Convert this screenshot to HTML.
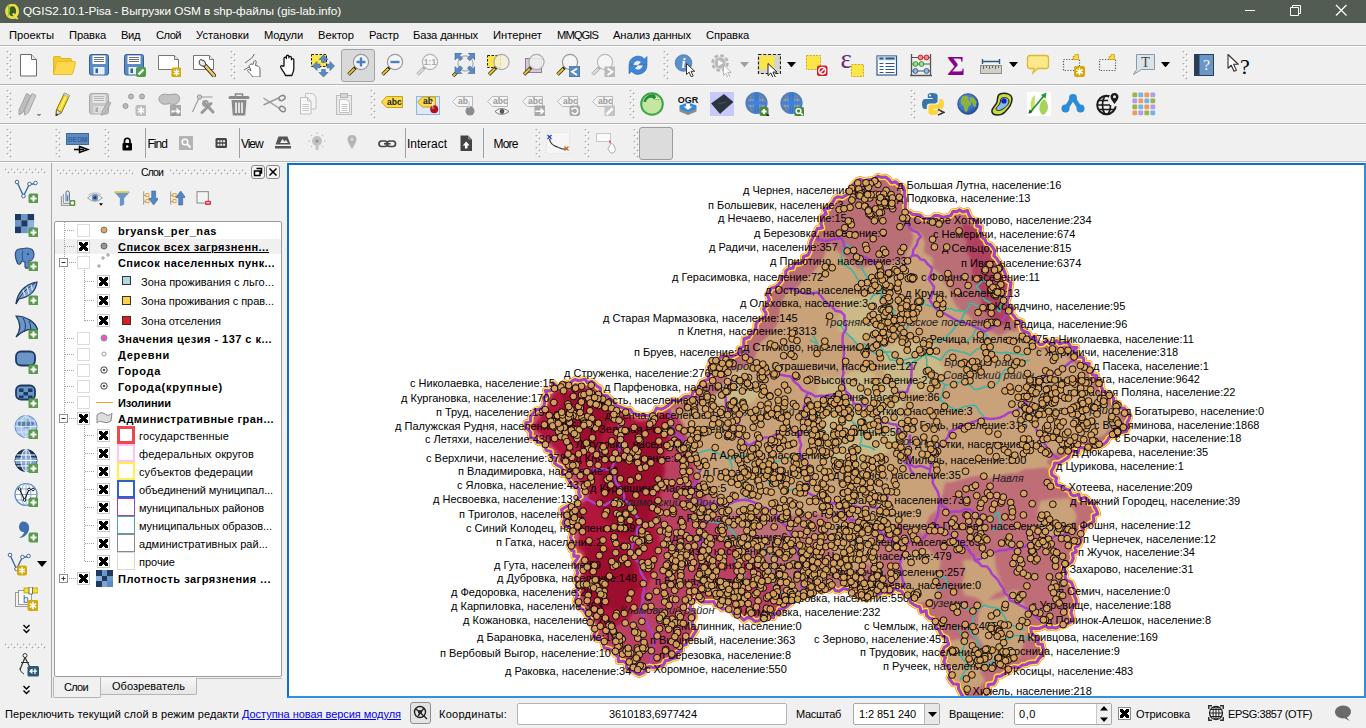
<!DOCTYPE html><html lang="ru"><head><meta charset="utf-8"><title>QGIS</title><style>
*{box-sizing:border-box;margin:0;padding:0}
html,body{width:1366px;height:728px;overflow:hidden;background:#f0f0f0;font-family:"Liberation Sans",sans-serif;font-size:12px;color:#000}
.abs{position:absolute;white-space:nowrap}
#title{position:absolute;left:0;top:0;width:1366px;height:23px;background:#525c52}
#title .t{position:absolute;left:23px;top:4px;color:#fff;font-size:12.4px;letter-spacing:0px;white-space:nowrap}
#menu{position:absolute;left:0;top:23px;width:1366px;height:23px;background:#f0f0f0}
#menu span{position:absolute;top:5px;font-size:12px;white-space:nowrap}
.hl{position:absolute;left:0;width:1366px;height:2px;background:linear-gradient(#b6b6b6 50%,#fbfbfb 50%)}
.grip{position:absolute;width:6px;background-image:radial-gradient(circle at 1.500px 0.500px,#adadad 0.850px,transparent 1.100px),radial-gradient(circle at 4.500px 3.500px,#adadad 0.850px,transparent 1.100px),radial-gradient(circle at 2.500px 1.500px,#fff 0.850px,transparent 1.100px),radial-gradient(circle at 5.500px 4.500px,#fff 0.850px,transparent 1.100px);background-size:6px 6px}
.gripw{position:absolute;height:6px;background-image:radial-gradient(circle at 0.500px 1.500px,#adadad 0.850px,transparent 1.100px),radial-gradient(circle at 3.500px 4.500px,#adadad 0.850px,transparent 1.100px),radial-gradient(circle at 1.500px 2.500px,#fff 0.850px,transparent 1.100px),radial-gradient(circle at 4.500px 5.500px,#fff 0.850px,transparent 1.100px);background-size:6px 6px}
.ic{position:absolute;width:24px;height:24px;overflow:visible}
.tx{font-family:"DejaVu Sans Condensed","Liberation Sans",sans-serif}
.tree{position:absolute;left:54px;top:221px;width:228px;height:456px;background:#fff;border:1px solid #9c9c9c;border-radius:2px}
.row{position:absolute;left:0;white-space:nowrap;font-family:"DejaVu Sans Condensed","Liberation Sans",sans-serif;font-size:11px}
.cb{position:absolute;width:13px;height:13px;border:1px solid #dcdcdc;background:#fff}
.cb.on{border-color:#c8c8c8}
.cb.on:before{content:"";position:absolute;left:1px;top:1px;width:9px;height:9px;background:
 linear-gradient(45deg,transparent 38%,#000 38%,#000 62%,transparent 62%),
 linear-gradient(-45deg,transparent 38%,#000 38%,#000 62%,transparent 62%)}
.sb{position:absolute;top:699px;font-family:"DejaVu Sans Condensed","Liberation Sans",sans-serif;font-size:11px;white-space:nowrap}
</style></head><body><div id="title"><svg class="abs" style="left:4px;top:3px" width="17" height="17" viewBox="0 0 17 17"><path d="M8.5 0.8C4 0.8 1.2 4 1.2 8.3c0 4.4 3 7.6 7 7.6 1 0 1.8-.1 2.600-.5l2.500 1.200 1.200-1.600-1.800-1.100c1.500-1.400 2.300-3.300 2.300-5.600 0-4.300-2.700-7.500-6.500-7.500z" fill="#e9e14a"/><path d="M8.600 3.300c-2.300 0-3.800 2-3.800 5s1.500 5 3.800 5c.4 0 .8-.1 1.100-.2L8 11.600l1.300-1.800 2 1.400c.5-.8.800-1.800.800-2.900 0-3-1.400-5-3.500-5z" fill="#3f5a1c"/><path d="M3 2.500c1.500 2.500 1.500 8 .5 12 2.500-3 3.500-8 1.500-12.500z" fill="#8cc63f"/></svg><span class="abs" style="left:23px;top:3.5px;font:11.8px Liberation Sans,sans-serif;letter-spacing:-0.072px;line-height:14.8px;color:#fff;">QGIS2.10.1-Pisa - Выгрузки OSM в shp-файлы (gis-lab.info)</span><svg class="abs" style="left:1230px;top:0" width="136" height="23" viewBox="0 0 136 23" fill="none" stroke="#fff" stroke-width="1"><path d="M15 10.500h10"/><path d="M60.500 7.500h8v8h-8z M62.500 7.500v-2h8v8h-2"/><path d="M106 5l10.500 10.500M116.500 5L106 15.500" stroke-width="1.200"/></svg></div><div id="menu"><span class="abs" style="left:9px;top:5px;font:11.2px Liberation Sans,sans-serif;letter-spacing:0.015px;line-height:14.2px;">Проекты</span><span class="abs" style="left:69px;top:5px;font:11.2px Liberation Sans,sans-serif;letter-spacing:-0.132px;line-height:14.2px;">Правка</span><span class="abs" style="left:121px;top:5px;font:11.2px Liberation Sans,sans-serif;letter-spacing:-0.413px;line-height:14.2px;">Вид</span><span class="abs" style="left:156px;top:5px;font:11.2px Liberation Sans,sans-serif;letter-spacing:-0.551px;line-height:14.2px;">Слой</span><span class="abs" style="left:196px;top:5px;font:11.2px Liberation Sans,sans-serif;letter-spacing:0.038px;line-height:14.2px;">Установки</span><span class="abs" style="left:264px;top:5px;font:11.2px Liberation Sans,sans-serif;letter-spacing:-0.179px;line-height:14.2px;">Модули</span><span class="abs" style="left:318px;top:5px;font:11.2px Liberation Sans,sans-serif;letter-spacing:-0.024px;line-height:14.2px;">Вектор</span><span class="abs" style="left:369px;top:5px;font:11.2px Liberation Sans,sans-serif;letter-spacing:-0.050px;line-height:14.2px;">Растр</span><span class="abs" style="left:413px;top:5px;font:11.2px Liberation Sans,sans-serif;letter-spacing:-0.149px;line-height:14.2px;">База данных</span><span class="abs" style="left:493px;top:5px;font:11.2px Liberation Sans,sans-serif;letter-spacing:0.023px;line-height:14.2px;">Интернет</span><span class="abs" style="left:557px;top:5px;font:11.2px Liberation Sans,sans-serif;letter-spacing:-0.935px;line-height:14.2px;">MMQGIS</span><span class="abs" style="left:613px;top:5px;font:11.2px Liberation Sans,sans-serif;letter-spacing:-0.124px;line-height:14.2px;">Анализ данных</span><span class="abs" style="left:706px;top:5px;font:11.2px Liberation Sans,sans-serif;letter-spacing:-0.127px;line-height:14.2px;">Справка</span></div><div class="hl" style="top:45px"></div><div class="hl" style="top:84px"></div><div class="hl" style="top:123px"></div><div class="hl" style="top:161px"></div><div class="grip" style="left:6px;top:51px;height:29px"></div><div class="grip" style="left:230px;top:51px;height:29px"></div><div class="grip" style="left:663px;top:51px;height:29px"></div><div class="grip" style="left:1182px;top:51px;height:29px"></div><div class="abs" style="left:341px;top:49px;width:34px;height:33px;background:#d9d9d9;border:1px solid #a3a3a3;border-radius:3px"></div><svg class="abs" style="left:346px;top:53px" width="24" height="24" viewBox="0 0 24 24"><path d="M9.528 14.472l-7 7" stroke="#222" stroke-width="3.400" stroke-linecap="butt"/><path d="M9.028 14.972l-6.300 6.300" stroke="#f3c319" stroke-width="2" /><circle cx="9.376" cy="14.624" r="1.600" fill="#222"/><circle cx="15" cy="9" r="7.6" fill="#f4f4f4" stroke="#9a9a9a" stroke-width="1.200"/><path d="M10.500 9h9M15 4.500v9" stroke="#4a7fc0" stroke-width="2.400"/></svg><svg class="abs" style="left:17px;top:53px" width="24" height="24" viewBox="0 0 24 24"><path d="M3.500 1.500h11l5 5v16.500h-16z" fill="#fff" stroke="#6a6a6a" stroke-width="1" stroke-linejoin="round"/><path d="M14.500 1.500v5h5" fill="#e8e8e8" stroke="#6a6a6a" stroke-width="1" stroke-linejoin="round"/></svg><svg class="abs" style="left:52px;top:53px" width="24" height="24" viewBox="0 0 24 24"><path d="M1.500 21V4.500q0-1 1-1h5.500l1.500 2h9q1 0 1 1V9" fill="#f5c92e" stroke="#e0b41c" stroke-width="1"/><path d="M1.500 21.500l3-12q.2-1 1.200-1h17q1 0 .8 1l-2.700 11q-.2 1-1.200 1z" fill="#fdd84e" stroke="#e6bc2a" stroke-width="1"/></svg><svg class="abs" style="left:87px;top:53px" width="24" height="24" viewBox="0 0 24 24"><rect x="2.500" y="1.500" width="19" height="20.500" rx="2" fill="#5b8bc5" stroke="#2f5f96" stroke-width="1"/><rect x="5.500" y="2.500" width="13" height="8.500" fill="#fff"/><path d="M7 4.500h10M7 6.500h10M7 8.500h10" stroke="#6f6f6f" stroke-width="1"/><rect x="6.500" y="14" width="11" height="7.500" fill="#e8eef6"/><rect x="8.500" y="15.500" width="2.500" height="4.500" fill="#2f5f96"/></svg><svg class="abs" style="left:122px;top:53px" width="24" height="24" viewBox="0 0 24 24"><rect x="2.500" y="1.500" width="19" height="20.500" rx="2" fill="#5b8bc5" stroke="#2f5f96" stroke-width="1"/><rect x="5.500" y="2.500" width="13" height="8.500" fill="#fff"/><path d="M7 4.500h10M7 6.500h10M7 8.500h10" stroke="#6f6f6f" stroke-width="1"/><rect x="6.500" y="14" width="11" height="7.500" fill="#e8eef6"/><rect x="8.500" y="15.500" width="2.500" height="4.500" fill="#2f5f96"/><rect x="14" y="14" width="10" height="10" rx="2" fill="#4d9a4a"/><path d="M16.500 21.500l5-5" stroke="#fff" stroke-width="2.400"/></svg><svg class="abs" style="left:157px;top:53px" width="24" height="24" viewBox="0 0 24 24"><path d="M1.500 2.500h16l4 4v10h-20z" fill="#fff" stroke="#777" stroke-width="1"/><path d="M17.500 2.500v4h4" fill="#eee" stroke="#777" stroke-width="1"/><rect x="14.5" y="14.5" width="10" height="10" rx="2" fill="#d4a90d"/><path d="M19.5 16.3v6.4 M16.716 17.9l5.568 3.2 M16.716 21.1l5.568 -3.2" stroke="#fff" stroke-width="1.500" fill="none"/></svg><svg class="abs" style="left:191.5px;top:53px" width="24" height="24" viewBox="0 0 24 24"><path d="M1.500 2.500h16l4 4v10h-20z" fill="#fff" stroke="#777" stroke-width="1"/><path d="M17.500 2.500v4h4" fill="#eee" stroke="#777" stroke-width="1"/><path d="M13.500 13l8.500 9.500" stroke="#333" stroke-width="4.200" stroke-linecap="round"/><path d="M14 13.500l8 9" stroke="#f1c96a" stroke-width="2.600" stroke-linecap="round"/><path d="M8.500 6.500a3.800 3.800 0 1 0 5.500 5.200l-1.500-3.700z" fill="#e8e8e8" stroke="#333" stroke-width="1"/></svg><svg class="abs" style="left:241px;top:53px" width="24" height="24" viewBox="0 0 24 24"><path d="M4 10l6-4.500M3 17l5-3M10.500 5.500l3-4.500" stroke="#666" stroke-width="1" fill="none"/><path d="M8 12.500c1-1.500 3-2 4-1l1-3c.5-1.500 2.500-1 2.200.5l-.7 3.500c2 .3 4.500 1 4.500 3.500v8h-7.500c-.5-2-2.500-3.500-4.500-5.500-1-1 0-2.500 1.300-1.800l1.700 1z" fill="#fff" stroke="#666" stroke-width="1" stroke-linejoin="round"/></svg><svg class="abs" style="left:276px;top:53px" width="24" height="24" viewBox="0 0 24 24"><path d="M8 13V5.500c0-1.800 2.400-1.800 2.400 0V3.600c0-1.800 2.500-1.800 2.500 0v1.200c0-1.800 2.500-1.800 2.500 0v2c0-1.700 2.400-1.700 2.400 0V15c0 4.500-1.500 5.500-2 7.500H9.500c-.5-2-2.500-4-4.500-7.500-1.200-2 .8-3.300 2-1.500z" fill="#fff" stroke="#111" stroke-width="1.300" stroke-linejoin="round"/></svg><svg class="abs" style="left:310.5px;top:53px" width="24" height="24" viewBox="0 0 24 24"><rect x="0.500" y="1.500" width="15" height="12" fill="#fbe64a" stroke="#222" stroke-width="1" stroke-dasharray="2.500 1.500"/><path transform="rotate(0 12.5 13)" d="M12.5 2l4.500 4.500h-2.700v3h-3.600v-3h-2.700z" fill="#5b8bc5" stroke="#2f5f96" stroke-width=".6"/><path transform="rotate(90 12.5 13)" d="M12.5 2l4.500 4.500h-2.700v3h-3.600v-3h-2.700z" fill="#5b8bc5" stroke="#2f5f96" stroke-width=".6"/><path transform="rotate(180 12.5 13)" d="M12.5 2l4.500 4.500h-2.700v3h-3.600v-3h-2.700z" fill="#5b8bc5" stroke="#2f5f96" stroke-width=".6"/><path transform="rotate(270 12.5 13)" d="M12.5 2l4.500 4.500h-2.700v3h-3.600v-3h-2.700z" fill="#5b8bc5" stroke="#2f5f96" stroke-width=".6"/></svg><svg class="abs" style="left:380px;top:53px" width="24" height="24" viewBox="0 0 24 24"><path d="M9.528 14.472l-7 7" stroke="#222" stroke-width="3.400" stroke-linecap="butt"/><path d="M9.028 14.972l-6.300 6.300" stroke="#f3c319" stroke-width="2" /><circle cx="9.376" cy="14.624" r="1.600" fill="#222"/><circle cx="15" cy="9" r="7.6" fill="#f4f4f4" stroke="#9a9a9a" stroke-width="1.200"/><path d="M10.500 9h9" stroke="#4a7fc0" stroke-width="2.400"/></svg><svg class="abs" style="left:415px;top:53px" width="24" height="24" viewBox="0 0 24 24"><path d="M9.528 14.472l-7 7" stroke="#aaa" stroke-width="3.400" stroke-linecap="butt"/><path d="M9.028 14.972l-6.300 6.300" stroke="#dcdcdc" stroke-width="2" /><circle cx="9.376" cy="14.624" r="1.600" fill="#aaa"/><circle cx="15" cy="9" r="7.6" fill="#f6f6f6" stroke="#b5b5b5" stroke-width="1.200"/><text x="15" y="12.200" text-anchor="middle" font-family="Liberation Sans,sans-serif" font-weight="bold" font-size="8.500" fill="#a8a8a8">1:1</text></svg><svg class="abs" style="left:451px;top:53px" width="24" height="24" viewBox="0 0 24 24"><path d="M9.028 15.972l-7 7" stroke="#222" stroke-width="3.400" stroke-linecap="butt"/><path d="M8.528 16.472l-6.300 6.300" stroke="#f3c319" stroke-width="2" /><circle cx="8.876" cy="16.124" r="1.600" fill="#222"/><circle cx="14.5" cy="10.5" r="7.6" fill="#eee" stroke="#aaa" stroke-width="1.200"/><path transform="translate(4 0) scale(1 1)" d="M0 0h7l-2.300 2.300 3 3-2.400 2.400-3-3-2.300 2.300z" fill="#5b8bc5" stroke="#2f5f96" stroke-width=".5"/><path transform="translate(24 0) scale(-1 1)" d="M0 0h7l-2.300 2.300 3 3-2.400 2.400-3-3-2.300 2.300z" fill="#5b8bc5" stroke="#2f5f96" stroke-width=".5"/><path transform="translate(4 20.5) scale(1 -1)" d="M0 0h7l-2.300 2.300 3 3-2.400 2.400-3-3-2.300 2.300z" fill="#5b8bc5" stroke="#2f5f96" stroke-width=".5"/><path transform="translate(24 20.5) scale(-1 -1)" d="M0 0h7l-2.300 2.300 3 3-2.400 2.400-3-3-2.300 2.300z" fill="#5b8bc5" stroke="#2f5f96" stroke-width=".5"/></svg><svg class="abs" style="left:486px;top:53px" width="24" height="24" viewBox="0 0 24 24"><rect x="1.500" y="2.500" width="13" height="12" fill="#fbe64a" stroke="#222" stroke-width="1" stroke-dasharray="2.500 1.500"/><path d="M10.028 14.472l-7 7" stroke="#222" stroke-width="3.400" stroke-linecap="butt"/><path d="M9.528 14.972l-6.300 6.300" stroke="#f3c319" stroke-width="2" /><circle cx="9.876" cy="14.624" r="1.600" fill="#222"/><circle cx="15.5" cy="9" r="7.6" fill="rgba(244,240,214,.85)" stroke="#aaa" stroke-width="1.200"/></svg><svg class="abs" style="left:521px;top:53px" width="24" height="24" viewBox="0 0 24 24"><rect x="4.500" y="5.500" width="16" height="14" fill="#d9c7dc" stroke="#8e7a92" stroke-width="1"/><path d="M10.028 14.472l-7 7" stroke="#222" stroke-width="3.400" stroke-linecap="butt"/><path d="M9.528 14.972l-6.300 6.300" stroke="#f3c319" stroke-width="2" /><circle cx="9.876" cy="14.624" r="1.600" fill="#222"/><circle cx="15.5" cy="9" r="7.6" fill="rgba(240,240,240,.85)" stroke="#aaa" stroke-width="1.200"/></svg><svg class="abs" style="left:556px;top:53px" width="24" height="24" viewBox="0 0 24 24"><path d="M8.528 14.472l-7 7" stroke="#222" stroke-width="3.400" stroke-linecap="butt"/><path d="M8.028 14.972l-6.300 6.300" stroke="#f3c319" stroke-width="2" /><circle cx="8.376" cy="14.624" r="1.600" fill="#222"/><circle cx="14" cy="9" r="7.6" fill="#f4f4f4" stroke="#9a9a9a" stroke-width="1.200"/><rect x="13.500" y="13.500" width="10.500" height="10.500" fill="#5b8bc5" stroke="#2f5f96" stroke-width=".6"/><path d="M21 15.500l-5 3.200 5 3.200" stroke="#fff" stroke-width="1.800" fill="none"/></svg><svg class="abs" style="left:591px;top:53px" width="24" height="24" viewBox="0 0 24 24"><path d="M8.528 14.472l-7 7" stroke="#aaa" stroke-width="3.400" stroke-linecap="butt"/><path d="M8.028 14.972l-6.300 6.300" stroke="#dedede" stroke-width="2" /><circle cx="8.376" cy="14.624" r="1.600" fill="#aaa"/><circle cx="14" cy="9" r="7.6" fill="#f6f6f6" stroke="#bbb" stroke-width="1.200"/><rect x="13.500" y="13.500" width="10.500" height="10.500" fill="#b9b9b9"/><path d="M16.500 15.500l5 3.200-5 3.200" stroke="#fff" stroke-width="1.800" fill="none"/></svg><svg class="abs" style="left:626px;top:53px" width="24" height="24" viewBox="0 0 24 24"><path d="M3 12a9 9 0 0 1 15.500-6l2.500-2.500v8.500h-8.500l3-3a5 5 0 0 0-8.500 3z" fill="#3f86d6" stroke="#2a66ad" stroke-width=".6"/><path d="M21 12.500a9 9 0 0 1-15.500 6l-2.500 2.500v-8.500h8.500l-3 3a5 5 0 0 0 8.500-3z" fill="#3f86d6" stroke="#2a66ad" stroke-width=".6"/></svg><svg class="abs" style="left:674px;top:53px" width="24" height="24" viewBox="0 0 24 24"><circle cx="9.500" cy="10" r="8.300" fill="#5d8fcb" stroke="#4475b0" stroke-width=".8"/><text x="9.500" y="15" text-anchor="middle" font-family="Liberation Serif,serif" font-style="italic" font-weight="bold" font-size="14" fill="#fff">i</text><path transform="translate(12.5 10.5) scale(1)" d="M0 0v11l2.600-2.400 2.200 4.800 1.900-.9-2.200-4.700h3.700z" fill="#fff" stroke="#222" stroke-width="0.900" stroke-linejoin="round"/></svg><svg class="abs" style="left:709.5px;top:53px" width="24" height="24" viewBox="0 0 24 24"><circle cx="10" cy="10" r="7.500" fill="#e4e4e4" stroke="#b4b4b4" stroke-width="2.500" stroke-dasharray="3.500 2.400"/><circle cx="10" cy="10" r="5.500" fill="#b9b9b9"/><path d="M8.200 7v6l5-3z" fill="#fff"/><path transform="translate(13.5 12) scale(0.95)" d="M0 0v11l2.600-2.400 2.200 4.800 1.900-.9-2.200-4.700h3.700z" fill="#fff" stroke="#aaa" stroke-width="0.900" stroke-linejoin="round"/></svg><svg class="abs" style="left:757px;top:53px" width="24" height="24" viewBox="0 0 24 24"><rect x="1.500" y="1.500" width="22" height="19" fill="#d4d4d4" stroke="#222" stroke-width="1.200" stroke-dasharray="3 1.800"/><rect x="2.500" y="2.500" width="15" height="14" fill="#fbe64a"/><path transform="translate(11 10.5) scale(1.1)" d="M0 0v11l2.600-2.400 2.200 4.800 1.900-.9-2.200-4.700h3.700z" fill="#fff" stroke="#222" stroke-width="0.900" stroke-linejoin="round"/></svg><svg class="abs" style="left:805px;top:53px" width="24" height="24" viewBox="0 0 24 24"><rect x="1.500" y="2.500" width="14" height="14" fill="#fbe64a" stroke="#cfa90f" stroke-width="1" stroke-dasharray="2 1.200"/><rect x="12" y="12.500" width="10.500" height="10.500" rx="2" fill="#d4202c"/><circle cx="17.200" cy="17.700" r="3.300" fill="none" stroke="#fff" stroke-width="1.400"/><path d="M15 20l4.500-4.500" stroke="#fff" stroke-width="1.400"/></svg><svg class="abs" style="left:840.5px;top:53px" width="24" height="24" viewBox="0 0 24 24"><text x="-0.500" y="15" font-family="Liberation Serif,serif" font-size="27" fill="#6a2a7a">ε</text><rect x="10.500" y="11.500" width="12" height="12" fill="#fbe64a" stroke="#cfa90f" stroke-width="1" stroke-dasharray="2 1.200"/></svg><svg class="abs" style="left:874.5px;top:53px" width="24" height="24" viewBox="0 0 24 24"><rect x="2" y="3" width="19.500" height="19" fill="#fff" stroke="#2d5a82" stroke-width="1.200"/><rect x="2.500" y="3.500" width="18.500" height="4" fill="#c7d9ec"/><path d="M4.500 5.500h4M10.500 5.500h9" stroke="#2d5a82" stroke-width="1.800"/><path d="M4.500 10.500h4M10.500 10.500h9M4.500 13.500h4M10.500 13.500h9M4.500 16.500h4M10.500 16.500h9M4.500 19.500h4M10.500 19.500h9" stroke="#2d5a82" stroke-width="1"/></svg><svg class="abs" style="left:909px;top:53px" width="24" height="24" viewBox="0 0 24 24"><path d="M2.500 1v21M21.500 1v21M1 22.500h22" stroke="#555" stroke-width="1.300" fill="none"/><path d="M2.500 4.500h19M2.500 11h19M2.500 18h19" stroke="#555" stroke-width="1"/><circle cx="11.500" cy="4.500" r="2.400" fill="#e88" stroke="#c22" /><circle cx="17.500" cy="4.500" r="2.400" fill="#e88" stroke="#c22"/><circle cx="6.500" cy="11" r="2.400" fill="#9d9" stroke="#393"/><circle cx="12.500" cy="11" r="2.400" fill="#9d9" stroke="#393"/><circle cx="6.500" cy="18" r="2.400" fill="#9bd" stroke="#369"/><circle cx="17.500" cy="18" r="2.400" fill="#9bd" stroke="#369"/></svg><svg class="abs" style="left:943.5px;top:53px" width="24" height="24" viewBox="0 0 24 24"><text x="12" y="21.500" text-anchor="middle" font-family="Liberation Serif,serif" font-weight="bold" font-size="27" fill="#8b008b">Σ</text></svg><svg class="abs" style="left:979px;top:53px" width="24" height="24" viewBox="0 0 24 24"><rect x="1.500" y="12.500" width="21" height="8" fill="#cdd1c8" stroke="#8c9088" stroke-width="1"/><path d="M4.500 13v3M7.500 13v2M10.500 13v3M13.500 13v2M16.500 13v3M19.500 13v2" stroke="#666" stroke-width="1"/><path d="M3.500 8.500h17M3.500 6v5M20.500 6v5" stroke="#2d5a82" stroke-width="1.400"/></svg><svg class="abs" style="left:1025.5px;top:53px" width="24" height="24" viewBox="0 0 24 24"><path d="M4 2.500h16q2.500 0 2.500 2.500v8q0 2.500-2.500 2.500h-8.500l-4.500 4.500 1-4.500h-4q-2.500 0-2.500-2.500v-8q0-2.500 2.500-2.500z" fill="#fbe88a" stroke="#d9b92f" stroke-width="1.300"/></svg><svg class="abs" style="left:1062px;top:53px" width="24" height="24" viewBox="0 0 24 24"><rect x="1.500" y="6.500" width="16" height="11" fill="none" stroke="#555" stroke-width="1.200" stroke-dasharray="1.200 1.500"/><path d="M11 3.500h2v-2h3.500v5h-5.500z" fill="#fcd94e" stroke="#c9a20d" stroke-width=".8"/><rect x="12" y="13" width="11" height="11" rx="2" fill="#d4a90d"/><path d="M17.5 14.8v7.4 M14.281 16.65l6.438 3.7 M14.281 20.35l6.438 -3.7" stroke="#fff" stroke-width="1.500" fill="none"/></svg><svg class="abs" style="left:1098px;top:53px" width="24" height="24" viewBox="0 0 24 24"><rect x="1.500" y="6.500" width="16" height="11" fill="none" stroke="#555" stroke-width="1.200" stroke-dasharray="1.200 1.500"/><path d="M11 3.500h2v-2h3.500v5h-5.500z" fill="#fcd94e" stroke="#c9a20d" stroke-width=".8"/></svg><svg class="abs" style="left:1131.5px;top:53px" width="24" height="24" viewBox="0 0 24 24"><path d="M4.500 1.500h18v15h-13l-8 5 3-5z" fill="#dbe4ea" stroke="#8a9aa4" stroke-width="1"/><text x="13.500" y="13.500" text-anchor="middle" font-family="Liberation Serif,serif" font-size="14" fill="#444">T</text></svg><svg class="abs" style="left:1192px;top:53px" width="24" height="24" viewBox="0 0 24 24"><rect x="2.500" y="1.500" width="19" height="21" fill="#6b96c8" stroke="#2b3e55" stroke-width="1"/><rect x="2.500" y="1.500" width="5" height="21" fill="#2b3e55"/><text x="14.500" y="17" text-anchor="middle" font-family="Liberation Serif,serif" font-size="15" fill="#fff">?</text></svg><svg class="abs" style="left:1227px;top:53px" width="24" height="24" viewBox="0 0 24 24"><path transform="translate(1 1.5) scale(1.25)" d="M0 0v11l2.600-2.400 2.200 4.800 1.900-.9-2.200-4.700h3.700z" fill="#fff" stroke="#333" stroke-width="0.900" stroke-linejoin="round"/><text x="18" y="21" text-anchor="middle" font-family="Liberation Serif,serif" font-size="22" fill="#000">?</text></svg><svg class="abs" style="left:739.5px;top:62px" width="9" height="5.4" viewBox="0 0 10 6"><path d="M0 0h10l-5 6z" fill="#a0a0a0"/></svg><svg class="abs" style="left:786.5px;top:62px" width="9" height="5.4" viewBox="0 0 10 6"><path d="M0 0h10l-5 6z" fill="#000"/></svg><svg class="abs" style="left:1008.5px;top:62px" width="9" height="5.4" viewBox="0 0 10 6"><path d="M0 0h10l-5 6z" fill="#000"/></svg><svg class="abs" style="left:1160.5px;top:62px" width="9" height="5.4" viewBox="0 0 10 6"><path d="M0 0h10l-5 6z" fill="#000"/></svg><div class="grip" style="left:6px;top:90px;height:29px"></div><div class="grip" style="left:370px;top:90px;height:29px"></div><div class="grip" style="left:629px;top:90px;height:29px"></div><div class="grip" style="left:910px;top:90px;height:29px"></div><svg class="abs" style="left:17px;top:92px" width="24" height="24" viewBox="0 0 24 24"><path d="M9.500 1.500l4 2-7.500 17-4 2.500v-5z" fill="#bdbdbd" stroke="#9a9a9a" stroke-width=".8"/><path d="M15 1.500l4 2-7.500 17-4 2.500v-5z" fill="#c9c9c9" stroke="#9a9a9a" stroke-width=".8"/><path d="M19.500 22h5l-2.500 2.500z" fill="#888"/></svg><svg class="abs" style="left:51.5px;top:92px" width="24" height="24" viewBox="0 0 24 24"><path d="M12.500 1l5 2.500-8 17-5.500 3.500.5-6.500z" fill="#f3d51d" stroke="#8a7a10" stroke-width="1" stroke-linejoin="round"/><path d="M15 2.200l-8 17" stroke="#fff6a0" stroke-width="1.300"/><path d="M4.500 17.500l5 3-5.500 3.500z" fill="#e9d9b9" stroke="#555" stroke-width=".8"/><path d="M4.200 21.500l1.800 1.100-2 1.400z" fill="#222"/><path d="M12.500 1l5 2.500-.8 1.800-5-2.500z" fill="#ddd" stroke="#999" stroke-width=".6"/></svg><svg class="abs" style="left:87px;top:92px" width="24" height="24" viewBox="0 0 24 24"><rect x="2.500" y="1.500" width="19" height="20.500" rx="2" fill="#c6c6c6" stroke="#a8a8a8" stroke-width="1"/><rect x="5.500" y="2.500" width="13" height="8.500" fill="#e6e6e6"/><path d="M7 4.500h10M7 6.500h10M7 8.500h10" stroke="#b5b5b5" stroke-width="1"/><rect x="6.500" y="14" width="11" height="7.500" fill="#dedede"/><rect x="8.500" y="15.500" width="2.500" height="4.500" fill="#a8a8a8"/><path d="M21 9.500l3 1.500-6 10.500-3.500 2 .5-4z" fill="#bdbdbd" stroke="#9a9a9a" stroke-width=".8"/></svg><svg class="abs" style="left:122px;top:92px" width="24" height="24" viewBox="0 0 24 24"><circle cx="9" cy="4.500" r="2.500" fill="#bbb" stroke="#9a9a9a"/><circle cx="20" cy="4.500" r="2.500" fill="#bbb" stroke="#9a9a9a"/><circle cx="3.500" cy="14" r="2.500" fill="#bbb" stroke="#9a9a9a"/><rect x="13.5" y="13" width="11" height="11" rx="2" fill="#bdbdbd"/><path d="M19 14.8v7.4 M15.781 16.65l6.438 3.7 M15.781 20.35l6.438 -3.7" stroke="#fff" stroke-width="1.500" fill="none"/></svg><svg class="abs" style="left:157px;top:92px" width="24" height="24" viewBox="0 0 24 24"><path d="M2 7c0-4 4-5.500 8-4.500s6-1.500 10 0 3 8-1 9.500-5-1-9 0-8-1-8-5z" fill="#c2c2c2" stroke="#a0a0a0" stroke-width="1"/><rect x="13" y="13" width="11" height="11" fill="#a9a9a9"/><path d="M14.500 18.500h5v-3l4 4-4 4v-3h-5z" fill="#fff"/><path d="M13 24l5-5 6 5z" fill="#8d8d8d" opacity=".6"/></svg><svg class="abs" style="left:192px;top:92px" width="24" height="24" viewBox="0 0 24 24"><circle cx="7.500" cy="5" r="2.200" fill="#ccc" stroke="#999"/><path d="M9.500 5h11M6.500 7l-6 13" stroke="#999" stroke-width="1.100" fill="none"/><path d="M10 20.500l9-9M12.500 11l8.500 9" stroke="#9a9a9a" stroke-width="3" stroke-linecap="round"/><circle cx="13.500" cy="11.500" r="2.600" fill="none" stroke="#9a9a9a" stroke-width="1.600"/></svg><svg class="abs" style="left:227px;top:92px" width="24" height="24" viewBox="0 0 24 24"><path d="M3 5.500h18" stroke="#8a8a8a" stroke-width="3" stroke-linecap="round"/><path d="M8.500 4v-2h7v2" stroke="#8a8a8a" stroke-width="1.600" fill="none"/><path d="M4.500 8h15l-1.300 15.500h-12.400z" fill="#8a8a8a"/><path d="M9 10.500v10.500M12 10.500v10.500M15 10.500v10.500" stroke="#f0f0f0" stroke-width="1.700"/></svg><svg class="abs" style="left:262px;top:92px" width="24" height="24" viewBox="0 0 24 24"><path d="M1.500 6l16 10.500M1.500 13l16-7.500" stroke="#9a9a9a" stroke-width="1.400" fill="none"/><ellipse cx="20" cy="6" rx="3.200" ry="2.300" transform="rotate(-25 20 6)" fill="none" stroke="#888" stroke-width="1.500"/><ellipse cx="20.500" cy="17" rx="3.200" ry="2.300" transform="rotate(35 20.500 17)" fill="none" stroke="#888" stroke-width="1.500"/></svg><svg class="abs" style="left:296.5px;top:92px" width="24" height="24" viewBox="0 0 24 24"><path d="M8.500 1.500h7l3.500 3.500v12h-10.500z" fill="#f4f4f4" stroke="#c2c2c2"/><path d="M3.500 5.500h7l3.500 3.500v13h-10.500z" fill="#f8f8f8" stroke="#bcbcbc"/><path d="M10.500 5.500v3.500h3.500" fill="none" stroke="#bcbcbc"/><path d="M5.500 12.500h6.500M5.500 14.500h6.500M5.500 16.500h6.500M5.500 18.500h6.500" stroke="#c8c8c8"/></svg><svg class="abs" style="left:332px;top:92px" width="24" height="24" viewBox="0 0 24 24"><rect x="4.500" y="3.500" width="15" height="19" fill="#eaeaea" stroke="#bdbdbd"/><rect x="8.500" y="1.500" width="7" height="4" fill="#d6d6d6" stroke="#b5b5b5"/><path d="M7.500 7.500h7l3 3v10h-10z" fill="#fafafa" stroke="#c2c2c2"/><path d="M9.500 12.500h6M9.500 14.500h6M9.500 16.500h6M9.500 18.500h6" stroke="#c8c8c8"/></svg><svg class="abs" style="left:379.5px;top:92px" width="24" height="24" viewBox="0 0 24 24"><path d="M1.5 10l5-5.5h16v11h-16z" fill="#fcd94e" stroke="#c9a20d" stroke-width="1"/><text x="7" y="12.9" font-family="Liberation Sans,sans-serif" font-weight="bold" font-size="8.500" fill="#222">abc</text></svg><svg class="abs" style="left:415.5px;top:92px" width="24" height="24" viewBox="0 0 24 24"><rect x="0.500" y="4.500" width="23" height="18" fill="#dfe9f5" stroke="#8fb4e6" stroke-width="1"/><path d="M1.5 10l5-5h13v10h-13z" fill="#fcd94e" stroke="#c9a20d" stroke-width="1"/><text x="7" y="12.4" font-family="Liberation Sans,sans-serif" font-weight="bold" font-size="8.500" fill="#222">ab</text><circle cx="18.200" cy="17.200" r="4" fill="#b01020"/><circle cx="17" cy="16" r="1.300" fill="#e06070"/><path d="M16.500 9.500v5" stroke="#eee" stroke-width="1.600"/></svg><svg class="abs" style="left:451px;top:92px" width="24" height="24" viewBox="0 0 24 24"><path d="M1.5 9.5l5-5h15v10h-15z" fill="#f4f4f4" stroke="#b9b9b9" stroke-width="1"/><text x="7" y="11.9" font-family="Liberation Sans,sans-serif" font-weight="bold" font-size="8.500" fill="#9a9a9a">ab</text><circle cx="19" cy="19" r="4.500" fill="#8c8c8c"/><path d="M18 9.500v6" stroke="#ddd" stroke-width="1.800"/></svg><svg class="abs" style="left:486px;top:92px" width="24" height="24" viewBox="0 0 24 24"><path d="M1.5 9.5l5-5h15v10h-15z" fill="#f4f4f4" stroke="#b9b9b9" stroke-width="1"/><text x="7" y="11.9" font-family="Liberation Sans,sans-serif" font-weight="bold" font-size="8.500" fill="#9a9a9a">abc</text><path d="M9 19.500q6-6 14 0-8 6-14 0z" fill="#fff" stroke="#777" stroke-width="1"/><circle cx="16" cy="19.500" r="2.400" fill="#555"/></svg><svg class="abs" style="left:521px;top:92px" width="24" height="24" viewBox="0 0 24 24"><path d="M1.5 9.5l5-5h15v10h-15z" fill="#f4f4f4" stroke="#b9b9b9" stroke-width="1"/><text x="7" y="11.9" font-family="Liberation Sans,sans-serif" font-weight="bold" font-size="8.500" fill="#9a9a9a">abc</text><rect x="13.500" y="13.500" width="10.500" height="10.500" fill="#a9a9a9"/><path d="M14.500 18.500h5v-3l4 3.800-4 3.800v-3h-5z" fill="#fff"/></svg><svg class="abs" style="left:556px;top:92px" width="24" height="24" viewBox="0 0 24 24"><path d="M1.5 9.5l5-5h15v10h-15z" fill="#f4f4f4" stroke="#b9b9b9" stroke-width="1"/><text x="7" y="11.9" font-family="Liberation Sans,sans-serif" font-weight="bold" font-size="8.500" fill="#9a9a9a">abc</text><rect x="13.500" y="13.500" width="10.500" height="10.500" rx="2" fill="#a9a9a9"/><path d="M16 20a3 3 0 1 0 1-3.500" fill="none" stroke="#fff" stroke-width="1.500"/><path d="M15 15.500l2.500 1.300-1.700 2z" fill="#fff"/></svg><svg class="abs" style="left:591px;top:92px" width="24" height="24" viewBox="0 0 24 24"><path d="M1.5 9.5l5-5h15v10h-15z" fill="#f4f4f4" stroke="#b9b9b9" stroke-width="1"/><text x="7" y="11.9" font-family="Liberation Sans,sans-serif" font-weight="bold" font-size="8.500" fill="#9a9a9a">abc</text><rect x="13.500" y="13.500" width="10.500" height="10.500" fill="#c4c4c4"/><path d="M15.500 22.500l6-6" stroke="#fff" stroke-width="2.500"/></svg><svg class="abs" style="left:639.7px;top:92px" width="24" height="24" viewBox="0 0 24 24"><circle cx="12" cy="12" r="10.800" fill="#c4e6a0" stroke="#3fa34a" stroke-width="2"/><path d="M3.500 10c1-5 6-8.500 11-7.500 1.500 2.500 5 3.500 4 5.500-3-1-4.500 0-6-2-3-1-6 1-6.500 4z" fill="#1f8f3a"/><path d="M16 4.500l1.500 3M15 6.500h4" stroke="#eaffd0" stroke-width="1"/></svg><svg class="abs" style="left:675.5px;top:92px" width="24" height="24" viewBox="0 0 24 24"><text x="12" y="10.500" text-anchor="middle" font-family="Liberation Sans,sans-serif" font-weight="bold" font-size="9" fill="#111">OGR</text><path d="M3.500 16.500l8.500-3 8.500 3v3l-8.500 3.500-8.500-3.500z" fill="#8a8a8a"/><path d="M3.500 13.500l8.500-3 8.500 3v3l-8.500 3.500-8.500-3.500z" fill="#2f8ad8"/><path d="M10 11.500h4v3h2.500l-4.500 3.500-4.500-3.500h2.500z" fill="#fff"/></svg><svg class="abs" style="left:710px;top:92px" width="24" height="24" viewBox="0 0 24 24"><rect x="0" y="0" width="24" height="24" fill="#c8c8fb"/><path d="M1.500 11.500l12.500-9 9 7.500-13 11.500z" fill="#2a3540" stroke="#1a222b" stroke-width=".6"/><path d="M8 12l8-2" stroke="#55606c" stroke-width=".7"/></svg><svg class="abs" style="left:745px;top:92px" width="24" height="24" viewBox="0 0 24 24"><defs><radialGradient id="gga1" cx=".5" cy=".5" r=".6"><stop offset="0" stop-color="#eee"/><stop offset=".55" stop-color="#9a9a9a"/><stop offset="1" stop-color="#555"/></radialGradient></defs><circle cx="11.500" cy="11" r="10.500" fill="url(#gga1)"/><ellipse cx="11.500" cy="11" rx="3.200" ry="10.500" fill="#2a6fd0" opacity=".85"/><rect x="1" y="9" width="21" height="4" fill="#3f86e0" opacity=".85"/><ellipse cx="11.5" cy="11" rx="4.725" ry="10.5" fill="none" stroke="#3f7fd6" stroke-width="1.1"/><path d="M1 11h21 M2.575 5.75h17.85 M2.575 16.25h17.85 M11.5 0.5v21" fill="none" stroke="#3f7fd6" stroke-width="1.1"/><circle cx="11.500" cy="11" r="10.500" fill="none" stroke="#3f7fd6" stroke-width="1.200"/><rect x="14.5" y="15" width="9" height="9" rx="2" fill="#4d8a3f"/><path d="M16.5 19.5h5 M19 17v5" stroke="#fff" stroke-width="2" fill="none"/><path d="M21 22.500h4l-2 2z" fill="#000"/></svg><svg class="abs" style="left:780px;top:92px" width="24" height="24" viewBox="0 0 24 24"><defs><radialGradient id="ggb2" cx=".5" cy=".5" r=".6"><stop offset="0" stop-color="#eee"/><stop offset=".55" stop-color="#9a9a9a"/><stop offset="1" stop-color="#555"/></radialGradient></defs><circle cx="11.500" cy="11" r="10.500" fill="url(#ggb2)"/><ellipse cx="11.500" cy="11" rx="3.200" ry="10.500" fill="#2a6fd0" opacity=".85"/><rect x="1" y="9" width="21" height="4" fill="#3f86e0" opacity=".85"/><ellipse cx="11.5" cy="11" rx="4.725" ry="10.5" fill="none" stroke="#3f7fd6" stroke-width="1.1"/><path d="M1 11h21 M2.575 5.75h17.85 M2.575 16.25h17.85 M11.5 0.5v21" fill="none" stroke="#3f7fd6" stroke-width="1.1"/><circle cx="11.500" cy="11" r="10.500" fill="none" stroke="#3f7fd6" stroke-width="1.200"/><rect x="14.500" y="15" width="9.500" height="9.500" rx="1.500" fill="#4d8a3f"/><circle cx="18.500" cy="19" r="2.400" fill="none" stroke="#fff" stroke-width="1.400"/><path d="M20.300 20.800l2.500 2.500" stroke="#fff" stroke-width="1.600"/></svg><svg class="abs" style="left:921px;top:92px" width="24" height="24" viewBox="0 0 24 24"><path d="M11.500 1c-5 0-4.700 2.200-4.700 2.200v2.800h5v1h-7.300s-3.500-.4-3.500 5 3 5 3 5h1.800v-2.500s-.1-3 3-3h5s2.800 0 2.800-2.700v-4.800s.5-3-5.100-3z" fill="#3776ab"/><circle cx="9" cy="3.500" r="1" fill="#fff"/><path d="M12.500 23c5 0 4.700-2.200 4.700-2.200v-2.800h-5v-1h7.300s3.500.4 3.500-5-3-5-3-5h-1.800v2.500s.1 3-3 3h-5s-2.800 0-2.800 2.700v4.800s-.5 3 5.100 3z" fill="#ffd43b"/><path d="M17 17.500l6 2.800-6 2.800" fill="none" stroke="#333" stroke-width="1.600"/></svg><svg class="abs" style="left:956px;top:92px" width="24" height="24" viewBox="0 0 24 24"><defs><radialGradient id="ge" cx=".4" cy=".35" r=".7"><stop offset="0" stop-color="#6aa6ee"/><stop offset="1" stop-color="#1d4fa0"/></radialGradient></defs><circle cx="12" cy="12" r="10.300" fill="url(#ge)" stroke="#1b3f80" stroke-width=".8"/><path d="M6 5c3-2 5-1 6 0s-1 3 1 4 3 1 2 3-3 2-3 4-1 4-2 4-2-3-2-5-3-2-3-4 0-4 1-6z" fill="#8db33a"/><path d="M15 5c2 0 4 2 5 4s0 5-1 6-2-1-2-3-3-2-3-4 0-3 1-3z" fill="#8db33a"/></svg><svg class="abs" style="left:989.5px;top:92px" width="24" height="24" viewBox="0 0 24 24"><path d="M10 2c5-2 12 0 12 5s-3 9-7 13-12 4-13 0 4-6 5-10 0-7 3-8z" fill="#c8dc3c" stroke="#222" stroke-width="1.500"/><path d="M12 6c3-1 7 0 7 3s-3 6-6 8-7 2-7 0 3-3 4-6 0-4 2-5z" fill="#86b8e8" stroke="#222" stroke-width="1"/><circle cx="14" cy="9" r="2.600" fill="#1020c0"/></svg><svg class="abs" style="left:1026.5px;top:92px" width="24" height="24" viewBox="0 0 24 24"><rect x="0" y="0" width="24" height="24" fill="#fff"/><path d="M8 3c-5 3-6 12-2 17 2-6 2-12 2-17z" fill="#c6e070"/><path d="M17 7c6 5 5 13-1 16-5-3-5-11 1-16z" fill="#a6d45a"/><path d="M3 20.500l15-18" stroke="#1e9a2e" stroke-width="1.800"/><path d="M19.500 0.500l-1 6-4.500-3.500z" fill="#1e9a2e"/><path d="M1.500 22l1-4.500 3 2.500z" fill="#135f1c"/></svg><svg class="abs" style="left:1061px;top:92px" width="24" height="24" viewBox="0 0 24 24"><path d="M5 16.500l7-11 7 11" stroke="#2e8bd8" stroke-width="4.500" fill="none" stroke-linejoin="round"/><circle cx="12" cy="6" r="4" fill="#2e8bd8"/><circle cx="4.500" cy="16.500" r="4" fill="#2e8bd8"/><circle cx="19.500" cy="16.500" r="4" fill="#2e8bd8"/></svg><svg class="abs" style="left:1096px;top:92px" width="24" height="24" viewBox="0 0 24 24"><circle cx="10.500" cy="13" r="9.300" fill="none" stroke="#1a1a1a" stroke-width="2"/><ellipse cx="10.500" cy="13" rx="4" ry="9.300" fill="none" stroke="#1a1a1a" stroke-width="1.700"/><path d="M1.500 13h18M3 8.500h15M3 17.500h15" stroke="#1a1a1a" stroke-width="1.700"/><circle cx="18.500" cy="8" r="6.500" fill="#f0f0f0"/><path d="M18.500 1c-2.500 0-4 1.800-4 3.800 0 2.500 4 7.200 4 7.200s4-4.700 4-7.200c0-2-1.500-3.800-4-3.800z" fill="#1a1a1a"/><circle cx="18.500" cy="4.800" r="1.500" fill="#f0f0f0"/></svg><svg class="abs" style="left:1131.5px;top:92px" width="24" height="24" viewBox="0 0 24 24"><rect x="0.4" y="0.4" width="4.800" height="4.800" rx="1" fill="#9ab648"/><rect x="6.4" y="0.4" width="4.800" height="4.800" rx="1" fill="#74b5e8"/><rect x="12.4" y="0.4" width="4.800" height="4.800" rx="1" fill="#f09a5c"/><rect x="18.4" y="0.4" width="4.800" height="4.800" rx="1" fill="#b59af0"/><rect x="0.4" y="6.4" width="4.800" height="4.800" rx="1" fill="#b59af0"/><rect x="6.4" y="6.4" width="4.800" height="4.800" rx="1" fill="#f09a5c"/><rect x="12.4" y="6.4" width="4.800" height="4.800" rx="1" fill="#74b5e8"/><rect x="18.4" y="6.4" width="4.800" height="4.800" rx="1" fill="#9ab648"/><rect x="0.4" y="12.4" width="4.800" height="4.800" rx="1" fill="#9ab648"/><rect x="6.4" y="12.4" width="4.800" height="4.800" rx="1" fill="#74b5e8"/><rect x="12.4" y="12.4" width="4.800" height="4.800" rx="1" fill="#f09a5c"/><rect x="18.4" y="12.4" width="4.800" height="4.800" rx="1" fill="#b59af0"/><rect x="0.4" y="18.4" width="4.800" height="4.800" rx="1" fill="#f09a5c"/><rect x="6.4" y="18.4" width="4.800" height="4.800" rx="1" fill="#b59af0"/><rect x="12.4" y="18.4" width="4.800" height="4.800" rx="1" fill="#9ab648"/><rect x="18.4" y="18.4" width="4.800" height="4.800" rx="1" fill="#74b5e8"/></svg><div class="grip" style="left:6px;top:129px;height:29px"></div><div class="grip" style="left:55px;top:129px;height:29px"></div><div class="grip" style="left:104px;top:129px;height:29px"></div><div class="grip" style="left:535px;top:129px;height:29px"></div><div class="grip" style="left:584px;top:129px;height:29px"></div><div class="grip" style="left:633px;top:129px;height:29px"></div><svg class="abs" style="left:66px;top:131.5px" width="24" height="24" viewBox="0 0 24 24"><rect x="0.500" y="1.500" width="22" height="11" fill="#5b8bc5" stroke="#3d6aa0"/><text x="11.500" y="10" text-anchor="middle" font-family="Liberation Sans,sans-serif" font-weight="bold" font-size="6.500" fill="#3a5f90">GEOM</text><path d="M8 17.500h10" stroke="#000" stroke-width="1.600"/><path d="M13.500 14.500l8.500 3-8.500 3z" fill="none" stroke="#000" stroke-width="1.500"/></svg><svg class="abs" style="left:115px;top:131px" width="24" height="24" viewBox="0 0 24 24"><rect x="7.500" y="12" width="9.500" height="7.500" rx="1" fill="#000"/><path d="M9.500 12v-2a2.750 2.750 0 0 1 5.500 0v2" fill="none" stroke="#000" stroke-width="1.700"/><circle cx="12.250" cy="15.500" r="1.200" fill="#fff"/></svg><div class="abs" style="left:145px;top:128px;width:1px;height:30px;background:#a0a0a0"></div><div class="abs" style="left:239px;top:128px;width:1px;height:30px;background:#a0a0a0"></div><div class="abs" style="left:405px;top:128px;width:1px;height:30px;background:#a0a0a0"></div><div class="abs" style="left:483px;top:128px;width:1px;height:30px;background:#a0a0a0"></div><svg class="abs" style="left:173.5px;top:131px" width="24" height="24" viewBox="0 0 24 24"><rect x="5" y="5" width="14" height="14" fill="#b4b4b4"/><circle cx="11" cy="11" r="2.800" fill="none" stroke="#fff" stroke-width="1.500"/><path d="M13 13l3.500 3.500" stroke="#fff" stroke-width="1.800"/></svg><svg class="abs" style="left:208.5px;top:131px" width="24" height="24" viewBox="0 0 24 24"><rect x="6.500" y="7" width="11.500" height="10" rx="1.500" fill="#444"/><path d="M8.500 9.300h2v2h-2zM11.300 9.300h2v2h-2zM14.100 9.300h2v2h-2zM8.500 12.700h2v2h-2zM11.300 12.700h2v2h-2zM14.100 12.700h2v2h-2z" fill="#f0f0f0"/></svg><svg class="abs" style="left:270.5px;top:131px" width="24" height="24" viewBox="0 0 24 24"><path d="M7.500 5.500h9l3 8h-15z" fill="#555"/><path d="M9 12l2.500-4 2 2.500 1.500-1.500 2 3z" fill="#f0f0f0"/><rect x="4" y="15" width="16" height="2.500" fill="#555"/></svg><svg class="abs" style="left:304.5px;top:131px" width="24" height="24" viewBox="0 0 24 24"><circle cx="12" cy="10" r="5" fill="#c2c2c2"/><path d="M12 3v-1.500M5 10h-1.500M20.500 10h-1.500M7 5l-1-1M17 5l1-1M7 15l-1 1M17 15l1 1" stroke="#c8c8c8" stroke-width="1.500"/><rect x="10.500" y="14" width="3" height="5" fill="#c2c2c2"/><circle cx="12" cy="10" r="1.700" fill="#999"/></svg><svg class="abs" style="left:339.5px;top:131px" width="24" height="24" viewBox="0 0 24 24"><path d="M12 4c-2.800 0-4.500 2-4.500 4.300 0 3 4.500 9.700 4.500 9.700s4.500-6.700 4.500-9.700c0-2.300-1.700-4.300-4.500-4.300z" fill="#b5b5b5"/><circle cx="12" cy="8.300" r="1.600" fill="#d8d8d8"/></svg><svg class="abs" style="left:374.5px;top:131px" width="24" height="24" viewBox="0 0 24 24"><rect x="4" y="10" width="8.500" height="5.500" rx="2.750" fill="none" stroke="#444" stroke-width="1.700"/><rect x="12" y="10" width="8.500" height="5.500" rx="2.750" fill="none" stroke="#444" stroke-width="1.700"/><path d="M9 12.750h6.500" stroke="#444" stroke-width="1.700"/></svg><svg class="abs" style="left:453.5px;top:131px" width="24" height="24" viewBox="0 0 24 24"><path d="M6.500 4.500h7.500l4 4v11.500h-11.500z" fill="#444"/><path d="M14 4.500v4h4" fill="#888"/><path d="M12.200 10.500l3.500 4h-2.200v3h-2.600v-3h-2.200z" fill="#fff"/></svg><span class="abs" style="left:147.5px;top:137px;font:12px Liberation Sans,sans-serif;letter-spacing:-0.961px;line-height:15px;">Find</span><span class="abs" style="left:241px;top:137px;font:12px Liberation Sans,sans-serif;letter-spacing:-1.073px;line-height:15px;">View</span><span class="abs" style="left:407px;top:137px;font:12px Liberation Sans,sans-serif;letter-spacing:-0.002px;line-height:15px;">Interact</span><span class="abs" style="left:493.5px;top:136.5px;font:12px Liberation Sans,sans-serif;letter-spacing:-0.835px;line-height:15px;">More</span><svg class="abs" style="left:546px;top:131px" width="24" height="24" viewBox="0 0 24 24"><rect x="0.500" y="1.500" width="23" height="21" fill="#f6f6f6" stroke="#ddd" stroke-dasharray="1 1.500"/><path d="M3.500 8c1 6 5 7 8 8s5 3 9 2" fill="none" stroke="#333" stroke-width="1.200"/><path d="M1.500 4l4 4M5.500 4l-4 4" stroke="#2040c0" stroke-width="1.200"/><path d="M18.500 15.500l4 4M22.500 15.500l-4 4" stroke="#e06010" stroke-width="1.200"/></svg><svg class="abs" style="left:595px;top:131px" width="24" height="24" viewBox="0 0 24 24"><rect x="1.500" y="2.500" width="14" height="8" fill="#fafafa" stroke="#c8c8c8"/><path d="M14.500 9.500l1 3" stroke="#c04040" stroke-width="1.200"/><path d="M15 14c1-2 3-1.500 3.500 0l1.500 3c.8 2 0 4-2 5h-2c-1-1-2.500-2.500-3-4.500z" fill="#fff" stroke="#aaa" stroke-width="1"/></svg><div class="abs" style="left:639px;top:127px;width:34px;height:33px;background:#dcdcdc;border:1px solid #9c9c9c;border-radius:3px"></div><div class="gripw" style="left:5px;top:168px;width:42px"></div><svg class="abs" style="left:14px;top:179px" width="24" height="24" viewBox="0 0 24 24"><path d="M3 3l6.500 14 6-12 5.500 0" fill="none" stroke="#3f6a9a" stroke-width="1.400"/><circle cx="3" cy="3" r="1.800" fill="#fff" stroke="#3f6a9a"/><circle cx="9.500" cy="17" r="1.800" fill="#fff" stroke="#3f6a9a"/><circle cx="15.500" cy="5" r="1.800" fill="#fff" stroke="#3f6a9a"/><circle cx="21.500" cy="4" r="1.800" fill="#fff" stroke="#3f6a9a"/><rect x="14.5" y="14.5" width="10" height="10" rx="2" fill="#5a9a4a"/><path d="M16.5 19.5h6 M19.5 16.5v6" stroke="#fff" stroke-width="2" fill="none"/></svg><svg class="abs" style="left:14px;top:213px" width="24" height="24" viewBox="0 0 24 24"><rect x="1" y="1" width="6.5" height="6.5" fill="#1f3a5f"/><rect x="7.3" y="1" width="6.5" height="6.5" fill="#6b96c8"/><rect x="13.6" y="1" width="6.5" height="6.5" fill="#1f3a5f"/><rect x="1" y="7.3" width="6.5" height="6.5" fill="#6b96c8"/><rect x="7.3" y="7.3" width="6.5" height="6.5" fill="#1f3a5f"/><rect x="13.6" y="7.3" width="6.5" height="6.5" fill="#8fb0dc"/><rect x="1" y="13.6" width="6.5" height="6.5" fill="#1f3a5f"/><rect x="7.3" y="13.6" width="6.5" height="6.5" fill="#6b96c8"/><rect x="13.6" y="13.6" width="6.5" height="6.5" fill="#7fa4d4"/><rect x="14.5" y="14.5" width="10" height="10" rx="2" fill="#5a9a4a"/><path d="M16.5 19.5h6 M19.5 16.5v6" stroke="#fff" stroke-width="2" fill="none"/></svg><svg class="abs" style="left:14px;top:247px" width="24" height="24" viewBox="0 0 24 24"><path d="M5 2c-4 1-4 6-3 10s2 6 4 5 1-3 2-3 2 1 3 1v4c0 3 4 3 4 0v-5c3 0 5-3 5-7s-3-6-7-6-4 1-8 1z" fill="#5b8bc5" stroke="#2f4f7a" stroke-width="1.200"/><path d="M9 4c-1 3-1 6 0 9" fill="none" stroke="#2f4f7a" stroke-width="1"/><circle cx="14" cy="7" r="1" fill="#1f3a5f"/><rect x="14.5" y="14.5" width="10" height="10" rx="2" fill="#5a9a4a"/><path d="M16.5 19.5h6 M19.5 16.5v6" stroke="#fff" stroke-width="2" fill="none"/></svg><svg class="abs" style="left:14px;top:281px" width="24" height="24" viewBox="0 0 24 24"><path d="M2 23c1-10 8-20 21-22-1 9-8 15-18 17z" fill="#7fa4d4" stroke="#1f3a5f" stroke-width="1.200"/><path d="M2 23c4-9 10-15 19-21" fill="none" stroke="#1f3a5f" stroke-width="1"/><path d="M9 9l2 6M13 6l2 7M17 4l1.500 5" stroke="#dfe9f5" stroke-width="1.200"/><rect x="14.5" y="14.5" width="10" height="10" rx="2" fill="#5a9a4a"/><path d="M16.5 19.5h6 M19.5 16.5v6" stroke="#fff" stroke-width="2" fill="none"/></svg><svg class="abs" style="left:14px;top:315px" width="24" height="24" viewBox="0 0 24 24"><path d="M2 1c10 0 20 6 22 15-6-3-14-2-22 6 5-7 5-14 0-21z" fill="#6b96c8" stroke="#1f3a5f" stroke-width="1.200"/><path d="M9 3c3 5 3 10 1 14M15 6c2 4 2 7 1 10" fill="none" stroke="#1f3a5f" stroke-width="1"/><rect x="14.5" y="14.5" width="10" height="10" rx="2" fill="#5a9a4a"/><path d="M16.5 19.5h6 M19.5 16.5v6" stroke="#fff" stroke-width="2" fill="none"/></svg><svg class="abs" style="left:14px;top:350px" width="24" height="24" viewBox="0 0 24 24"><rect x="2" y="1.500" width="19" height="14" rx="5" fill="#6b96c8" stroke="#1f3a5f" stroke-width="1.800"/><rect x="14.5" y="14.5" width="10" height="10" rx="2" fill="#5a9a4a"/><path d="M16.5 19.5h6 M19.5 16.5v6" stroke="#fff" stroke-width="2" fill="none"/></svg><svg class="abs" style="left:14px;top:384px" width="24" height="24" viewBox="0 0 24 24"><rect x="2" y="1.500" width="19" height="14" rx="5" fill="#6b96c8" stroke="#1f3a5f" stroke-width="1.800"/><path d="M5 4.500h4.500v3.500h-4.500zM14 4.500h4.500v3.500h-4.500zM9.500 8h4.500v3.500h-4.500zM5 11.500h4.500v2.500h-4.500zM14 11.500h4.500v2.500h-4.500z" fill="#1f3a5f"/><rect x="14.5" y="14.5" width="10" height="10" rx="2" fill="#5a9a4a"/><path d="M16.5 19.5h6 M19.5 16.5v6" stroke="#fff" stroke-width="2" fill="none"/></svg><svg class="abs" style="left:14px;top:415px" width="24" height="24" viewBox="0 0 24 24"><circle cx="12" cy="11.500" r="11" fill="#a9c6ea" stroke="#5b8bc5" stroke-width="1"/><path d="M4 7c3-2 5 0 6-1s3-2 5-1 4 1 5 3-2 3-4 3-2 3-4 3-1-3-3-3-3 1-5-1z" fill="#3f6a9a" opacity=".75"/><ellipse cx="12" cy="11.5" rx="4.95" ry="11" fill="none" stroke="#e8f0fa" stroke-width="0.8"/><path d="M1 11.5h22 M2.65 6h18.7 M2.65 17h18.7 M12 0.5v22" fill="none" stroke="#e8f0fa" stroke-width="0.8"/><rect x="14.5" y="14.5" width="10" height="10" rx="2" fill="#5a9a4a"/><path d="M16.5 19.5h6 M19.5 16.5v6" stroke="#fff" stroke-width="2" fill="none"/></svg><svg class="abs" style="left:14px;top:449px" width="24" height="24" viewBox="0 0 24 24"><circle cx="12" cy="11.500" r="11" fill="#1f3a5f" stroke="#14263f" stroke-width="1"/><rect x="1.500" y="8.500" width="21" height="6.500" fill="#7fa4d4"/><ellipse cx="12" cy="11.500" rx="4.500" ry="11" fill="#8fb0dc" opacity=".8"/><ellipse cx="12" cy="11.5" rx="4.95" ry="11" fill="none" stroke="#fff" stroke-width="1"/><path d="M1 11.5h22 M2.65 6h18.7 M2.65 17h18.7 M12 0.5v22" fill="none" stroke="#fff" stroke-width="1"/><rect x="14.5" y="14.5" width="10" height="10" rx="2" fill="#5a9a4a"/><path d="M16.5 19.5h6 M19.5 16.5v6" stroke="#fff" stroke-width="2" fill="none"/></svg><svg class="abs" style="left:14px;top:483px" width="24" height="24" viewBox="0 0 24 24"><circle cx="12" cy="11.500" r="11" fill="#fff" stroke="#5b8bc5" stroke-width="1.200"/><ellipse cx="12" cy="11.5" rx="4.95" ry="11" fill="none" stroke="#7fa4d4" stroke-width="0.9"/><path d="M1 11.5h22 M2.65 6h18.7 M2.65 17h18.7 M12 0.5v22" fill="none" stroke="#7fa4d4" stroke-width="0.9"/><path d="M5.500 6l5 11 4.500-10.500 4 0" fill="none" stroke="#222" stroke-width="1.200"/><circle cx="5.500" cy="6" r="1.300" fill="#fff" stroke="#222"/><circle cx="10.500" cy="17" r="1.300" fill="#fff" stroke="#222"/><circle cx="15" cy="6.500" r="1.300" fill="#fff" stroke="#222"/><circle cx="19" cy="6.500" r="1.300" fill="#fff" stroke="#222"/><rect x="14.5" y="14.5" width="10" height="10" rx="2" fill="#5a9a4a"/><path d="M16.5 19.5h6 M19.5 16.5v6" stroke="#fff" stroke-width="2" fill="none"/></svg><svg class="abs" style="left:14px;top:519.5px" width="24" height="24" viewBox="0 0 24 24"><path d="M9 1.500c4 0 7 3 6 8s-5 8-10 8.500c3-2 5-4 5-6-3 0-5-2-5-5s2-5.500 4-5.500z" fill="#3f6fae"/><rect x="14.5" y="12.5" width="10" height="10" rx="2" fill="#5a9a4a"/><path d="M16.5 17.5h6 M19.5 14.5v6" stroke="#fff" stroke-width="2" fill="none"/></svg><svg class="abs" style="left:7px;top:552px" width="24" height="24" viewBox="0 0 24 24"><path d="M3 3l6.500 14 6-12 5.500 0" fill="none" stroke="#3f6a9a" stroke-width="1.400"/><circle cx="3" cy="3" r="1.800" fill="#fff" stroke="#3f6a9a"/><circle cx="9.500" cy="17" r="1.800" fill="#fff" stroke="#3f6a9a"/><circle cx="15.500" cy="5" r="1.800" fill="#fff" stroke="#3f6a9a"/><circle cx="21.500" cy="4" r="1.800" fill="#fff" stroke="#3f6a9a"/><rect x="10" y="13.5" width="10" height="10" rx="2" fill="#d4a90d"/><path d="M15 15.3v6.4 M12.216 16.9l5.568 3.2 M12.216 20.1l5.568 -3.2" stroke="#fff" stroke-width="1.500" fill="none"/></svg><svg class="abs" style="left:37px;top:561px" width="10" height="6" viewBox="0 0 10 6"><path d="M0 0h10l-5 6z" fill="#000"/></svg><svg class="abs" style="left:14px;top:587px" width="24" height="24" viewBox="0 0 24 24"><rect x="1.500" y="5.500" width="13" height="14" fill="#f4f4f4" stroke="#999"/><rect x="4.500" y="3.500" width="13" height="14" fill="#fafafa" stroke="#999"/><text x="9" y="15.500" font-family="Liberation Sans,sans-serif" font-size="10" fill="#3f6a9a">b</text><rect x="10" y="1" width="14" height="5" fill="#f0e030" stroke="#b0a000" stroke-width=".8"/><rect x="15" y="0" width="3.500" height="7" fill="#fff" stroke="#555" stroke-width=".8"/><rect x="13.5" y="13" width="11" height="11" rx="2" fill="#d4a90d"/><path d="M19 14.8v7.4 M15.781 16.65l6.438 3.7 M15.781 20.35l6.438 -3.7" stroke="#fff" stroke-width="1.500" fill="none"/></svg><svg class="abs" style="left:21.500px;top:624px" width="9" height="10" viewBox="0 0 9 10"><path d="M1.500 1l3 3 3-3M1.500 5.500l3 3 3-3" fill="none" stroke="#000" stroke-width="1.400"/></svg><div class="gripw" style="left:5px;top:643px;width:42px"></div><svg class="abs" style="left:16px;top:653px" width="24" height="24" viewBox="0 0 24 24"><circle cx="9" cy="2.500" r="2" fill="#fff" stroke="#333"/><path d="M9 4.500l-5 12M9 4.500l5 10M5 9.500h8" stroke="#333" stroke-width="1.200" fill="none"/><path d="M4 15c0 3 2 5 4 6" stroke="#333" fill="none"/><rect x="11.500" y="13" width="11.500" height="10.500" rx="1.500" fill="#2d5a72"/><path d="M14 18.200h7M16.500 16l-2.500 2.200 2.500 2.200M19 15.500v5.500" stroke="#fff" stroke-width="1.200" fill="none"/></svg><svg class="abs" style="left:21.500px;top:684.5px" width="9" height="10" viewBox="0 0 9 10"><path d="M1.500 1l3 3 3-3M1.500 5.500l3 3 3-3" fill="none" stroke="#000" stroke-width="1.400"/></svg><div class="gripw" style="left:57px;top:169px;width:76px"></div><div class="gripw" style="left:170px;top:169px;width:78px"></div><span class="abs" style="left:141px;top:166px;font:10.5px Liberation Sans,sans-serif;letter-spacing:-0.883px;line-height:13.5px;">Слои</span><svg class="abs" style="left:251px;top:165px" width="14" height="14" viewBox="0 0 14 14"><rect x=".5" y=".5" width="13" height="13" rx="2.500" fill="#f4f4f4" stroke="#8a8a8a"/><path d="M5.500 3.500h5v4.500h-1.500M3.500 6h5.500v4.500h-5.500z" fill="none" stroke="#000" stroke-width="1.500"/></svg><svg class="abs" style="left:266px;top:165px" width="14" height="14" viewBox="0 0 14 14"><rect x=".5" y=".5" width="13" height="13" rx="2.500" fill="#f4f4f4" stroke="#8a8a8a"/><path d="M3.500 3.500l7 7M10.500 3.500l-7 7" stroke="#000" stroke-width="1.500"/></svg><svg class="abs" style="left:60px;top:190px" width="16" height="16" viewBox="0 0 24 24"><path d="M2 9v14h13M5 6v14h13" fill="none" stroke="#888" stroke-width="1.400"/><path d="M9 17V4a2.500 2.500 0 0 1 5 0v12M11.500 8v9" fill="none" stroke="#3f6a9a" stroke-width="1.500"/><rect x="14" y="15" width="9" height="9" rx="1.500" fill="#5a9a4a"/><circle cx="18.500" cy="19.500" r="2.500" fill="#fff"/></svg><svg class="abs" style="left:87px;top:190px" width="16" height="16" viewBox="0 0 24 24"><path d="M1 12q11-11 22 0-11 10-22 0z" fill="#f4f4f4" stroke="#888" stroke-width="1.200"/><circle cx="12" cy="11.500" r="4.800" fill="#5b8bc5"/><circle cx="12" cy="11.500" r="2" fill="#1f3a5f"/><path d="M2 8q9-7 19-1" fill="none" stroke="#aaa" stroke-width="1.200"/><path d="M18 20h6l-3 3.500z" fill="#000"/></svg><svg class="abs" style="left:114px;top:190px" width="16" height="16" viewBox="0 0 24 24"><path d="M1 3h22l-8.500 9.500v9l-5 2v-11z" fill="#6b96c8" stroke="#4f7fb8" stroke-width="1"/><path d="M1 3h22" stroke="#f0d43a" stroke-width="2.500"/></svg><svg class="abs" style="left:141.5px;top:190px" width="16" height="16" viewBox="0 0 24 24"><path d="M2.500 2v20M2.500 8h5M2.500 17h5" stroke="#888" stroke-width="1.200" fill="none"/><rect x="6" y="5.500" width="4.500" height="4.500" fill="#fff" stroke="#f09000" stroke-width="1.300"/><rect x="6" y="14.500" width="4.500" height="4.500" fill="#fff" stroke="#f09000" stroke-width="1.300"/><path d="M13 1.500h6v11h4.500l-7.500 10-7.500-10h4.500z" fill="#4f86c6" stroke="#2f5f96" stroke-width=".8" transform="translate(1.500 0)"/></svg><svg class="abs" style="left:168.5px;top:190px" width="16" height="16" viewBox="0 0 24 24"><path d="M2.500 2v20M2.500 8h5M2.500 17h5" stroke="#888" stroke-width="1.200" fill="none"/><rect x="6" y="5.500" width="4.500" height="4.500" fill="#fff" stroke="#f09000" stroke-width="1.300"/><rect x="6" y="14.500" width="4.500" height="4.500" fill="#fff" stroke="#f09000" stroke-width="1.300"/><path d="M13 22.500h6v-11h4.500l-7.500-10-7.500 10h4.500z" fill="#4f86c6" stroke="#2f5f96" stroke-width=".8" transform="translate(1.500 0)"/></svg><svg class="abs" style="left:195.5px;top:190px" width="16" height="16" viewBox="0 0 24 24"><rect x="1.500" y="2.500" width="17" height="17" fill="#f4f4f4" stroke="#888" stroke-width="1.500"/><rect x="13.500" y="16" width="9" height="6.500" rx="1.500" fill="#e8304a"/><path d="M15.500 19.200h5" stroke="#fff" stroke-width="1.600"/></svg><div class="tree"></div><div class="abs" style="left:55px;top:239px;width:226px;height:15px;background:#f0f0f0"></div><div class="abs" style="left:64px;top:222px;width:1px;height:356px;background-image:linear-gradient(180deg,#a0a0a0 50%,transparent 50%);background-size:1px 2px"></div><div class="abs" style="left:65px;top:230px;width:10px;height:1px;background-image:linear-gradient(90deg,#a0a0a0 50%,transparent 50%);background-size:2px 1px"></div><div class="abs" style="left:65px;top:246px;width:10px;height:1px;background-image:linear-gradient(90deg,#a0a0a0 50%,transparent 50%);background-size:2px 1px"></div><div class="abs" style="left:65px;top:338px;width:10px;height:1px;background-image:linear-gradient(90deg,#a0a0a0 50%,transparent 50%);background-size:2px 1px"></div><div class="abs" style="left:65px;top:354px;width:10px;height:1px;background-image:linear-gradient(90deg,#a0a0a0 50%,transparent 50%);background-size:2px 1px"></div><div class="abs" style="left:65px;top:370px;width:10px;height:1px;background-image:linear-gradient(90deg,#a0a0a0 50%,transparent 50%);background-size:2px 1px"></div><div class="abs" style="left:65px;top:386px;width:10px;height:1px;background-image:linear-gradient(90deg,#a0a0a0 50%,transparent 50%);background-size:2px 1px"></div><div class="abs" style="left:65px;top:402px;width:10px;height:1px;background-image:linear-gradient(90deg,#a0a0a0 50%,transparent 50%);background-size:2px 1px"></div><div class="abs" style="left:69px;top:262px;width:7px;height:1px;background-image:linear-gradient(90deg,#a0a0a0 50%,transparent 50%);background-size:2px 1px"></div><div class="abs" style="left:69px;top:418px;width:7px;height:1px;background-image:linear-gradient(90deg,#a0a0a0 50%,transparent 50%);background-size:2px 1px"></div><div class="abs" style="left:69px;top:578px;width:7px;height:1px;background-image:linear-gradient(90deg,#a0a0a0 50%,transparent 50%);background-size:2px 1px"></div><div class="abs" style="left:84px;top:270px;width:1px;height:51px;background-image:linear-gradient(180deg,#a0a0a0 50%,transparent 50%);background-size:1px 2px"></div><div class="abs" style="left:84px;top:426px;width:1px;height:136px;background-image:linear-gradient(180deg,#a0a0a0 50%,transparent 50%);background-size:1px 2px"></div><div class="abs" style="left:85px;top:281px;width:9px;height:1px;background-image:linear-gradient(90deg,#a0a0a0 50%,transparent 50%);background-size:2px 1px"></div><div class="abs" style="left:85px;top:300px;width:9px;height:1px;background-image:linear-gradient(90deg,#a0a0a0 50%,transparent 50%);background-size:2px 1px"></div><div class="abs" style="left:85px;top:320px;width:9px;height:1px;background-image:linear-gradient(90deg,#a0a0a0 50%,transparent 50%);background-size:2px 1px"></div><div class="abs" style="left:85px;top:435px;width:9px;height:1px;background-image:linear-gradient(90deg,#a0a0a0 50%,transparent 50%);background-size:2px 1px"></div><div class="abs" style="left:85px;top:453px;width:9px;height:1px;background-image:linear-gradient(90deg,#a0a0a0 50%,transparent 50%);background-size:2px 1px"></div><div class="abs" style="left:85px;top:471px;width:9px;height:1px;background-image:linear-gradient(90deg,#a0a0a0 50%,transparent 50%);background-size:2px 1px"></div><div class="abs" style="left:85px;top:489px;width:9px;height:1px;background-image:linear-gradient(90deg,#a0a0a0 50%,transparent 50%);background-size:2px 1px"></div><div class="abs" style="left:85px;top:507px;width:9px;height:1px;background-image:linear-gradient(90deg,#a0a0a0 50%,transparent 50%);background-size:2px 1px"></div><div class="abs" style="left:85px;top:525px;width:9px;height:1px;background-image:linear-gradient(90deg,#a0a0a0 50%,transparent 50%);background-size:2px 1px"></div><div class="abs" style="left:85px;top:543px;width:9px;height:1px;background-image:linear-gradient(90deg,#a0a0a0 50%,transparent 50%);background-size:2px 1px"></div><div class="abs" style="left:85px;top:561px;width:9px;height:1px;background-image:linear-gradient(90deg,#a0a0a0 50%,transparent 50%);background-size:2px 1px"></div><div class="cb" style="left:77px;top:223.5px"></div><span class="abs" style="left:118px;top:223.5px;font:bold 11px Liberation Sans,sans-serif;letter-spacing:0.567px;line-height:14px;">bryansk_per_nas</span><div class="cb on" style="left:77px;top:239.5px"></div><span class="abs" style="left:118px;top:239.5px;font:bold 11px Liberation Sans,sans-serif;letter-spacing:0.432px;line-height:14px;text-decoration:underline;">Список всех загрязненн...</span><div class="cb" style="left:77px;top:255.5px"></div><span class="abs" style="left:118px;top:255.5px;font:bold 11px Liberation Sans,sans-serif;letter-spacing:0.414px;line-height:14px;">Список населенных пунк...</span><div class="cb on" style="left:97px;top:274.5px"></div><span class="abs" style="left:141px;top:274.5px;font:11px Liberation Sans,sans-serif;letter-spacing:0.023px;line-height:14px;">Зона проживания с льго...</span><div class="cb on" style="left:97px;top:293.5px"></div><span class="abs" style="left:141px;top:293.5px;font:11px Liberation Sans,sans-serif;letter-spacing:-0.056px;line-height:14px;">Зона проживания с прав...</span><div class="cb on" style="left:97px;top:313.5px"></div><span class="abs" style="left:141px;top:313.5px;font:11px Liberation Sans,sans-serif;letter-spacing:-0.055px;line-height:14px;">Зона отселения</span><div class="cb" style="left:77px;top:331.5px"></div><span class="abs" style="left:118px;top:331.5px;font:bold 11px Liberation Sans,sans-serif;letter-spacing:0.469px;line-height:14px;">Значения цезия - 137 с к...</span><div class="cb" style="left:77px;top:347.5px"></div><span class="abs" style="left:118px;top:347.5px;font:bold 11px Liberation Sans,sans-serif;letter-spacing:0.701px;line-height:14px;">Деревни</span><div class="cb" style="left:77px;top:363.5px"></div><span class="abs" style="left:118px;top:363.5px;font:bold 11px Liberation Sans,sans-serif;letter-spacing:0.700px;line-height:14px;">Города</span><div class="cb" style="left:77px;top:379.5px"></div><span class="abs" style="left:118px;top:379.5px;font:bold 11px Liberation Sans,sans-serif;letter-spacing:0.792px;line-height:14px;">Города(крупные)</span><div class="cb" style="left:77px;top:395.5px"></div><span class="abs" style="left:118px;top:395.5px;font:bold 11px Liberation Sans,sans-serif;letter-spacing:-0.058px;line-height:14px;">Изолинии</span><div class="cb on" style="left:77px;top:411.5px"></div><span class="abs" style="left:118px;top:411.5px;font:bold 11px Liberation Sans,sans-serif;letter-spacing:0.461px;line-height:14px;">Административные гран...</span><div class="cb on" style="left:97px;top:428.5px"></div><span class="abs" style="left:139px;top:428.5px;font:11px Liberation Sans,sans-serif;letter-spacing:0.152px;line-height:14px;">государственные</span><div class="cb on" style="left:97px;top:446.5px"></div><span class="abs" style="left:139px;top:446.5px;font:11px Liberation Sans,sans-serif;letter-spacing:0.129px;line-height:14px;">федеральных округов</span><div class="cb on" style="left:97px;top:464.5px"></div><span class="abs" style="left:139px;top:464.5px;font:11px Liberation Sans,sans-serif;letter-spacing:0.042px;line-height:14px;">субъектов федерации</span><div class="cb on" style="left:97px;top:482.5px"></div><span class="abs" style="left:139px;top:482.5px;font:11px Liberation Sans,sans-serif;letter-spacing:-0.104px;line-height:14px;">объединений муниципал...</span><div class="cb on" style="left:97px;top:500.5px"></div><span class="abs" style="left:139px;top:500.5px;font:11px Liberation Sans,sans-serif;letter-spacing:-0.102px;line-height:14px;">муниципальных районов</span><div class="cb on" style="left:97px;top:518.5px"></div><span class="abs" style="left:139px;top:518.5px;font:11px Liberation Sans,sans-serif;letter-spacing:-0.091px;line-height:14px;">муниципальных образов...</span><div class="cb on" style="left:97px;top:536.5px"></div><span class="abs" style="left:139px;top:536.5px;font:11px Liberation Sans,sans-serif;letter-spacing:0.035px;line-height:14px;">административных  рай...</span><div class="cb on" style="left:97px;top:554.5px"></div><span class="abs" style="left:139px;top:554.5px;font:11px Liberation Sans,sans-serif;letter-spacing:0.009px;line-height:14px;">прочие</span><div class="cb on" style="left:77px;top:571.5px"></div><span class="abs" style="left:118px;top:571.5px;font:bold 11px Liberation Sans,sans-serif;letter-spacing:0.503px;line-height:14px;">Плотность загрязнения ...</span><svg class="abs" style="left:59px;top:258px" width="9" height="9" viewBox="0 0 9 9"><rect x=".5" y=".5" width="8" height="8" fill="#fff" stroke="#919191"/><path d="M2.500 4.500h4" stroke="#333" stroke-width="1"/></svg><svg class="abs" style="left:59px;top:414px" width="9" height="9" viewBox="0 0 9 9"><rect x=".5" y=".5" width="8" height="8" fill="#fff" stroke="#919191"/><path d="M2.500 4.500h4" stroke="#333" stroke-width="1"/></svg><svg class="abs" style="left:59px;top:574px" width="9" height="9" viewBox="0 0 9 9"><rect x=".5" y=".5" width="8" height="8" fill="#fff" stroke="#919191"/><path d="M2.500 4.500h4 M4.500 2.500v4" stroke="#333" stroke-width="1"/></svg><svg class="abs" style="left:98px;top:224px" width="12" height="12" viewBox="-6 -6 12 12"><circle r="3" fill="#e3a458" stroke="#777" stroke-width="1"/></svg><svg class="abs" style="left:98px;top:240px" width="12" height="12" viewBox="-6 -6 12 12"><circle r="3" fill="#8e9a98" stroke="#666" stroke-width="1"/></svg><svg class="abs" style="left:93px;top:260px" width="12" height="12" viewBox="-6 -6 12 12"><circle r="1.2" fill="#fff" stroke="#777" stroke-width="0.8"/></svg><svg class="abs" style="left:97px;top:252px" width="12" height="12" viewBox="-6 -6 12 12"><circle r="1.2" fill="#fff" stroke="#777" stroke-width="0.8"/></svg><svg class="abs" style="left:102px;top:249px" width="12" height="12" viewBox="-6 -6 12 12"><circle r="1.2" fill="#fff" stroke="#777" stroke-width="0.8"/></svg><div class="abs" style="left:122px;top:276px;width:9px;height:9px;background:#add8e6;border:1px solid #333"></div><div class="abs" style="left:122px;top:296px;width:9px;height:9px;background:#ffd04a;border:1px solid #333"></div><div class="abs" style="left:122px;top:316px;width:9px;height:9px;background:#e31a1c;border:1px solid #333"></div><svg class="abs" style="left:98px;top:332px" width="12" height="12" viewBox="-6 -6 12 12"><circle r="3" fill="#e858c8" stroke="#888" stroke-width="1"/></svg><svg class="abs" style="left:98px;top:348px" width="12" height="12" viewBox="-6 -6 12 12"><circle r="2" fill="#fff" stroke="#999" stroke-width="1"/></svg><svg class="abs" style="left:98px;top:364px" width="12" height="12" viewBox="-6 -6 12 12"><circle r="3.2" fill="#fff" stroke="#444" stroke-width="1"/></svg><svg class="abs" style="left:98px;top:364px" width="12" height="12" viewBox="-6 -6 12 12"><circle r="0.9" fill="#333" stroke="#333" stroke-width="0.5"/></svg><svg class="abs" style="left:98px;top:380px" width="12" height="12" viewBox="-6 -6 12 12"><circle r="3.2" fill="#fff" stroke="#444" stroke-width="1"/></svg><svg class="abs" style="left:98px;top:380px" width="12" height="12" viewBox="-6 -6 12 12"><circle r="0.9" fill="#333" stroke="#333" stroke-width="0.5"/></svg><div class="abs" style="left:96px;top:402px;width:17px;height:1px;background:#f0a830"></div><svg class="abs" style="left:96px;top:411px" width="17" height="14" viewBox="0 0 17 14"><path d="M1 4q4-4 8-1t7-1l-1 8q-4 3-8 1t-6 1z" fill="#ddd" stroke="#888"/></svg><div class="abs" style="left:116.5px;top:426px;width:18px;height:18px;background:#fff;border:3px solid #f2464e"></div><div class="abs" style="left:116.5px;top:444px;width:18px;height:18px;background:#fff;border:2.5px solid #ffc4f4"></div><div class="abs" style="left:116.5px;top:462px;width:18px;height:18px;background:#fff;border:2.5px solid #fff04a"></div><div class="abs" style="left:116.5px;top:480px;width:18px;height:18px;background:#fff;border:2px solid #3060d0"></div><div class="abs" style="left:116.5px;top:498px;width:18px;height:18px;background:#fff;border:1.5px solid #a040c0"></div><div class="abs" style="left:116.5px;top:516px;width:18px;height:18px;background:#fff;border:1px solid #4fa89a"></div><div class="abs" style="left:116.5px;top:534px;width:18px;height:18px;background:#fff;border:1px solid #8a8a8a"></div><div class="abs" style="left:116.5px;top:552px;width:18px;height:18px;background:#fff;border:1px solid #d8d8d8"></div><svg class="abs" style="left:96px;top:570px" width="17" height="17" viewBox="0 0 3 3" shape-rendering="crispEdges"><rect x="0" y="0" width="1" height="1" fill="#1f3a5f"/><rect x="1" y="0" width="1" height="1" fill="#6b96c8"/><rect x="2" y="0" width="1" height="1" fill="#1f3a5f"/><rect x="0" y="1" width="1" height="1" fill="#8fb0dc"/><rect x="1" y="1" width="1" height="1" fill="#1f3a5f"/><rect x="2" y="1" width="1" height="1" fill="#6b96c8"/><rect x="0" y="2" width="1" height="1" fill="#1f3a5f"/><rect x="1" y="2" width="1" height="1" fill="#7fa4d4"/><rect x="2" y="2" width="1" height="1" fill="#5b8bc5"/></svg><div class="abs" style="left:53px;top:678px;width:229px;height:1px;background:#b8b8b8"></div><div class="abs" style="left:100px;top:678px;width:97px;height:17px;background:linear-gradient(#f6f6f6,#e6e6e6);border:1px solid #b4b4b4;border-top:none;border-radius:0 0 2px 2px"></div><div class="abs" style="left:53px;top:677px;width:48px;height:21px;background:#f0f0f0;border:1px solid #b4b4b4;border-top:none;border-radius:0 0 2px 2px"></div><span class="abs" style="left:64px;top:680px;font:11px Liberation Sans,sans-serif;letter-spacing:-0.687px;line-height:14px;">Слои</span><span class="abs" style="left:112px;top:679px;font:11px Liberation Sans,sans-serif;letter-spacing:0.038px;line-height:14px;">Обозреватель</span><div class="abs" style="left:51px;top:163px;width:1px;height:535px;background:#a8a8a8"></div><div class="abs" style="left:287px;top:163px;width:1079px;height:535px;background:#fff;border:2px solid;border-color:#0b6fcb #3091e0 #3091e0 #0b6fcb"></div><svg class="abs" style="left:289px;top:165px" width="1075" height="531" viewBox="289 165 1075 531" font-family="Liberation Sans,sans-serif"><defs><clipPath id="cl"><polygon points="869.8,179.7 873.6,179.6 877.7,176.2 881.4,177.3 885.7,177.0 888.8,179.4 891.5,182.8 895.8,181.9 898.2,184.4 903.0,186.6 904.5,190.5 904.1,194.9 905.5,199.2 905.6,203.4 905.1,206.4 905.7,211.5 910.3,212.5 912.6,214.6 916.4,214.6 920.1,215.0 923.6,218.7 927.4,218.7 931.2,218.6 934.5,215.6 938.5,215.7 942.9,217.3 946.7,216.7 950.8,215.5 952.9,211.5 957.1,211.6 959.5,209.9 962.7,212.0 967.5,210.6 968.9,214.8 970.6,217.7 973.3,219.9 977.8,220.8 976.5,225.9 980.8,227.1 979.9,231.3 981.9,234.1 982.6,237.5 985.2,239.9 986.4,243.2 990.7,244.8 992.9,247.7 994.8,250.9 993.9,255.9 996.8,258.7 998.9,262.1 1000.8,265.7 1003.0,268.2 1004.5,271.8 1005.8,275.6 1006.6,279.5 1010.9,282.7 1010.5,286.4 1009.6,290.1 1009.3,293.9 1008.5,297.2 1007.1,301.8 1007.9,305.7 1012.7,308.3 1011.4,313.3 1014.2,316.4 1016.8,319.7 1022.0,321.5 1020.7,326.3 1021.8,329.9 1025.4,331.8 1028.9,333.2 1030.0,337.9 1035.2,336.7 1036.4,341.4 1040.0,344.7 1043.3,344.0 1046.7,340.4 1050.0,344.0 1053.3,343.4 1056.7,340.6 1059.5,343.9 1064.2,342.3 1068.2,342.9 1070.9,347.2 1076.9,347.5 1072.7,351.0 1076.0,353.0 1076.6,357.5 1080.7,356.7 1083.6,358.4 1083.8,363.2 1089.2,363.5 1087.7,368.6 1092.2,370.2 1092.0,374.6 1096.8,375.6 1096.3,381.1 1101.4,382.1 1101.3,387.3 1103.3,390.9 1106.8,393.2 1110.9,395.0 1113.5,398.1 1113.8,403.2 1118.6,403.4 1118.6,408.4 1124.0,408.0 1126.8,410.8 1127.9,413.7 1129.5,416.2 1129.2,419.1 1127.0,422.2 1128.4,427.0 1126.2,431.5 1122.4,432.3 1117.7,431.5 1116.5,436.6 1111.6,435.5 1108.8,438.0 1106.7,441.5 1103.9,444.0 1100.4,445.9 1097.2,447.3 1093.5,447.0 1090.3,448.2 1087.1,449.7 1083.0,447.5 1079.1,447.7 1078.0,452.9 1073.0,450.6 1070.1,452.2 1068.7,456.9 1066.3,458.6 1062.9,460.8 1059.4,462.8 1054.5,463.1 1054.1,466.7 1051.3,471.1 1051.8,474.8 1056.5,477.9 1055.8,481.2 1056.9,485.1 1061.1,485.9 1063.2,487.7 1066.2,489.4 1069.4,490.3 1071.3,494.7 1074.3,495.9 1078.8,494.3 1080.0,499.5 1084.9,497.2 1087.6,499.2 1089.0,503.0 1093.8,503.2 1094.4,507.6 1095.7,508.6 1097.8,513.8 1093.3,515.7 1093.9,521.3 1090.3,523.5 1086.7,525.6 1081.5,527.0 1083.5,529.8 1080.4,531.6 1080.0,535.1 1081.2,539.2 1080.5,542.6 1078.7,545.5 1074.9,547.6 1076.3,551.8 1072.3,553.8 1073.3,558.1 1071.8,562.0 1068.2,564.3 1064.3,566.3 1063.5,569.4 1066.1,572.1 1065.0,577.0 1066.5,580.3 1071.1,582.0 1072.6,585.1 1073.6,588.3 1075.4,591.2 1074.1,595.0 1075.9,599.2 1076.5,603.3 1072.9,606.6 1071.7,609.8 1070.9,613.1 1072.7,617.5 1071.3,621.8 1067.4,623.5 1064.0,625.9 1060.3,625.8 1056.0,628.1 1052.3,627.4 1048.4,627.9 1045.2,625.8 1042.2,627.2 1039.2,628.4 1036.0,628.6 1030.8,627.9 1031.1,631.4 1032.4,634.6 1036.0,636.6 1038.3,639.1 1037.8,644.0 1042.4,644.4 1042.6,647.3 1044.4,651.0 1040.9,653.9 1041.6,656.0 1038.9,658.6 1036.8,662.1 1032.7,662.4 1029.6,662.8 1026.1,664.5 1022.3,665.1 1018.9,667.7 1014.6,666.7 1011.3,667.6 1009.5,671.6 1006.4,672.8 1003.5,674.4 1001.0,676.0 996.6,676.6 995.7,680.7 993.8,683.8 988.1,684.6 988.2,688.2 989.2,692.0 985.7,694.8 988.9,699.1 986.0,704.0 982.4,702.9 978.8,703.0 975.2,699.8 971.6,699.9 966.5,702.8 965.1,699.8 963.5,696.9 961.5,694.2 960.0,691.3 958.6,688.9 958.3,684.2 953.5,684.0 951.2,681.3 948.9,677.8 950.7,673.8 949.2,670.6 949.3,666.8 945.4,664.7 943.8,661.7 945.4,657.5 941.8,654.6 942.8,651.0 944.2,647.5 948.7,644.5 947.6,641.3 946.8,638.0 942.6,636.1 940.7,633.8 939.0,629.9 935.9,627.1 936.6,620.9 933.3,619.2 929.4,618.1 926.8,615.7 926.1,610.6 921.0,612.1 919.8,606.9 916.2,605.9 913.7,604.4 910.1,602.0 910.8,597.5 908.0,593.8 903.8,595.1 901.7,591.3 898.4,590.5 894.7,588.0 891.6,592.8 887.8,593.1 883.6,590.7 880.5,593.8 877.0,595.1 872.3,593.3 869.9,597.5 866.7,599.6 863.3,597.4 858.8,598.4 856.9,594.5 853.6,593.2 850.5,590.6 847.1,589.5 843.6,588.4 839.0,591.3 835.4,590.6 832.1,586.1 829.5,590.2 825.1,588.0 822.3,591.5 818.1,590.2 814.6,591.4 811.4,592.4 809.2,596.2 805.3,595.3 802.8,598.4 798.8,597.2 795.4,598.0 792.6,599.9 790.7,603.4 787.5,606.1 784.1,608.5 779.2,609.1 778.9,613.8 774.1,613.5 773.4,617.8 769.9,617.1 766.2,618.0 762.4,618.5 758.8,620.7 754.9,621.4 751.3,618.3 747.6,617.4 743.7,620.2 741.0,617.4 737.9,614.9 733.8,614.0 731.3,610.7 728.0,608.2 722.1,609.1 719.6,606.0 715.8,605.7 713.7,601.5 709.9,601.8 705.7,601.8 701.5,602.1 696.3,598.1 694.1,600.3 691.5,601.8 690.9,604.7 689.5,608.6 693.3,610.8 694.9,613.8 694.8,617.4 692.0,621.8 692.4,626.0 696.2,630.9 693.8,634.3 691.8,638.0 686.8,639.5 686.2,644.3 681.8,646.1 681.4,651.1 676.6,652.6 676.5,657.8 672.0,658.7 669.0,660.2 665.5,660.7 663.5,664.8 660.3,666.2 656.9,666.9 653.6,667.8 649.6,666.6 645.9,667.6 644.0,672.2 639.2,674.6 636.1,673.3 633.3,671.0 630.1,670.1 626.7,668.3 626.5,663.5 623.8,661.2 618.4,661.6 618.2,656.6 614.9,654.3 612.5,650.9 609.0,648.9 604.4,648.0 603.2,643.8 601.7,639.9 596.2,639.2 593.7,635.5 595.6,631.1 593.4,628.4 592.3,625.2 590.9,621.9 589.8,618.4 587.0,615.8 585.4,612.5 583.2,609.6 579.3,607.6 577.7,604.4 575.0,601.7 576.3,597.8 577.8,594.8 575.1,591.0 579.0,588.6 578.3,584.9 576.0,581.4 575.3,577.7 577.8,573.4 576.9,570.4 577.6,567.3 574.1,563.3 576.1,560.5 578.9,556.1 573.8,556.2 574.0,551.0 571.3,550.2 569.1,545.8 573.2,542.3 570.5,537.8 571.3,534.9 571.2,530.6 569.9,527.2 565.2,526.5 562.9,523.2 564.9,518.7 563.7,514.8 561.4,509.7 564.5,507.6 567.8,505.9 572.9,506.9 575.4,504.4 577.5,501.8 578.3,497.8 580.6,496.5 578.7,493.2 579.2,488.8 575.4,487.1 572.7,484.8 570.2,482.3 568.3,479.2 568.0,474.5 562.3,474.6 562.8,470.1 561.2,467.1 557.4,465.4 554.6,463.1 555.7,458.0 550.8,456.8 551.0,451.5 546.2,450.2 545.2,445.6 542.2,443.0 537.6,442.4 535.7,438.3 530.4,437.7 530.8,432.5 528.2,429.5 525.7,427.6 525.8,422.7 530.5,421.3 530.5,416.4 533.1,413.4 535.6,410.1 541.0,408.9 544.1,405.3 544.6,401.9 543.3,397.8 547.1,395.7 545.4,390.6 550.3,390.8 552.4,388.6 552.8,382.8 557.2,386.8 561.1,385.2 564.9,382.5 569.6,384.9 571.8,381.3 574.6,379.5 578.7,380.6 580.6,380.2 585.1,379.2 587.3,382.7 591.9,381.4 595.0,384.0 597.3,386.5 600.4,388.2 600.3,393.1 602.9,395.3 607.2,395.8 609.7,398.3 612.4,400.6 614.7,403.3 616.4,405.7 619.8,406.7 623.1,408.0 626.4,409.2 630.1,409.3 632.8,413.0 636.5,414.2 640.2,415.0 644.0,415.5 648.6,415.7 651.8,414.2 654.7,412.2 656.6,408.1 661.3,409.3 664.7,407.6 667.9,405.7 670.4,403.3 673.2,400.0 677.4,401.3 680.9,400.5 683.8,397.2 686.9,396.3 691.9,396.0 693.2,391.3 698.0,390.9 699.4,386.4 700.8,382.7 704.2,380.7 708.4,379.4 708.6,374.6 711.8,373.6 711.3,368.9 708.5,367.4 710.7,364.8 710.3,362.0 714.0,361.1 717.9,360.7 720.9,356.8 724.7,356.0 729.1,356.7 733.1,356.2 736.6,354.3 740.9,352.2 739.1,348.4 743.8,346.2 743.8,343.5 744.1,338.6 749.0,337.4 750.9,333.9 753.7,331.1 755.8,328.4 756.0,324.0 758.1,321.3 760.8,319.2 765.3,317.6 766.2,313.5 763.5,309.1 766.6,305.6 767.6,302.4 769.5,299.5 767.3,295.1 769.3,292.0 771.2,288.3 775.8,286.9 778.8,284.1 781.2,281.2 781.7,276.7 785.7,275.7 785.9,270.9 788.7,268.7 793.1,268.2 794.3,263.4 799.6,263.6 803.3,261.8 803.4,256.7 808.0,255.1 809.5,252.0 810.6,248.6 810.2,244.7 811.0,241.1 812.7,237.9 814.3,234.5 816.0,231.7 817.4,228.6 822.3,227.9 821.0,223.7 821.9,220.3 821.5,216.6 826.2,213.8 824.0,209.1 829.0,208.2 830.7,204.6 833.0,201.9 834.9,198.3 838.0,196.7 842.4,197.5 845.4,195.7 848.9,193.7 850.9,190.5 851.8,186.2 854.6,183.0 857.2,180.8 860.1,179.4 864.4,181.1 867.5,180.0"/></clipPath><filter id="b2" x="-20%" y="-20%" width="140%" height="140%"><feGaussianBlur stdDeviation="1.2"/></filter><filter id="b2_5" x="-20%" y="-20%" width="140%" height="140%"><feGaussianBlur stdDeviation="1.5"/></filter><filter id="b3" x="-20%" y="-20%" width="140%" height="140%"><feGaussianBlur stdDeviation="1.8"/></filter><filter id="b3_5" x="-20%" y="-20%" width="140%" height="140%"><feGaussianBlur stdDeviation="2.1"/></filter><filter id="b4" x="-20%" y="-20%" width="140%" height="140%"><feGaussianBlur stdDeviation="2.4"/></filter><circle id="c" r="3.400" fill="#dba55f" stroke="#000" stroke-width="1" opacity=".92"/></defs><g clip-path="url(#cl)"><rect x="500" y="165" width="700" height="540" fill="#c9a27a"/><polygon points="640.4,394.3 646.8,401.7 655.6,404.9 663.4,409.8 671.5,414.3 678.7,418.5 683.2,425.9 684.1,434.7 688.4,442.2 690.0,451.5 695.4,459.5 696.7,468.8 700.6,477.3 704.4,485.6 712.6,492.1 718.1,501.2 726.2,506.8 733.8,512.0 742.9,509.2 751.3,510.1 759.1,513.3 767.1,517.7 775.6,514.8 783.9,514.2 791.7,515.6 798.7,512.7 806.9,514.8 814.0,512.4 822.2,513.8 830.4,514.7 838.9,511.3 846.8,514.7 853.0,518.1 858.0,524.0 866.8,524.9 875.6,525.3 884.4,520.4 893.2,525.2 901.4,524.1 908.1,529.1 917.7,528.2 923.2,533.6 925.9,524.5 929.5,515.8 937.9,509.4 940.9,500.3 943.3,491.2 945.1,483.0 954.3,481.8 963.2,478.7 972.2,476.6 981.4,475.6 991.0,478.5 999.9,475.1 1008.4,473.5 1017.1,472.7 1025.2,468.9 1034.0,468.8 1042.6,467.6 1051.6,468.7 1060.0,465.6 1068.9,465.4 1077.6,469.7 1086.7,467.4 1095.5,469.9 1104.4,468.9 1113.5,465.9 1122.2,468.6 1131.1,469.2 1139.2,470.0 1140.9,478.9 1138.8,487.9 1139.8,496.8 1141.7,505.7 1137.8,514.6 1142.5,523.6 1138.1,532.5 1142.0,541.4 1143.0,550.4 1141.8,559.3 1138.4,568.2 1137.1,577.1 1143.0,586.1 1140.1,595.0 1140.1,603.9 1138.2,612.9 1141.9,621.8 1140.0,630.7 1140.9,639.6 1138.0,648.6 1141.4,657.5 1137.3,666.4 1141.3,675.4 1141.7,684.3 1138.8,693.2 1140.0,702.1 1142.3,711.1 1140.0,719.6 1131.0,722.5 1122.0,718.3 1113.0,718.8 1103.9,718.3 1094.9,719.2 1085.9,720.9 1076.9,720.6 1067.9,720.6 1058.9,717.7 1049.9,722.5 1040.8,717.7 1031.8,722.8 1022.8,721.8 1013.8,721.4 1004.8,717.6 995.8,720.0 986.8,720.7 977.7,717.7 968.7,721.6 959.7,720.2 950.7,719.8 941.7,718.5 932.7,718.5 923.7,719.1 914.6,720.9 905.6,721.0 896.6,722.1 887.6,717.9 878.6,719.0 869.6,718.5 860.6,722.0 851.5,720.4 842.5,718.4 833.5,719.5 824.5,722.2 815.5,720.2 806.5,717.7 797.5,721.6 788.5,721.9 779.4,721.2 770.4,718.8 761.4,717.9 752.4,722.1 743.4,722.1 734.4,721.5 725.4,721.0 716.3,719.9 707.3,722.0 698.3,721.0 689.3,721.9 680.3,717.1 671.3,718.6 662.3,722.4 653.2,717.2 644.2,722.4 635.2,720.7 626.2,717.1 617.2,718.2 608.2,718.6 599.2,720.4 590.1,721.8 581.1,719.2 572.1,722.4 563.1,721.8 554.1,720.7 545.1,722.8 536.1,720.6 527.0,718.3 518.0,718.8 509.0,720.0 500.4,720.0 499.8,711.0 497.9,701.9 500.6,692.9 499.4,683.9 501.4,674.9 502.4,665.8 499.6,656.8 500.4,647.8 501.5,638.8 499.5,629.7 498.4,620.7 501.3,611.7 502.3,602.6 501.6,593.6 501.2,584.6 502.1,575.6 501.1,566.5 500.8,557.5 499.7,548.5 498.9,539.4 500.8,530.4 497.6,521.4 499.5,512.4 501.7,503.3 501.3,494.3 500.8,485.3 498.5,476.2 499.5,467.2 499.7,458.2 500.7,449.2 499.5,440.1 501.1,431.1 502.6,422.1 498.1,413.1 500.9,404.0 500.0,395.8 508.8,394.3 517.5,394.9 526.2,397.8 535.0,392.2 543.8,395.3 552.5,393.0 561.2,396.7 570.0,397.6 578.8,395.1 587.5,392.6 596.2,395.4 605.0,395.2 613.8,396.3 622.5,395.1 631.2,395.8" fill="#bf6e78" filter="url(#b2)"/><polygon points="599.9,396.0 608.5,396.0 617.1,396.2 625.2,400.3 634.2,396.8 642.4,400.5 651.1,399.6 659.3,402.7 669.0,401.4 670.2,411.2 678.1,416.9 683.3,424.6 686.0,432.9 687.9,441.5 691.4,449.6 692.5,457.9 694.5,465.9 694.8,474.3 698.9,481.8 700.6,489.7 705.2,496.8 706.2,505.6 708.9,513.7 714.9,520.1 722.5,526.4 726.1,536.2 734.2,542.1 740.5,549.3 748.7,553.1 754.1,561.4 761.5,566.5 769.7,570.2 775.2,577.4 779.7,585.2 786.4,591.6 788.6,600.0 790.9,610.0 789.2,620.0 788.1,630.0 789.7,639.1 781.4,642.9 773.1,646.6 764.0,647.9 756.1,653.1 746.2,651.7 738.4,657.2 728.9,657.1 721.3,663.1 712.5,665.3 704.1,668.7 695.1,670.4 686.9,674.5 678.6,678.3 668.7,676.9 660.8,682.2 652.3,685.1 643.5,687.5 634.6,689.2 626.0,692.2 617.0,693.8 608.3,696.4 600.0,700.4 590.9,697.4 581.8,697.9 572.7,702.7 563.6,698.0 554.5,697.6 545.5,698.3 536.4,702.2 527.3,698.0 518.2,699.2 509.1,702.9 498.5,700.0 502.7,691.1 500.9,682.2 498.5,673.3 497.6,664.4 497.9,655.6 498.4,646.7 501.7,637.8 499.1,628.9 497.9,620.0 502.4,611.1 501.8,602.2 498.0,593.3 502.3,584.4 500.7,575.6 501.7,566.7 501.0,557.8 502.4,548.9 501.7,540.0 502.0,531.1 498.2,522.2 501.2,513.3 500.2,504.4 501.5,495.6 499.6,486.7 502.3,477.8 500.3,468.9 498.6,460.0 498.4,451.1 497.8,442.2 500.0,433.3 497.4,424.4 499.8,415.6 497.9,406.7 499.9,397.8 500.0,388.9 500.0,380.1 508.8,383.5 518.6,379.8 527.0,386.1 536.4,385.3 545.4,387.2 554.4,389.2 563.3,391.6 572.8,390.2 581.9,391.8 590.5,396.4" fill="#bb4062" filter="url(#b3)"/><polygon points="500.2,358.7 509.0,361.9 518.1,363.0 527.7,360.5 536.4,365.1 545.4,366.6 554.4,369.2 563.9,366.8 572.5,371.8 582.0,370.0 590.1,376.6 596.5,385.2 606.7,388.8 614.3,396.5 623.6,401.3 632.9,405.5 641.8,407.2 649.9,403.2 658.5,402.8 666.9,402.0 665.9,411.6 669.7,420.9 668.9,430.5 669.2,440.0 667.2,450.0 664.1,459.7 665.7,470.2 662.0,479.8 662.1,488.8 660.0,497.5 659.9,506.5 657.0,515.0 655.5,525.4 658.7,535.1 660.2,544.7 659.2,554.1 656.5,562.8 653.9,571.6 649.8,579.9 645.7,589.7 642.3,599.5 641.0,608.2 633.2,612.6 629.5,618.9 619.9,624.3 609.7,630.3 599.7,627.7 589.1,625.2 581.4,620.0 576.5,611.0 567.9,607.0 560.1,601.5 551.8,598.6 543.3,596.2 534.4,596.2 525.9,594.5 517.3,592.7 508.8,590.6 500.3,590.0 501.1,581.2 498.3,572.3 501.0,563.5 499.7,554.6 501.6,545.8 497.6,536.9 498.1,528.1 497.2,519.2 501.6,510.4 502.5,501.5 500.9,492.7 499.2,483.8 501.9,475.0 501.7,466.2 500.4,457.3 498.5,448.5 498.8,439.6 499.5,430.8 498.9,421.9 499.6,413.1 500.9,404.2 502.6,395.4 497.3,386.5 500.4,377.7 497.2,368.8" fill="#b3163c" filter="url(#b2_5)"/><polygon points="560.1,390.9 569.8,394.9 580.0,394.4 589.8,397.5 600.1,395.9 606.6,402.7 608.6,411.7 611.8,419.9 605.6,427.2 601.4,435.4 600.0,445.1 590.1,448.0 579.0,450.7 576.0,442.8 569.3,437.7 565.0,430.2 561.6,421.0 560.1,411.5 562.6,401.3" fill="#9c0f2e" filter="url(#b2)"/><polygon points="619.8,428.9 629.1,431.5 637.2,425.1 646.6,428.4 656.1,424.8 659.3,433.6 656.5,443.2 660.7,451.8 659.2,461.2 662.9,470.2 662.6,479.0 656.4,486.3 654.8,494.7 651.9,502.8 650.7,511.3 650.8,521.0 643.3,524.4 636.7,529.0 631.4,535.2 625.9,539.1 617.3,534.4 613.6,524.7 605.6,519.9 600.8,510.4 599.6,500.4 602.1,489.9 600.9,480.4 601.0,470.7 605.6,462.9 611.3,455.5 611.5,445.9 618.7,439.1" fill="#9c0f2e" filter="url(#b2_5)"/><polygon points="585.0,545.0 595.3,543.6 605.1,546.7 614.9,549.2 625.2,549.9 627.8,559.2 634.5,566.7 634.6,577.0 640.3,585.2 634.8,591.3 630.4,598.1 626.9,605.5 622.0,612.3 614.1,609.6 606.2,608.0 598.7,609.6 593.7,601.5 587.6,593.9 582.7,585.0 587.1,575.1 585.7,565.0 586.7,555.0" fill="#9c0f2e" filter="url(#b2_5)"/><polygon points="902.8,554.5 910.6,552.2 918.9,550.9 924.3,545.7 932.1,552.9 940.6,560.1 939.2,570.1 935.2,579.7 937.0,590.1 934.9,599.5 924.9,601.9 916.0,604.3 911.5,597.2 904.0,592.4 898.5,584.9 899.6,574.9 901.5,565.0" fill="#c9a27a" filter="url(#b2_5)"/><polygon points="962.1,560.3 970.7,559.8 979.0,558.3 986.1,551.3 994.0,552.2 995.2,561.9 996.8,571.5 1000.6,580.6 1003.4,590.5 995.7,593.4 989.8,598.6 985.2,604.5 976.1,597.8 964.5,595.0 961.8,586.5 963.8,577.5 964.5,568.6" fill="#c9a27a" filter="url(#b2_5)"/><polygon points="984.8,599.1 994.2,598.9 1003.2,597.5 1010.8,591.0 1019.7,590.1 1021.0,598.3 1024.2,605.9 1027.7,613.6 1029.4,621.6 1029.3,629.7 1024.7,637.3 1022.7,646.1 1021.0,655.0 1015.1,661.1 1005.1,659.7 994.9,662.3 985.2,659.9 984.8,651.7 982.2,644.3 977.6,637.5 974.9,630.0 978.0,622.7 978.2,614.4 980.7,606.9" fill="#c9a27a" filter="url(#b3)"/><polygon points="940.0,639.0 948.8,641.2 957.5,639.2 966.2,640.4 975.3,639.9 976.9,648.0 981.0,655.5 983.7,663.3 980.1,672.7 985.2,680.3 980.2,686.8 972.0,689.4 965.2,693.7 959.2,700.6 955.5,693.0 949.3,687.2 945.1,680.0 940.9,670.4 939.7,660.3 944.2,649.6" fill="#c9a27a" filter="url(#b2_5)"/><polygon points="1040.1,501.1 1050.0,499.3 1060.0,499.1 1070.7,497.8 1071.1,505.9 1075.8,512.5 1077.0,519.1 1070.8,525.6 1064.6,532.1 1060.6,538.8 1049.3,536.3 1038.6,530.0 1038.2,520.0 1038.1,510.0" fill="#c9a27a" filter="url(#b2_5)"/><polygon points="830.2,518.8 838.5,519.0 845.9,523.5 853.6,527.0 862.0,526.2 868.7,528.4 870.2,536.7 877.5,543.2 876.9,552.2 880.1,560.3 873.2,564.7 864.1,562.4 858.0,568.9 850.1,569.9 843.9,562.7 838.6,554.7 830.5,550.0 829.4,540.0 829.7,530.0" fill="#c9a27a" filter="url(#b3)"/><polygon points="835.0,174.0 844.4,177.8 853.8,178.0 863.1,173.3 872.5,172.2 881.9,173.5 891.2,174.1 900.6,177.4 908.8,175.1 909.0,184.2 914.7,192.7 911.3,202.2 912.8,211.1 914.6,219.9 910.2,227.7 913.6,237.4 911.1,245.7 905.5,253.2 904.8,260.7 895.9,262.1 887.2,265.6 877.9,265.1 868.8,265.3 859.3,268.9 852.0,262.8 844.4,257.1 837.3,250.8 829.9,243.1 821.2,236.5 814.3,224.7 816.3,215.9 822.7,208.7 822.3,198.9 829.5,192.2 830.0,182.7" fill="#ba6e76" filter="url(#b3)"/><polygon points="914.0,203.6 922.7,207.6 931.4,203.3 940.1,207.6 948.9,207.2 957.6,207.3 966.3,202.8 975.1,204.9 982.1,211.9 982.8,222.6 988.3,230.5 994.3,237.9 1000.2,245.5 1005.8,253.2 1008.3,262.9 1015.1,270.0 1014.7,278.6 1018.0,287.0 1018.0,295.6 1019.4,304.2 1015.9,312.9 1017.3,321.4 1018.3,331.0 1008.3,330.9 999.7,336.6 991.4,332.1 982.4,329.2 974.6,323.5 968.8,315.0 959.6,310.2 953.2,300.9 950.0,290.0 944.1,283.1 941.0,274.3 933.1,268.6 932.4,258.1 923.7,252.3 925.0,242.4 921.3,233.7 917.2,225.2 915.9,215.0" fill="#ba6e76" filter="url(#b2_5)"/><polygon points="962.3,221.4 970.4,225.1 978.2,229.1 985.4,234.8 987.0,244.5 991.6,252.5 996.6,260.3 1005.5,265.8 1008.6,274.9 1006.4,284.2 1012.2,292.8 1009.0,302.1 1012.4,310.9 1011.6,318.6 1004.3,325.3 995.8,324.6 990.4,317.9 985.6,311.0 981.1,303.8 981.0,294.7 977.7,286.2 973.2,278.0 972.1,268.9 971.2,259.7 966.3,250.8 966.4,240.9 961.9,231.9" fill="#b0405e" filter="url(#b3)"/><polygon points="821.9,377.0 831.8,378.4 841.4,376.9 850.6,372.6 860.1,370.7 870.7,371.0 876.6,377.1 884.0,381.2 891.7,384.7 899.0,388.9 904.7,395.0 902.8,403.9 901.1,412.8 901.5,421.9 902.8,431.2 900.9,441.0 893.0,444.6 888.4,451.6 881.1,455.8 877.8,464.4 870.1,467.1 859.9,467.5 850.3,463.0 840.3,461.3 830.0,462.0 823.7,454.7 825.1,444.2 819.1,436.9 817.7,427.5 811.3,419.8 812.2,411.2 817.9,403.7 817.2,394.6 818.0,385.9" fill="#cbb987" filter="url(#b3)"/><polygon points="690.0,374.6 698.6,375.1 707.0,371.2 715.7,373.8 724.3,373.0 732.9,373.0 741.3,370.2 749.5,372.4 753.4,380.7 758.2,388.5 765.2,395.5 756.9,397.6 750.3,403.1 741.8,404.9 734.6,411.3 726.9,405.3 718.2,402.4 708.7,402.5 700.0,400.0 696.8,391.6 693.5,383.3" fill="#cbb987" filter="url(#b3)"/><polygon points="879.9,343.6 888.6,347.0 896.5,341.7 904.8,340.6 913.1,339.3 921.5,339.3 929.1,340.4 936.3,346.2 939.7,353.9 940.2,363.0 945.6,370.6 940.8,378.3 932.1,382.1 925.9,388.4 920.0,394.9 912.9,391.3 904.2,392.3 898.2,385.4 890.6,384.8 885.4,377.7 883.8,369.5 884.0,361.0 882.0,353.0" fill="#cbb987" filter="url(#b3)"/><polygon points="839.9,299.3 849.7,296.5 859.9,296.9 869.7,294.1 879.7,295.1 880.4,304.3 887.0,311.9 887.1,321.4 889.7,329.3 883.4,335.6 874.1,335.8 866.3,338.9 859.8,345.3 852.4,340.4 846.5,333.3 838.1,330.0 838.0,320.0 842.0,310.2" fill="#cbb987" filter="url(#b3)"/><polyline points="670.2,402.7 678.5,398.7 687.1,396.5 693.2,391.4 699.9,386.9 708.0,381.6 713.1,372.5 708.5,367.4 710.2,361.8 717.9,360.7 724.6,355.9 732.5,354.6 741.1,352.3 743.3,343.2 746.5,335.5 752.4,329.9 758.7,324.2 763.7,317.5 764.7,311.3 764.0,304.6 767.2,298.6 770.0,292.5 773.1,284.8 779.4,279.4 787.9,275.4 792.9,268.0 800.1,264.2 805.3,257.6 809.4,251.9 811.9,245.4 815.8,235.5 816.8,228.2 822.8,224.1 822.6,216.8 825.3,210.3 832.2,200.5 840.1,196.9 848.3,193.2 855.1,184.3 862.0,179.6 870.0,177.6 877.5,177.9 884.6,180.1 892.4,180.5 899.4,183.8 901.4,189.9 905.9,195.1 904.0,201.2 903.2,208.3 908.2,211.8 912.5,215.4 920.0,216.3 927.5,217.2 934.8,216.6 942.1,213.9 949.6,213.2 960.0,209.0" fill="none" stroke="#b96d75" stroke-width="30" stroke-linejoin="round" filter="url(#b2)"/><polyline points="1025.2,332.2 1032.7,337.2 1040.0,342.1 1050.0,341.5 1060.3,341.7 1067.4,345.2 1074.3,347.5 1074.9,354.7 1082.4,359.6 1087.2,364.7 1092.3,370.1 1094.7,377.3 1100.1,383.2 1104.9,389.6 1109.6,396.0 1115.0,402.0 1120.5,406.5 1125.4,411.7 1130.5,419.7 1125.0,429.5 1119.0,433.7 1112.4,436.9 1107.3,442.4 1100.1,444.8 1093.0,444.8 1086.9,448.8 1079.9,449.4 1072.5,453.3 1065.3,457.3 1057.5,460.5 1052.5,467.0" fill="none" stroke="#b96d75" stroke-width="15" stroke-linejoin="round" filter="url(#b2)"/><polyline points="639.8,672.9 634.2,669.0 627.0,668.0 621.3,663.7 618.0,656.9 611.1,652.7 604.3,648.0 599.6,641.5 594.9,635.0 593.4,628.4 589.3,622.9 585.3,616.8 583.3,609.5 579.6,603.3 574.3,597.4 575.6,591.1 577.2,585.0 576.9,577.4 575.2,570.0 577.6,564.0 578.0,557.0 570.0,550.0 572.2,542.1 572.9,533.7 569.1,527.9 564.0,523.0 564.1,516.8 562.2,511.4 572.6,506.6 575.7,500.0 582.2,495.7 575.8,486.7 571.0,479.0 564.1,473.4 559.2,466.3 555.2,458.4 549.7,452.6 544.4,446.6 539.0,440.6 532.6,436.1 525.2,427.1 529.4,420.5 534.4,414.4 538.1,409.4 542.4,404.7 543.7,397.9 546.8,391.9 553.0,385.1 561.0,383.8 568.9,383.2 575.7,382.1 581.2,379.1 587.8,381.7 594.1,384.9 600.9,390.1 606.3,396.7 612.0,401.0 616.0,407.1 624.4,409.8 633.1,411.2 640.2,414.9 647.8,414.2 654.9,412.5 660.9,408.6 670.0,402.0" fill="none" stroke="#c4506c" stroke-width="13" stroke-linejoin="round" filter="url(#b2)"/></g><g fill="none" stroke-linejoin="round" clip-path="url(#cl)"><polyline points="843.5,242.9 844.0,247.8 842.8,252.4 841.5,256.9 840.2,263.5 845.9,265.5 850.9,269.0 854.0,272.7 856.2,277.1 859.5,280.7 863.0,284.0 867.5,277.7 864.5,273.2 862.0,268.5 859.9,263.5 856.9,259.1 854.2,253.6 852.1,247.9 847.8,245.8 844.0,243.0" stroke="#45b4a2" stroke-width="1.700"/><polyline points="976.3,286.4 979.8,283.3 983.0,280.0 986.9,281.9 989.9,285.1 993.1,287.9 996.2,292.8 999.5,297.4 1002.6,301.9 1000.4,306.7 1000.0,312.0 996.2,309.1 992.7,305.8 989.5,302.1 984.8,300.1 982.1,295.3 979.6,290.3 976.0,286.0" stroke="#45b4a2" stroke-width="1.700"/><polyline points="925.1,304.6 930.4,305.8 935.4,308.5 941.0,309.0 946.0,309.0 951.1,308.5 955.9,310.7 961.0,310.7 966.3,310.8 969.1,307.0 969.8,302.8 974.3,304.3 978.4,306.5" stroke="#45b4a2" stroke-width="1.700"/><polyline points="924.9,343.6 930.0,342.4 935.2,341.8 940.3,340.6 945.1,339.3 947.9,334.9 951.8,331.4 954.9,327.3 957.7,322.9 961.5,319.5 963.5,314.9 966.0,310.6" stroke="#45b4a2" stroke-width="1.700"/><polyline points="965.6,343.3 968.9,339.3 972.8,335.7 974.9,330.9 978.2,327.2 983.4,330.4 986.8,335.4 985.8,340.9 986.4,346.5 986.6,352.2 991.8,351.5 996.9,352.5 1002.0,352.9 1007.2,352.4 1012.3,353.6 1017.5,353.6 1022.6,354.9 1027.9,354.0 1030.7,348.7 1034.0,343.6" stroke="#45b4a2" stroke-width="1.700"/><polyline points="863.3,343.3 867.7,346.4 870.9,351.0 875.3,353.5 880.8,352.4 886.2,351.9 891.8,352.0 893.9,355.8 897.1,358.8 900.1,362.4 904.7,359.7 909.7,358.2 915.0,358.0" stroke="#45b4a2" stroke-width="1.700"/><polyline points="837.8,323.2 841.9,326.9 844.7,331.6 848.7,335.3 852.8,339.0 856.2,343.3 860.1,347.2 863.0,352.0" stroke="#45b4a2" stroke-width="1.700"/><polyline points="813.2,335.6 815.5,339.6 817.6,343.8 813.8,341.9 810.0,340.0" stroke="#45b4a2" stroke-width="1.700"/><polyline points="869.9,299.9 873.0,295.5 878.2,293.2 881.4,288.9 884.5,284.8 883.5,290.0 881.4,294.9 880.2,299.7 884.4,301.6 886.9,305.9 890.8,308.2 895.2,310.1 892.4,314.7 890.9,319.8 890.1,324.8 894.9,326.9 899.7,329.4 905.0,330.0 908.4,326.8 909.5,322.2 912.3,318.6 915.2,315.1 916.9,310.9 919.6,307.2 923.2,304.2 925.0,300.0" stroke="#45b4a2" stroke-width="1.700"/><polyline points="880.0,345.0 881.9,349.1 885.5,352.2 888.2,355.8 890.0,359.8 895.2,360.5 899.7,363.6 905.1,363.3 910.0,365.1 913.2,361.7 917.5,360.1 921.1,357.3 925.0,354.9 930.3,355.7 935.3,357.5 940.3,360.3 943.1,356.4 946.2,352.9 950.1,349.6 955.1,350.7 960.2,351.9 965.3,352.7 970.1,355.2 973.5,352.2 977.0,349.3 981.5,347.9 985.0,345.0" stroke="#45b4a2" stroke-width="1.700"/><polyline points="925.5,354.9 926.8,359.9 926.7,365.2 929.6,369.8 930.0,374.9 933.3,378.2 937.1,380.6 941.7,381.8 945.0,384.8 950.1,384.3 954.9,382.2 960.3,382.3 965.2,379.8 967.6,384.1 971.7,386.7 974.9,389.7 980.0,388.6 984.8,386.6 990.1,386.7 994.8,384.8 998.3,381.8 1000.2,377.6 1002.2,373.6 1004.9,369.7 1010.1,368.2 1014.7,365.4 1020.3,364.8 1024.7,361.2 1030.0,360.0" stroke="#45b4a2" stroke-width="1.700"/><polyline points="945.0,385.0 943.2,390.0 942.2,395.2 939.8,400.3 943.9,402.3 947.3,405.3 951.2,407.6 954.9,409.8 959.9,408.5 964.8,406.5 969.8,405.5 974.6,405.2 977.9,408.5 979.7,412.7 983.3,415.7 985.0,420.0" stroke="#45b4a2" stroke-width="1.700"/><polyline points="690.0,455.1 694.9,453.4 700.0,452.5 704.9,450.8 710.2,449.5 715.2,452.1 720.3,454.4 725.4,456.7 730.1,460.2 734.8,457.8 739.9,456.4 744.7,455.4 748.4,458.0 752.0,460.8 755.8,463.2 759.9,464.6 764.9,463.2 769.7,461.4 775.1,461.7 780.0,460.2 784.9,458.4 789.9,457.3 795.1,456.6 800.0,455.0" stroke="#45b4a2" stroke-width="1.700"/><polyline points="729.8,460.1 731.8,464.9 731.7,470.2 734.1,474.9 734.9,480.1 739.2,481.9 743.0,484.2 745.7,488.3 749.7,489.9 747.0,494.8 745.0,500.0" stroke="#45b4a2" stroke-width="1.700"/><polyline points="760.5,464.8 763.5,469.5 765.7,474.6 768.1,479.7 770.1,484.8 775.1,486.0 780.3,486.4 785.1,488.3 790.0,490.2 795.0,489.2 800.0,490.8 805.0,490.0" stroke="#45b4a2" stroke-width="1.700"/><polyline points="705.0,520.1 709.9,521.8 715.1,521.9 720.0,523.6 724.8,525.2 729.0,528.5 733.3,531.7 735.7,536.8 739.9,540.3 745.1,540.8 750.3,541.4 754.8,544.6 759.9,545.1 764.5,548.0 767.9,552.1 771.9,555.6 774.7,559.9 774.4,565.2 771.5,569.8 770.7,574.9 770.4,579.6 773.4,584.1 777.7,587.3 780.8,591.7 785.0,595.0" stroke="#45b4a2" stroke-width="1.700"/><polyline points="739.6,539.9 739.3,545.1 738.5,550.2 735.2,554.7 735.1,559.9 736.6,564.3 739.6,567.8 742.0,571.6 744.6,574.9 743.0,579.9 741.8,585.0 740.2,590.5 734.8,592.1 730.1,595.2 725.0,597.5 719.6,600.3 724.0,603.4 726.2,608.4 730.0,612.0" stroke="#45b4a2" stroke-width="1.700"/><polyline points="850.3,419.5 853.5,422.9 857.1,425.6 861.6,427.0 864.9,430.0 862.3,434.6 861.4,439.9 860.0,445.1 865.2,446.1 870.3,447.3 875.0,450.0" stroke="#45b4a2" stroke-width="1.700"/><polyline points="960.1,606.8 965.1,608.5 970.2,609.7 974.9,611.8 979.5,607.8 984.9,605.2 989.9,607.1 995.2,607.7 1000.3,609.8 1002.5,613.8 1005.1,617.4 1006.6,621.8 1010.1,624.8 1015.2,626.2 1019.7,629.2 1025.0,630.0" stroke="#45b4a2" stroke-width="1.700"/><polyline points="975.4,612.1 973.6,616.5 972.9,621.1 970.5,625.3 970.0,630.0 972.0,634.1 975.7,637.1 977.2,641.5 979.9,645.0 978.4,650.0 976.1,654.8 974.9,660.4 980.3,660.8 985.2,662.9 989.9,664.9 992.8,661.2 995.9,657.6 1000.1,654.8 1005.2,656.0 1009.8,658.8 1015.0,660.0" stroke="#45b4a2" stroke-width="1.700"/><polyline points="955.1,625.0 958.3,628.2 960.4,632.3 962.6,636.2 965.2,640.1 964.1,645.3 962.6,650.3 960.4,654.6 962.5,659.2 966.2,662.1 970.4,665.3 967.1,668.5 964.0,671.9 962.4,676.2 960.0,680.0" stroke="#45b4a2" stroke-width="1.700"/><polyline points="999.6,654.9 1001.6,650.0 1003.2,645.0 1004.9,639.6 1010.0,638.4 1014.6,635.5 1019.8,635.5 1023.9,637.0 1027.9,638.6 1032.0,640.0" stroke="#45b4a2" stroke-width="1.700"/><polyline points="990.4,520.4 994.3,516.3 998.3,512.0 999.3,517.3 1000.2,522.6 1000.1,528.5 995.8,528.4 992.0,530.0" stroke="#45b4a2" stroke-width="1.700"/><polyline points="935.1,580.4 939.9,578.0 945.4,576.9 946.2,582.6 947.9,587.6 942.8,588.0 938.0,590.0" stroke="#45b4a2" stroke-width="1.700"/><polyline points="811.6,237.1 816.9,239.3 822.3,240.4 828.0,240.9 832.6,239.5 837.2,238.4 841.6,238.6 843.7,242.5 844.6,246.7 848.5,249.6 852.9,252.0 856.6,255.4 861.7,256.4 866.6,257.9 870.7,261.2 875.3,263.1 878.9,267.4 883.6,270.8 888.9,270.8 894.0,270.1 898.9,268.2 904.0,267.4 906.1,262.8 909.2,258.8 912.6,255.0 913.5,249.4 916.8,244.8 917.9,240.2 920.7,236.6 917.4,232.3 912.1,230.3 909.3,227.7 907.9,224.0 908.2,219.3 910.0,215.0" stroke="#a841c8" stroke-width="2.500"/><polyline points="912.4,255.3 917.1,255.5 920.5,259.2 924.7,260.3 927.9,264.5 932.1,268.0 930.9,273.5 928.5,278.8 931.3,282.9 934.1,287.0 933.1,291.5 931.5,295.7 929.8,300.1 932.7,304.5 935.9,308.7 940.2,311.6 945.2,314.0 950.1,316.9 954.9,319.6 960.1,321.8 965.2,323.1 970.2,324.6 974.9,327.0 979.7,329.1 984.9,331.5 989.3,329.2 993.4,326.5 997.4,323.5 1002.1,320.2 1005.9,315.9 1010.0,312.0" stroke="#a841c8" stroke-width="2.500"/><polyline points="786.7,288.4 792.3,288.4 797.0,291.4 802.2,292.8 807.3,293.7 812.6,293.2 817.2,292.4 821.2,296.1 824.3,300.6 828.1,304.3 832.2,306.9 835.4,310.8 840.7,311.7 844.4,315.3 844.5,320.3 846.1,325.0 845.8,329.8 843.1,333.9 842.5,338.5 842.7,343.6 843.6,348.7 844.0,353.8 843.3,358.8 843.1,364.0 842.8,369.0 843.6,373.3 842.1,377.8 843.5,382.1 844.4,386.3 845.6,391.3 849.5,394.8 852.3,399.0 853.8,403.8 858.7,404.1 863.4,405.7 868.2,406.9 873.3,407.5 875.3,411.6 878.7,414.8 880.2,419.2 882.7,423.1 887.3,422.6 891.6,424.1 896.5,424.8 898.1,429.4 899.1,434.4 901.9,438.5 902.0,443.3 902.5,448.0 904.8,452.5 903.1,457.5 904.8,462.2 909.2,465.7 911.0,471.2 915.0,475.0" stroke="#a841c8" stroke-width="2.500"/><polyline points="744.1,349.9 748.3,355.7 752.1,360.7 757.6,363.6 761.0,368.7 765.5,372.5 770.4,374.4 775.8,373.2 780.9,374.7 785.7,375.7 790.9,376.6 794.1,381.5 798.7,385.2 802.1,389.8 807.6,392.5 811.6,394.0 815.5,396.5 820.2,395.8 825.1,396.0 829.8,394.7 834.9,394.4 839.9,391.0 844.0,386.5" stroke="#a841c8" stroke-width="2.500"/><polyline points="808.1,392.4 805.8,397.3 805.5,402.7 803.5,407.8 804.6,412.9 805.6,418.1 808.1,423.3 805.4,427.0 802.1,430.4 799.4,434.6 799.4,439.7 801.2,444.8 799.7,449.9 800.4,454.7 802.9,458.8 805.4,463.0 809.8,465.6 811.5,469.8 809.8,474.8 809.1,480.2 807.5,485.3 805.0,489.9 808.3,493.2 812.4,495.2 816.8,496.7 820.2,499.4 824.8,500.3 828.8,503.3 833.7,503.0 838.0,505.0" stroke="#a841c8" stroke-width="2.500"/><polyline points="745.0,376.9 738.9,378.4 732.5,378.7 730.4,383.5 728.4,388.3 724.5,392.4 725.6,397.4 725.8,402.6 726.8,408.0 730.8,411.2 736.3,411.5 740.2,415.0 739.6,420.2 737.5,425.0 735.3,429.8 734.8,435.3 740.1,437.4 744.2,441.0 748.2,445.4 752.2,443.8 755.9,441.4 760.0,440.0 764.7,437.5 770.3,437.5 774.9,434.7 780.3,434.3 785.1,431.9 790.2,429.5 795.2,431.9 800.0,434.6" stroke="#a841c8" stroke-width="2.500"/><polyline points="892.3,390.0 897.3,392.0 902.5,391.9 907.1,392.1 908.8,386.3 911.3,380.8 911.4,375.0 911.7,369.3 911.5,363.5" stroke="#a841c8" stroke-width="2.500"/><polyline points="910.1,434.5 909.5,439.6 909.6,444.7 907.4,449.5 908.8,454.4 910.4,459.3 910.0,464.4 914.7,467.0 920.3,465.9 925.2,467.4 930.2,469.6 930.7,465.0 931.9,460.6 933.8,456.4 934.8,451.8 938.1,448.1 941.1,444.0 945.0,440.7 948.0,436.8 949.7,431.5 954.2,429.6 958.7,427.6 962.6,425.0 967.1,423.9 971.3,422.3 975.7,421.1 980.0,419.3 984.9,418.3 990.1,419.0 995.1,418.6 1000.2,417.5 1004.6,415.6 1008.5,412.8 1013.4,412.0 1017.7,409.7 1021.3,405.8 1025.2,402.1 1027.2,396.8 1030.0,392.0 1033.6,388.1 1036.7,383.7 1041.0,380.5 1044.9,376.8 1050.6,375.6 1055.0,372.0 1059.8,369.2 1064.8,366.7 1069.6,362.7 1075.0,359.5" stroke="#a841c8" stroke-width="2.500"/><polyline points="1025.2,401.9 1027.9,406.1 1030.2,410.5 1030.1,415.9 1033.1,420.0 1035.1,424.5 1036.5,429.6 1038.8,434.3 1040.3,439.2 1044.2,443.0 1047.1,447.5 1050.1,451.8 1054.6,456.2 1060.0,459.5" stroke="#a841c8" stroke-width="2.500"/><polyline points="929.9,469.5 930.2,474.2 932.9,478.1 932.7,482.9 934.9,487.0 937.7,491.7 939.1,496.7 939.9,502.1 942.4,506.2 946.9,508.4 950.0,512.4 955.0,511.2 960.1,511.7 964.9,509.0 970.0,509.5 974.5,512.9 980.3,514.4 981.5,518.5 982.9,522.6 982.5,527.0" stroke="#a841c8" stroke-width="2.500"/><polyline points="838.3,504.7 841.5,508.4 843.6,512.8 847.6,515.8 850.0,519.9 855.2,520.2 859.9,522.3 864.8,523.9 869.9,524.4 875.3,524.7 878.3,529.2 881.6,533.4 886.1,536.4 890.2,539.5 894.7,542.4 899.7,544.3 904.9,544.8 909.7,542.4 914.7,540.9 920.0,540.0 924.4,536.9 927.8,532.8 932.0,529.5 934.6,524.9 935.6,520.3 937.6,515.9 938.4,511.3 938.8,506.5 940.0,502.0" stroke="#a841c8" stroke-width="2.500"/><polyline points="934.9,525.2 939.0,527.1 943.1,529.0 946.4,532.3 950.3,534.5 953.6,537.8 957.7,539.6 961.3,542.5 964.9,545.1 968.0,548.4 970.1,552.4 973.6,555.5 974.7,560.5 978.7,562.6 981.8,566.1 986.9,566.5 989.9,570.1 992.0,574.1 995.4,577.3 998.4,580.7 1000.4,584.8 1003.3,588.2 1004.4,592.9 1008.4,595.7 1009.8,600.4 1015.1,602.3 1020.0,605.1 1024.9,607.7 1029.9,610.1 1033.5,614.0 1037.3,617.7 1041.6,620.9 1045.0,625.0" stroke="#a841c8" stroke-width="2.500"/><polyline points="904.7,544.9 904.4,550.2 902.0,554.9 900.6,559.8 899.7,565.1 901.7,569.9 901.8,575.2 902.5,580.3 905.0,585.1 900.3,588.0 895.0,590.0" stroke="#a841c8" stroke-width="2.500"/><polyline points="975.0,560.0 980.4,559.1 984.6,555.1 989.5,552.8 995.0,551.9 1000.0,550.2 1005.1,550.2 1010.0,548.6 1015.1,549.8 1019.9,547.7 1025.2,546.6 1029.6,543.0 1034.5,540.9 1039.9,539.5 1044.1,537.9 1048.8,538.0 1053.2,537.1 1057.4,535.2 1062.1,535.6 1066.9,533.4 1071.8,531.6 1076.8,530.4 1082.0,530.0" stroke="#a841c8" stroke-width="2.500"/><polyline points="666.7,402.1 666.8,406.9 669.5,411.2 670.7,415.8 669.6,420.8 671.8,425.2 671.6,430.5 675.6,433.0 679.0,436.3 683.1,438.7 685.9,442.6 690.0,445.0 692.4,449.8 693.0,455.4 696.9,459.6 697.4,465.2 700.5,470.2 698.0,474.9 696.9,480.1 694.1,484.7 694.4,490.4 691.5,494.9 690.1,499.9 692.1,504.7 695.1,508.7 698.7,512.2 702.6,515.6 705.3,520.1 704.6,525.1 703.2,530.0 702.7,535.1 701.8,540.2 699.8,545.2 703.5,549.0 707.9,552.1 710.3,557.2 715.4,560.1 713.8,565.0 713.9,570.2 711.1,574.8 710.1,579.8 710.2,585.2 706.3,588.3 702.9,592.0 700.7,596.6 697.0,600.0" stroke="#a841c8" stroke-width="2.500"/><polyline points="616.2,407.0 616.9,411.7 616.7,416.6 619.4,421.0 619.0,425.9 620.0,430.6 621.3,435.3 621.9,440.0 619.4,444.7 619.4,450.2 616.1,454.7 615.7,460.1 613.0,464.8 611.6,470.2 614.6,474.0 614.8,478.9 616.4,483.4 619.9,486.9 622.4,490.9 624.1,495.3 624.5,500.4 629.0,503.2 630.1,508.6 634.7,511.5 636.5,516.4 640.5,520.1 639.5,525.2 636.9,529.9 637.0,535.3 635.1,540.1 632.3,544.7 631.7,550.1 632.9,554.7 634.6,559.1 638.7,562.4 640.1,566.9 640.6,571.7 642.7,575.9 645.6,580.1 644.2,585.0 644.0,590.1 642.7,595.0 642.7,600.2 642.1,605.2 639.4,610.3 642.6,614.1 643.4,619.0 647.3,622.4 648.6,627.1 651.6,631.0 653.0,635.6 655.4,640.1 653.5,645.3 653.9,651.0 651.4,656.1 651.0,661.6 650.0,667.0" stroke="#a841c8" stroke-width="2.500"/><polyline points="690.1,499.5 695.1,500.5 700.0,501.7 704.8,503.6 710.1,502.9 715.1,503.4 720.1,505.6 725.2,505.0 730.1,503.6 734.9,501.4 739.8,500.2 745.1,499.7 750.4,501.0 755.4,502.9 760.0,506.0 765.1,507.8 769.9,510.1 773.6,513.1 777.6,515.8 779.7,520.3 783.1,523.6 786.6,526.7 789.9,530.0 791.2,535.2 792.1,540.4 794.1,545.3 796.1,550.2 798.6,554.9 800.2,560.0 800.5,565.3 799.3,570.6 801.2,575.8 801.4,581.1 801.7,586.4 802.6,591.7 802.0,597.0" stroke="#a841c8" stroke-width="2.500"/><polyline points="564.1,474.6 569.0,471.9 574.4,472.7 579.8,472.7 584.7,470.2 590.0,470.1 595.0,469.7 600.0,469.3 605.0,469.2 610.0,470.0" stroke="#a841c8" stroke-width="2.500"/><polyline points="625.1,500.5 619.8,500.1 614.9,501.3 609.8,502.0 605.2,505.1 600.1,504.8 594.8,503.4 590.1,500.6 585.0,498.9 580.0,497.0" stroke="#a841c8" stroke-width="2.500"/><polyline points="845.0,506.8 849.7,508.2 854.4,505.7 859.1,507.6 863.8,507.9 868.4,507.0 873.1,507.2 877.8,508.3 882.2,506.8 885.3,502.2 887.8,496.9 885.9,492.1 885.0,487.0" stroke="#a841c8" stroke-width="2.500"/></g><g fill="none" stroke-linejoin="round"><polygon points="869.8,179.7 873.6,179.6 877.7,176.2 881.4,177.3 885.7,177.0 888.8,179.4 891.5,182.8 895.8,181.9 898.2,184.4 903.0,186.6 904.5,190.5 904.1,194.9 905.5,199.2 905.6,203.4 905.1,206.4 905.7,211.5 910.3,212.5 912.6,214.6 916.4,214.6 920.1,215.0 923.6,218.7 927.4,218.7 931.2,218.6 934.5,215.6 938.5,215.7 942.9,217.3 946.7,216.7 950.8,215.5 952.9,211.5 957.1,211.6 959.5,209.9 962.7,212.0 967.5,210.6 968.9,214.8 970.6,217.7 973.3,219.9 977.8,220.8 976.5,225.9 980.8,227.1 979.9,231.3 981.9,234.1 982.6,237.5 985.2,239.9 986.4,243.2 990.7,244.8 992.9,247.7 994.8,250.9 993.9,255.9 996.8,258.7 998.9,262.1 1000.8,265.7 1003.0,268.2 1004.5,271.8 1005.8,275.6 1006.6,279.5 1010.9,282.7 1010.5,286.4 1009.6,290.1 1009.3,293.9 1008.5,297.2 1007.1,301.8 1007.9,305.7 1012.7,308.3 1011.4,313.3 1014.2,316.4 1016.8,319.7 1022.0,321.5 1020.7,326.3 1021.8,329.9 1025.4,331.8 1028.9,333.2 1030.0,337.9 1035.2,336.7 1036.4,341.4 1040.0,344.7 1043.3,344.0 1046.7,340.4 1050.0,344.0 1053.3,343.4 1056.7,340.6 1059.5,343.9 1064.2,342.3 1068.2,342.9 1070.9,347.2 1076.9,347.5 1072.7,351.0 1076.0,353.0 1076.6,357.5 1080.7,356.7 1083.6,358.4 1083.8,363.2 1089.2,363.5 1087.7,368.6 1092.2,370.2 1092.0,374.6 1096.8,375.6 1096.3,381.1 1101.4,382.1 1101.3,387.3 1103.3,390.9 1106.8,393.2 1110.9,395.0 1113.5,398.1 1113.8,403.2 1118.6,403.4 1118.6,408.4 1124.0,408.0 1126.8,410.8 1127.9,413.7 1129.5,416.2 1129.2,419.1 1127.0,422.2 1128.4,427.0 1126.2,431.5 1122.4,432.3 1117.7,431.5 1116.5,436.6 1111.6,435.5 1108.8,438.0 1106.7,441.5 1103.9,444.0 1100.4,445.9 1097.2,447.3 1093.5,447.0 1090.3,448.2 1087.1,449.7 1083.0,447.5 1079.1,447.7 1078.0,452.9 1073.0,450.6 1070.1,452.2 1068.7,456.9 1066.3,458.6 1062.9,460.8 1059.4,462.8 1054.5,463.1 1054.1,466.7 1051.3,471.1 1051.8,474.8 1056.5,477.9 1055.8,481.2 1056.9,485.1 1061.1,485.9 1063.2,487.7 1066.2,489.4 1069.4,490.3 1071.3,494.7 1074.3,495.9 1078.8,494.3 1080.0,499.5 1084.9,497.2 1087.6,499.2 1089.0,503.0 1093.8,503.2 1094.4,507.6 1095.7,508.6 1097.8,513.8 1093.3,515.7 1093.9,521.3 1090.3,523.5 1086.7,525.6 1081.5,527.0 1083.5,529.8 1080.4,531.6 1080.0,535.1 1081.2,539.2 1080.5,542.6 1078.7,545.5 1074.9,547.6 1076.3,551.8 1072.3,553.8 1073.3,558.1 1071.8,562.0 1068.2,564.3 1064.3,566.3 1063.5,569.4 1066.1,572.1 1065.0,577.0 1066.5,580.3 1071.1,582.0 1072.6,585.1 1073.6,588.3 1075.4,591.2 1074.1,595.0 1075.9,599.2 1076.5,603.3 1072.9,606.6 1071.7,609.8 1070.9,613.1 1072.7,617.5 1071.3,621.8 1067.4,623.5 1064.0,625.9 1060.3,625.8 1056.0,628.1 1052.3,627.4 1048.4,627.9 1045.2,625.8 1042.2,627.2 1039.2,628.4 1036.0,628.6 1030.8,627.9 1031.1,631.4 1032.4,634.6 1036.0,636.6 1038.3,639.1 1037.8,644.0 1042.4,644.4 1042.6,647.3 1044.4,651.0 1040.9,653.9 1041.6,656.0 1038.9,658.6 1036.8,662.1 1032.7,662.4 1029.6,662.8 1026.1,664.5 1022.3,665.1 1018.9,667.7 1014.6,666.7 1011.3,667.6 1009.5,671.6 1006.4,672.8 1003.5,674.4 1001.0,676.0 996.6,676.6 995.7,680.7 993.8,683.8 988.1,684.6 988.2,688.2 989.2,692.0 985.7,694.8 988.9,699.1 986.0,704.0 982.4,702.9 978.8,703.0 975.2,699.8 971.6,699.9 966.5,702.8 965.1,699.8 963.5,696.9 961.5,694.2 960.0,691.3 958.6,688.9 958.3,684.2 953.5,684.0 951.2,681.3 948.9,677.8 950.7,673.8 949.2,670.6 949.3,666.8 945.4,664.7 943.8,661.7 945.4,657.5 941.8,654.6 942.8,651.0 944.2,647.5 948.7,644.5 947.6,641.3 946.8,638.0 942.6,636.1 940.7,633.8 939.0,629.9 935.9,627.1 936.6,620.9 933.3,619.2 929.4,618.1 926.8,615.7 926.1,610.6 921.0,612.1 919.8,606.9 916.2,605.9 913.7,604.4 910.1,602.0 910.8,597.5 908.0,593.8 903.8,595.1 901.7,591.3 898.4,590.5 894.7,588.0 891.6,592.8 887.8,593.1 883.6,590.7 880.5,593.8 877.0,595.1 872.3,593.3 869.9,597.5 866.7,599.6 863.3,597.4 858.8,598.4 856.9,594.5 853.6,593.2 850.5,590.6 847.1,589.5 843.6,588.4 839.0,591.3 835.4,590.6 832.1,586.1 829.5,590.2 825.1,588.0 822.3,591.5 818.1,590.2 814.6,591.4 811.4,592.4 809.2,596.2 805.3,595.3 802.8,598.4 798.8,597.2 795.4,598.0 792.6,599.9 790.7,603.4 787.5,606.1 784.1,608.5 779.2,609.1 778.9,613.8 774.1,613.5 773.4,617.8 769.9,617.1 766.2,618.0 762.4,618.5 758.8,620.7 754.9,621.4 751.3,618.3 747.6,617.4 743.7,620.2 741.0,617.4 737.9,614.9 733.8,614.0 731.3,610.7 728.0,608.2 722.1,609.1 719.6,606.0 715.8,605.7 713.7,601.5 709.9,601.8 705.7,601.8 701.5,602.1 696.3,598.1 694.1,600.3 691.5,601.8 690.9,604.7 689.5,608.6 693.3,610.8 694.9,613.8 694.8,617.4 692.0,621.8 692.4,626.0 696.2,630.9 693.8,634.3 691.8,638.0 686.8,639.5 686.2,644.3 681.8,646.1 681.4,651.1 676.6,652.6 676.5,657.8 672.0,658.7 669.0,660.2 665.5,660.7 663.5,664.8 660.3,666.2 656.9,666.9 653.6,667.8 649.6,666.6 645.9,667.6 644.0,672.2 639.2,674.6 636.1,673.3 633.3,671.0 630.1,670.1 626.7,668.3 626.5,663.5 623.8,661.2 618.4,661.6 618.2,656.6 614.9,654.3 612.5,650.9 609.0,648.9 604.4,648.0 603.2,643.8 601.7,639.9 596.2,639.2 593.7,635.5 595.6,631.1 593.4,628.4 592.3,625.2 590.9,621.9 589.8,618.4 587.0,615.8 585.4,612.5 583.2,609.6 579.3,607.6 577.7,604.4 575.0,601.7 576.3,597.8 577.8,594.8 575.1,591.0 579.0,588.6 578.3,584.9 576.0,581.4 575.3,577.7 577.8,573.4 576.9,570.4 577.6,567.3 574.1,563.3 576.1,560.5 578.9,556.1 573.8,556.2 574.0,551.0 571.3,550.2 569.1,545.8 573.2,542.3 570.5,537.8 571.3,534.9 571.2,530.6 569.9,527.2 565.2,526.5 562.9,523.2 564.9,518.7 563.7,514.8 561.4,509.7 564.5,507.6 567.8,505.9 572.9,506.9 575.4,504.4 577.5,501.8 578.3,497.8 580.6,496.5 578.7,493.2 579.2,488.8 575.4,487.1 572.7,484.8 570.2,482.3 568.3,479.2 568.0,474.5 562.3,474.6 562.8,470.1 561.2,467.1 557.4,465.4 554.6,463.1 555.7,458.0 550.8,456.8 551.0,451.5 546.2,450.2 545.2,445.6 542.2,443.0 537.6,442.4 535.7,438.3 530.4,437.7 530.8,432.5 528.2,429.5 525.7,427.6 525.8,422.7 530.5,421.3 530.5,416.4 533.1,413.4 535.6,410.1 541.0,408.9 544.1,405.3 544.6,401.9 543.3,397.8 547.1,395.7 545.4,390.6 550.3,390.8 552.4,388.6 552.8,382.8 557.2,386.8 561.1,385.2 564.9,382.5 569.6,384.9 571.8,381.3 574.6,379.5 578.7,380.6 580.6,380.2 585.1,379.2 587.3,382.7 591.9,381.4 595.0,384.0 597.3,386.5 600.4,388.2 600.3,393.1 602.9,395.3 607.2,395.8 609.7,398.3 612.4,400.6 614.7,403.3 616.4,405.7 619.8,406.7 623.1,408.0 626.4,409.2 630.1,409.3 632.8,413.0 636.5,414.2 640.2,415.0 644.0,415.5 648.6,415.7 651.8,414.2 654.7,412.2 656.6,408.1 661.3,409.3 664.7,407.6 667.9,405.7 670.4,403.3 673.2,400.0 677.4,401.3 680.9,400.5 683.8,397.2 686.9,396.3 691.9,396.0 693.2,391.3 698.0,390.9 699.4,386.4 700.8,382.7 704.2,380.7 708.4,379.4 708.6,374.6 711.8,373.6 711.3,368.9 708.5,367.4 710.7,364.8 710.3,362.0 714.0,361.1 717.9,360.7 720.9,356.8 724.7,356.0 729.1,356.7 733.1,356.2 736.6,354.3 740.9,352.2 739.1,348.4 743.8,346.2 743.8,343.5 744.1,338.6 749.0,337.4 750.9,333.9 753.7,331.1 755.8,328.4 756.0,324.0 758.1,321.3 760.8,319.2 765.3,317.6 766.2,313.5 763.5,309.1 766.6,305.6 767.6,302.4 769.5,299.5 767.3,295.1 769.3,292.0 771.2,288.3 775.8,286.9 778.8,284.1 781.2,281.2 781.7,276.7 785.7,275.7 785.9,270.9 788.7,268.7 793.1,268.2 794.3,263.4 799.6,263.6 803.3,261.8 803.4,256.7 808.0,255.1 809.5,252.0 810.6,248.6 810.2,244.7 811.0,241.1 812.7,237.9 814.3,234.5 816.0,231.7 817.4,228.6 822.3,227.9 821.0,223.7 821.9,220.3 821.5,216.6 826.2,213.8 824.0,209.1 829.0,208.2 830.7,204.6 833.0,201.9 834.9,198.3 838.0,196.7 842.4,197.5 845.4,195.7 848.9,193.7 850.9,190.5 851.8,186.2 854.6,183.0 857.2,180.8 860.1,179.4 864.4,181.1 867.5,180.0" stroke="#ff6a5a" stroke-width="6.600"/><polygon points="869.8,179.7 873.6,179.6 877.7,176.2 881.4,177.3 885.7,177.0 888.8,179.4 891.5,182.8 895.8,181.9 898.2,184.4 903.0,186.6 904.5,190.5 904.1,194.9 905.5,199.2 905.6,203.4 905.1,206.4 905.7,211.5 910.3,212.5 912.6,214.6 916.4,214.6 920.1,215.0 923.6,218.7 927.4,218.7 931.2,218.6 934.5,215.6 938.5,215.7 942.9,217.3 946.7,216.7 950.8,215.5 952.9,211.5 957.1,211.6 959.5,209.9 962.7,212.0 967.5,210.6 968.9,214.8 970.6,217.7 973.3,219.9 977.8,220.8 976.5,225.9 980.8,227.1 979.9,231.3 981.9,234.1 982.6,237.5 985.2,239.9 986.4,243.2 990.7,244.8 992.9,247.7 994.8,250.9 993.9,255.9 996.8,258.7 998.9,262.1 1000.8,265.7 1003.0,268.2 1004.5,271.8 1005.8,275.6 1006.6,279.5 1010.9,282.7 1010.5,286.4 1009.6,290.1 1009.3,293.9 1008.5,297.2 1007.1,301.8 1007.9,305.7 1012.7,308.3 1011.4,313.3 1014.2,316.4 1016.8,319.7 1022.0,321.5 1020.7,326.3 1021.8,329.9 1025.4,331.8 1028.9,333.2 1030.0,337.9 1035.2,336.7 1036.4,341.4 1040.0,344.7 1043.3,344.0 1046.7,340.4 1050.0,344.0 1053.3,343.4 1056.7,340.6 1059.5,343.9 1064.2,342.3 1068.2,342.9 1070.9,347.2 1076.9,347.5 1072.7,351.0 1076.0,353.0 1076.6,357.5 1080.7,356.7 1083.6,358.4 1083.8,363.2 1089.2,363.5 1087.7,368.6 1092.2,370.2 1092.0,374.6 1096.8,375.6 1096.3,381.1 1101.4,382.1 1101.3,387.3 1103.3,390.9 1106.8,393.2 1110.9,395.0 1113.5,398.1 1113.8,403.2 1118.6,403.4 1118.6,408.4 1124.0,408.0 1126.8,410.8 1127.9,413.7 1129.5,416.2 1129.2,419.1 1127.0,422.2 1128.4,427.0 1126.2,431.5 1122.4,432.3 1117.7,431.5 1116.5,436.6 1111.6,435.5 1108.8,438.0 1106.7,441.5 1103.9,444.0 1100.4,445.9 1097.2,447.3 1093.5,447.0 1090.3,448.2 1087.1,449.7 1083.0,447.5 1079.1,447.7 1078.0,452.9 1073.0,450.6 1070.1,452.2 1068.7,456.9 1066.3,458.6 1062.9,460.8 1059.4,462.8 1054.5,463.1 1054.1,466.7 1051.3,471.1 1051.8,474.8 1056.5,477.9 1055.8,481.2 1056.9,485.1 1061.1,485.9 1063.2,487.7 1066.2,489.4 1069.4,490.3 1071.3,494.7 1074.3,495.9 1078.8,494.3 1080.0,499.5 1084.9,497.2 1087.6,499.2 1089.0,503.0 1093.8,503.2 1094.4,507.6 1095.7,508.6 1097.8,513.8 1093.3,515.7 1093.9,521.3 1090.3,523.5 1086.7,525.6 1081.5,527.0 1083.5,529.8 1080.4,531.6 1080.0,535.1 1081.2,539.2 1080.5,542.6 1078.7,545.5 1074.9,547.6 1076.3,551.8 1072.3,553.8 1073.3,558.1 1071.8,562.0 1068.2,564.3 1064.3,566.3 1063.5,569.4 1066.1,572.1 1065.0,577.0 1066.5,580.3 1071.1,582.0 1072.6,585.1 1073.6,588.3 1075.4,591.2 1074.1,595.0 1075.9,599.2 1076.5,603.3 1072.9,606.6 1071.7,609.8 1070.9,613.1 1072.7,617.5 1071.3,621.8 1067.4,623.5 1064.0,625.9 1060.3,625.8 1056.0,628.1 1052.3,627.4 1048.4,627.9 1045.2,625.8 1042.2,627.2 1039.2,628.4 1036.0,628.6 1030.8,627.9 1031.1,631.4 1032.4,634.6 1036.0,636.6 1038.3,639.1 1037.8,644.0 1042.4,644.4 1042.6,647.3 1044.4,651.0 1040.9,653.9 1041.6,656.0 1038.9,658.6 1036.8,662.1 1032.7,662.4 1029.6,662.8 1026.1,664.5 1022.3,665.1 1018.9,667.7 1014.6,666.7 1011.3,667.6 1009.5,671.6 1006.4,672.8 1003.5,674.4 1001.0,676.0 996.6,676.6 995.7,680.7 993.8,683.8 988.1,684.6 988.2,688.2 989.2,692.0 985.7,694.8 988.9,699.1 986.0,704.0 982.4,702.9 978.8,703.0 975.2,699.8 971.6,699.9 966.5,702.8 965.1,699.8 963.5,696.9 961.5,694.2 960.0,691.3 958.6,688.9 958.3,684.2 953.5,684.0 951.2,681.3 948.9,677.8 950.7,673.8 949.2,670.6 949.3,666.8 945.4,664.7 943.8,661.7 945.4,657.5 941.8,654.6 942.8,651.0 944.2,647.5 948.7,644.5 947.6,641.3 946.8,638.0 942.6,636.1 940.7,633.8 939.0,629.9 935.9,627.1 936.6,620.9 933.3,619.2 929.4,618.1 926.8,615.7 926.1,610.6 921.0,612.1 919.8,606.9 916.2,605.9 913.7,604.4 910.1,602.0 910.8,597.5 908.0,593.8 903.8,595.1 901.7,591.3 898.4,590.5 894.7,588.0 891.6,592.8 887.8,593.1 883.6,590.7 880.5,593.8 877.0,595.1 872.3,593.3 869.9,597.5 866.7,599.6 863.3,597.4 858.8,598.4 856.9,594.5 853.6,593.2 850.5,590.6 847.1,589.5 843.6,588.4 839.0,591.3 835.4,590.6 832.1,586.1 829.5,590.2 825.1,588.0 822.3,591.5 818.1,590.2 814.6,591.4 811.4,592.4 809.2,596.2 805.3,595.3 802.8,598.4 798.8,597.2 795.4,598.0 792.6,599.9 790.7,603.4 787.5,606.1 784.1,608.5 779.2,609.1 778.9,613.8 774.1,613.5 773.4,617.8 769.9,617.1 766.2,618.0 762.4,618.5 758.8,620.7 754.9,621.4 751.3,618.3 747.6,617.4 743.7,620.2 741.0,617.4 737.9,614.9 733.8,614.0 731.3,610.7 728.0,608.2 722.1,609.1 719.6,606.0 715.8,605.7 713.7,601.5 709.9,601.8 705.7,601.8 701.5,602.1 696.3,598.1 694.1,600.3 691.5,601.8 690.9,604.7 689.5,608.6 693.3,610.8 694.9,613.8 694.8,617.4 692.0,621.8 692.4,626.0 696.2,630.9 693.8,634.3 691.8,638.0 686.8,639.5 686.2,644.3 681.8,646.1 681.4,651.1 676.6,652.6 676.5,657.8 672.0,658.7 669.0,660.2 665.5,660.7 663.5,664.8 660.3,666.2 656.9,666.9 653.6,667.8 649.6,666.6 645.9,667.6 644.0,672.2 639.2,674.6 636.1,673.3 633.3,671.0 630.1,670.1 626.7,668.3 626.5,663.5 623.8,661.2 618.4,661.6 618.2,656.6 614.9,654.3 612.5,650.9 609.0,648.9 604.4,648.0 603.2,643.8 601.7,639.9 596.2,639.2 593.7,635.5 595.6,631.1 593.4,628.4 592.3,625.2 590.9,621.9 589.8,618.4 587.0,615.8 585.4,612.5 583.2,609.6 579.3,607.6 577.7,604.4 575.0,601.7 576.3,597.8 577.8,594.8 575.1,591.0 579.0,588.6 578.3,584.9 576.0,581.4 575.3,577.7 577.8,573.4 576.9,570.4 577.6,567.3 574.1,563.3 576.1,560.5 578.9,556.1 573.8,556.2 574.0,551.0 571.3,550.2 569.1,545.8 573.2,542.3 570.5,537.8 571.3,534.9 571.2,530.6 569.9,527.2 565.2,526.5 562.9,523.2 564.9,518.7 563.7,514.8 561.4,509.7 564.5,507.6 567.8,505.9 572.9,506.9 575.4,504.4 577.5,501.8 578.3,497.8 580.6,496.5 578.7,493.2 579.2,488.8 575.4,487.1 572.7,484.8 570.2,482.3 568.3,479.2 568.0,474.5 562.3,474.6 562.8,470.1 561.2,467.1 557.4,465.4 554.6,463.1 555.7,458.0 550.8,456.8 551.0,451.5 546.2,450.2 545.2,445.6 542.2,443.0 537.6,442.4 535.7,438.3 530.4,437.7 530.8,432.5 528.2,429.5 525.7,427.6 525.8,422.7 530.5,421.3 530.5,416.4 533.1,413.4 535.6,410.1 541.0,408.9 544.1,405.3 544.6,401.9 543.3,397.8 547.1,395.7 545.4,390.6 550.3,390.8 552.4,388.6 552.8,382.8 557.2,386.8 561.1,385.2 564.9,382.5 569.6,384.9 571.8,381.3 574.6,379.5 578.7,380.6 580.6,380.2 585.1,379.2 587.3,382.7 591.9,381.4 595.0,384.0 597.3,386.5 600.4,388.2 600.3,393.1 602.9,395.3 607.2,395.8 609.7,398.3 612.4,400.6 614.7,403.3 616.4,405.7 619.8,406.7 623.1,408.0 626.4,409.2 630.1,409.3 632.8,413.0 636.5,414.2 640.2,415.0 644.0,415.5 648.6,415.7 651.8,414.2 654.7,412.2 656.6,408.1 661.3,409.3 664.7,407.6 667.9,405.7 670.4,403.3 673.2,400.0 677.4,401.3 680.9,400.5 683.8,397.2 686.9,396.3 691.9,396.0 693.2,391.3 698.0,390.9 699.4,386.4 700.8,382.7 704.2,380.7 708.4,379.4 708.6,374.6 711.8,373.6 711.3,368.9 708.5,367.4 710.7,364.8 710.3,362.0 714.0,361.1 717.9,360.7 720.9,356.8 724.7,356.0 729.1,356.7 733.1,356.2 736.6,354.3 740.9,352.2 739.1,348.4 743.8,346.2 743.8,343.5 744.1,338.6 749.0,337.4 750.9,333.9 753.7,331.1 755.8,328.4 756.0,324.0 758.1,321.3 760.8,319.2 765.3,317.6 766.2,313.5 763.5,309.1 766.6,305.6 767.6,302.4 769.5,299.5 767.3,295.1 769.3,292.0 771.2,288.3 775.8,286.9 778.8,284.1 781.2,281.2 781.7,276.7 785.7,275.7 785.9,270.9 788.7,268.7 793.1,268.2 794.3,263.4 799.6,263.6 803.3,261.8 803.4,256.7 808.0,255.1 809.5,252.0 810.6,248.6 810.2,244.7 811.0,241.1 812.7,237.9 814.3,234.5 816.0,231.7 817.4,228.6 822.3,227.9 821.0,223.7 821.9,220.3 821.5,216.6 826.2,213.8 824.0,209.1 829.0,208.2 830.7,204.6 833.0,201.9 834.9,198.3 838.0,196.7 842.4,197.5 845.4,195.7 848.9,193.7 850.9,190.5 851.8,186.2 854.6,183.0 857.2,180.8 860.1,179.4 864.4,181.1 867.5,180.0" stroke="#fff430" stroke-width="5.600"/><polygon points="869.8,179.7 873.6,179.6 877.7,176.2 881.4,177.3 885.7,177.0 888.8,179.4 891.5,182.8 895.8,181.9 898.2,184.4 903.0,186.6 904.5,190.5 904.1,194.9 905.5,199.2 905.6,203.4 905.1,206.4 905.7,211.5 910.3,212.5 912.6,214.6 916.4,214.6 920.1,215.0 923.6,218.7 927.4,218.7 931.2,218.6 934.5,215.6 938.5,215.7 942.9,217.3 946.7,216.7 950.8,215.5 952.9,211.5 957.1,211.6 959.5,209.9 962.7,212.0 967.5,210.6 968.9,214.8 970.6,217.7 973.3,219.9 977.8,220.8 976.5,225.9 980.8,227.1 979.9,231.3 981.9,234.1 982.6,237.5 985.2,239.9 986.4,243.2 990.7,244.8 992.9,247.7 994.8,250.9 993.9,255.9 996.8,258.7 998.9,262.1 1000.8,265.7 1003.0,268.2 1004.5,271.8 1005.8,275.6 1006.6,279.5 1010.9,282.7 1010.5,286.4 1009.6,290.1 1009.3,293.9 1008.5,297.2 1007.1,301.8 1007.9,305.7 1012.7,308.3 1011.4,313.3 1014.2,316.4 1016.8,319.7 1022.0,321.5 1020.7,326.3 1021.8,329.9 1025.4,331.8 1028.9,333.2 1030.0,337.9 1035.2,336.7 1036.4,341.4 1040.0,344.7 1043.3,344.0 1046.7,340.4 1050.0,344.0 1053.3,343.4 1056.7,340.6 1059.5,343.9 1064.2,342.3 1068.2,342.9 1070.9,347.2 1076.9,347.5 1072.7,351.0 1076.0,353.0 1076.6,357.5 1080.7,356.7 1083.6,358.4 1083.8,363.2 1089.2,363.5 1087.7,368.6 1092.2,370.2 1092.0,374.6 1096.8,375.6 1096.3,381.1 1101.4,382.1 1101.3,387.3 1103.3,390.9 1106.8,393.2 1110.9,395.0 1113.5,398.1 1113.8,403.2 1118.6,403.4 1118.6,408.4 1124.0,408.0 1126.8,410.8 1127.9,413.7 1129.5,416.2 1129.2,419.1 1127.0,422.2 1128.4,427.0 1126.2,431.5 1122.4,432.3 1117.7,431.5 1116.5,436.6 1111.6,435.5 1108.8,438.0 1106.7,441.5 1103.9,444.0 1100.4,445.9 1097.2,447.3 1093.5,447.0 1090.3,448.2 1087.1,449.7 1083.0,447.5 1079.1,447.7 1078.0,452.9 1073.0,450.6 1070.1,452.2 1068.7,456.9 1066.3,458.6 1062.9,460.8 1059.4,462.8 1054.5,463.1 1054.1,466.7 1051.3,471.1 1051.8,474.8 1056.5,477.9 1055.8,481.2 1056.9,485.1 1061.1,485.9 1063.2,487.7 1066.2,489.4 1069.4,490.3 1071.3,494.7 1074.3,495.9 1078.8,494.3 1080.0,499.5 1084.9,497.2 1087.6,499.2 1089.0,503.0 1093.8,503.2 1094.4,507.6 1095.7,508.6 1097.8,513.8 1093.3,515.7 1093.9,521.3 1090.3,523.5 1086.7,525.6 1081.5,527.0 1083.5,529.8 1080.4,531.6 1080.0,535.1 1081.2,539.2 1080.5,542.6 1078.7,545.5 1074.9,547.6 1076.3,551.8 1072.3,553.8 1073.3,558.1 1071.8,562.0 1068.2,564.3 1064.3,566.3 1063.5,569.4 1066.1,572.1 1065.0,577.0 1066.5,580.3 1071.1,582.0 1072.6,585.1 1073.6,588.3 1075.4,591.2 1074.1,595.0 1075.9,599.2 1076.5,603.3 1072.9,606.6 1071.7,609.8 1070.9,613.1 1072.7,617.5 1071.3,621.8 1067.4,623.5 1064.0,625.9 1060.3,625.8 1056.0,628.1 1052.3,627.4 1048.4,627.9 1045.2,625.8 1042.2,627.2 1039.2,628.4 1036.0,628.6 1030.8,627.9 1031.1,631.4 1032.4,634.6 1036.0,636.6 1038.3,639.1 1037.8,644.0 1042.4,644.4 1042.6,647.3 1044.4,651.0 1040.9,653.9 1041.6,656.0 1038.9,658.6 1036.8,662.1 1032.7,662.4 1029.6,662.8 1026.1,664.5 1022.3,665.1 1018.9,667.7 1014.6,666.7 1011.3,667.6 1009.5,671.6 1006.4,672.8 1003.5,674.4 1001.0,676.0 996.6,676.6 995.7,680.7 993.8,683.8 988.1,684.6 988.2,688.2 989.2,692.0 985.7,694.8 988.9,699.1 986.0,704.0 982.4,702.9 978.8,703.0 975.2,699.8 971.6,699.9 966.5,702.8 965.1,699.8 963.5,696.9 961.5,694.2 960.0,691.3 958.6,688.9 958.3,684.2 953.5,684.0 951.2,681.3 948.9,677.8 950.7,673.8 949.2,670.6 949.3,666.8 945.4,664.7 943.8,661.7 945.4,657.5 941.8,654.6 942.8,651.0 944.2,647.5 948.7,644.5 947.6,641.3 946.8,638.0 942.6,636.1 940.7,633.8 939.0,629.9 935.9,627.1 936.6,620.9 933.3,619.2 929.4,618.1 926.8,615.7 926.1,610.6 921.0,612.1 919.8,606.9 916.2,605.9 913.7,604.4 910.1,602.0 910.8,597.5 908.0,593.8 903.8,595.1 901.7,591.3 898.4,590.5 894.7,588.0 891.6,592.8 887.8,593.1 883.6,590.7 880.5,593.8 877.0,595.1 872.3,593.3 869.9,597.5 866.7,599.6 863.3,597.4 858.8,598.4 856.9,594.5 853.6,593.2 850.5,590.6 847.1,589.5 843.6,588.4 839.0,591.3 835.4,590.6 832.1,586.1 829.5,590.2 825.1,588.0 822.3,591.5 818.1,590.2 814.6,591.4 811.4,592.4 809.2,596.2 805.3,595.3 802.8,598.4 798.8,597.2 795.4,598.0 792.6,599.9 790.7,603.4 787.5,606.1 784.1,608.5 779.2,609.1 778.9,613.8 774.1,613.5 773.4,617.8 769.9,617.1 766.2,618.0 762.4,618.5 758.8,620.7 754.9,621.4 751.3,618.3 747.6,617.4 743.7,620.2 741.0,617.4 737.9,614.9 733.8,614.0 731.3,610.7 728.0,608.2 722.1,609.1 719.6,606.0 715.8,605.7 713.7,601.5 709.9,601.8 705.7,601.8 701.5,602.1 696.3,598.1 694.1,600.3 691.5,601.8 690.9,604.7 689.5,608.6 693.3,610.8 694.9,613.8 694.8,617.4 692.0,621.8 692.4,626.0 696.2,630.9 693.8,634.3 691.8,638.0 686.8,639.5 686.2,644.3 681.8,646.1 681.4,651.1 676.6,652.6 676.5,657.8 672.0,658.7 669.0,660.2 665.5,660.7 663.5,664.8 660.3,666.2 656.9,666.9 653.6,667.8 649.6,666.6 645.9,667.6 644.0,672.2 639.2,674.6 636.1,673.3 633.3,671.0 630.1,670.1 626.7,668.3 626.5,663.5 623.8,661.2 618.4,661.6 618.2,656.6 614.9,654.3 612.5,650.9 609.0,648.9 604.4,648.0 603.2,643.8 601.7,639.9 596.2,639.2 593.7,635.5 595.6,631.1 593.4,628.4 592.3,625.2 590.9,621.9 589.8,618.4 587.0,615.8 585.4,612.5 583.2,609.6 579.3,607.6 577.7,604.4 575.0,601.7 576.3,597.8 577.8,594.8 575.1,591.0 579.0,588.6 578.3,584.9 576.0,581.4 575.3,577.7 577.8,573.4 576.9,570.4 577.6,567.3 574.1,563.3 576.1,560.5 578.9,556.1 573.8,556.2 574.0,551.0 571.3,550.2 569.1,545.8 573.2,542.3 570.5,537.8 571.3,534.9 571.2,530.6 569.9,527.2 565.2,526.5 562.9,523.2 564.9,518.7 563.7,514.8 561.4,509.7 564.5,507.6 567.8,505.9 572.9,506.9 575.4,504.4 577.5,501.8 578.3,497.8 580.6,496.5 578.7,493.2 579.2,488.8 575.4,487.1 572.7,484.8 570.2,482.3 568.3,479.2 568.0,474.5 562.3,474.6 562.8,470.1 561.2,467.1 557.4,465.4 554.6,463.1 555.7,458.0 550.8,456.8 551.0,451.5 546.2,450.2 545.2,445.6 542.2,443.0 537.6,442.4 535.7,438.3 530.4,437.7 530.8,432.5 528.2,429.5 525.7,427.6 525.8,422.7 530.5,421.3 530.5,416.4 533.1,413.4 535.6,410.1 541.0,408.9 544.1,405.3 544.6,401.9 543.3,397.8 547.1,395.7 545.4,390.6 550.3,390.8 552.4,388.6 552.8,382.8 557.2,386.8 561.1,385.2 564.9,382.5 569.6,384.9 571.8,381.3 574.6,379.5 578.7,380.6 580.6,380.2 585.1,379.2 587.3,382.7 591.9,381.4 595.0,384.0 597.3,386.5 600.4,388.2 600.3,393.1 602.9,395.3 607.2,395.8 609.7,398.3 612.4,400.6 614.7,403.3 616.4,405.7 619.8,406.7 623.1,408.0 626.4,409.2 630.1,409.3 632.8,413.0 636.5,414.2 640.2,415.0 644.0,415.5 648.6,415.7 651.8,414.2 654.7,412.2 656.6,408.1 661.3,409.3 664.7,407.6 667.9,405.7 670.4,403.3 673.2,400.0 677.4,401.3 680.9,400.5 683.8,397.2 686.9,396.3 691.9,396.0 693.2,391.3 698.0,390.9 699.4,386.4 700.8,382.7 704.2,380.7 708.4,379.4 708.6,374.6 711.8,373.6 711.3,368.9 708.5,367.4 710.7,364.8 710.3,362.0 714.0,361.1 717.9,360.7 720.9,356.8 724.7,356.0 729.1,356.7 733.1,356.2 736.6,354.3 740.9,352.2 739.1,348.4 743.8,346.2 743.8,343.5 744.1,338.6 749.0,337.4 750.9,333.9 753.7,331.1 755.8,328.4 756.0,324.0 758.1,321.3 760.8,319.2 765.3,317.6 766.2,313.5 763.5,309.1 766.6,305.6 767.6,302.4 769.5,299.5 767.3,295.1 769.3,292.0 771.2,288.3 775.8,286.9 778.8,284.1 781.2,281.2 781.7,276.7 785.7,275.7 785.9,270.9 788.7,268.7 793.1,268.2 794.3,263.4 799.6,263.6 803.3,261.8 803.4,256.7 808.0,255.1 809.5,252.0 810.6,248.6 810.2,244.7 811.0,241.1 812.7,237.9 814.3,234.5 816.0,231.7 817.4,228.6 822.3,227.9 821.0,223.7 821.9,220.3 821.5,216.6 826.2,213.8 824.0,209.1 829.0,208.2 830.7,204.6 833.0,201.9 834.9,198.3 838.0,196.7 842.4,197.5 845.4,195.7 848.9,193.7 850.9,190.5 851.8,186.2 854.6,183.0 857.2,180.8 860.1,179.4 864.4,181.1 867.5,180.0" stroke="#a841c8" stroke-width="3.200"/></g><g font-size="11" fill="#000"><text x="743" y="194">д Чернея, население:63</text><text x="708" y="209">п Большевик, население:3</text><text x="718" y="222">д Нечаево, население:15</text><text x="754" y="237">д Березовка, население:6</text><text x="709" y="251">д Радичи, население:357</text><text x="770" y="265">д Приютино, население:33</text><text x="672" y="281">д Герасимовка, население:72</text><text x="765" y="294">д Остров, население:28</text><text x="740" y="307">д Ольховка, население:3</text><text x="603" y="322">д Старая Мармазовка, население:145</text><text x="678" y="335">п Клетня, население:13313</text><text x="634" y="356">п Бруев, население:0</text><text x="743" y="351">д Стибково, население:48</text><text x="564" y="377">д Струженка, население:276</text><text x="410" y="387">с Николаевка, население:15</text><text x="604" y="391">д Парфеновка, население:207</text><text x="763" y="370">с Страшевичи, население:127</text><text x="805" y="384">с Высокое, население:275</text><text x="401" y="402">д Кургановка, население:170</text><text x="577" y="404">д Варость, население:65</text><text x="824" y="401">с Печня, население:86</text><text x="436" y="416">п Труд, население:19</text><text x="605" y="419">д Сенча, население:14</text><text x="847" y="415">д Короткие, население:3</text><text x="395" y="430">д Палужская Рудня, население:265</text><text x="590" y="433">п Зеленая Роща, население:1</text><text x="910" y="429">д Гощь, население:315</text><text x="775" y="436">п Заречье, население:50</text><text x="425" y="443">с Летяхи, население:430</text><text x="566" y="448">д Лагутовка, население:9</text><text x="915" y="448">д Мостки, население:118</text><text x="426" y="462">с Верхличи, население:378</text><text x="575" y="462">д Княж, население:34</text><text x="710" y="459">д Алешкин, население:7</text><text x="897" y="464">с Милечь, население:500</text><text x="458" y="475">п Владимировка, население:16</text><text x="703" y="476">д Гроза, население:5</text><text x="833" y="479">д Починок, население:35</text><text x="457" y="489">с Яловка, население:437</text><text x="590" y="492">д Куровщина, население:5</text><text x="433" y="503">д Несвоевка, население:139</text><text x="842" y="504">с Валуец, население:734</text><text x="459" y="518">п Триголов, население:1</text><text x="677" y="522">д Расуха, население:0</text><text x="812" y="517">с Рожки, население:9</text><text x="808" y="530">д Гроздицы, население:0</text><text x="466" y="532">с Синий Колодец, население:259</text><text x="672" y="541">д Ковпня, население:6</text><text x="934" y="530">с Гнилево, население:309</text><text x="496" y="546">п Гатка, население:2</text><text x="672" y="555">х Низы, население:13</text><text x="840" y="546">х Попеленое, население:65</text><text x="494" y="569">д Гута, население:59</text><text x="697" y="569">д Рудня, население:66</text><text x="818" y="560">п Чайкино, население:479</text><text x="497" y="582">д Дубровка, население:148</text><text x="655" y="585">п Волна, население:1</text><text x="815" y="576">д Кричевочка, население:257</text><text x="451" y="596">д Федоровка, население:20</text><text x="848" y="589">х Барцаевка, население:0</text><text x="451" y="610">д Карпиловка, население:363</text><text x="764" y="602">с Понуровка, население:550</text><text x="463" y="624">д Кожановка, население:770</text><text x="735" y="616">с Ломаковка, население:232</text><text x="672" y="630">п Малинник, население:0</text><text x="864" y="630">с Чемлыж, население:405</text><text x="477" y="641">д Барановка, население:19</text><text x="650" y="644">п Вишневый, население:363</text><text x="814" y="643">с Зерново, население:451</text><text x="440" y="657">п Вербовый Выгор, население:10</text><text x="659" y="659">п Березовка, население:8</text><text x="860" y="656">п Трудовик, население:3</text><text x="505" y="675">д Раковка, население:34</text><text x="645" y="673">с Хоромное, население:550</text><text x="883" y="670">п Ручеек, население:0</text><text x="897" y="189">д Большая Лутна, население:16</text><text x="897" y="202">д Подковка, население:13</text><text x="904" y="224">д Старое Хотмирово, население:234</text><text x="933" y="238">с Немеричи, население:674</text><text x="942" y="252">д Сельцо, население:815</text><text x="961" y="267">п Ивот, население:6374</text><text x="921" y="281">с Фошня, население:11</text><text x="905" y="297">д Круча, население:13</text><text x="985" y="310">д Колядчино, население:95</text><text x="1004" y="328">д Радица, население:96</text><text x="921" y="343">с Речица, население:475</text><text x="1049" y="343">д Николаевка, население:11</text><text x="1036" y="356">с Журиничи, население:318</text><text x="1093" y="370">д Пасека, население:1</text><text x="1031" y="383">п Белые Берега, население:9642</text><text x="1067" y="396">п Красная Поляна, население:22</text><text x="1125" y="415">д Богатырево, население:0</text><text x="1094" y="429">с Вельяминова, население:1868</text><text x="1115" y="442">с Бочарки, население:18</text><text x="1072" y="456">д Дюкарева, население:35</text><text x="1056" y="470">д Цурикова, население:1</text><text x="1060" y="491">с Хотеева, население:209</text><text x="1070" y="505">д Нижний Городец, население:39</text><text x="1070" y="529">д Фошня, население:12</text><text x="1083" y="543">п Чернечек, население:12</text><text x="1078" y="556">п Жучок, население:34</text><text x="1060" y="573">д Захарово, население:31</text><text x="1058" y="595">п Семич, население:0</text><text x="1031" y="609">с Угревище, население:188</text><text x="1046" y="624">д Починок-Алешок, население:8</text><text x="1018" y="641">д Кривцова, население:169</text><text x="997" y="655">п Сосница, население:9</text><text x="1004" y="675">п Косицы, население:483</text><text x="964" y="695">с Хинель, население:218</text></g><g font-size="11" font-style="italic" fill="#222"><text x="824" y="326">Троснянское сельское поселение</text><text x="944" y="366">Брянский район</text><text x="943" y="379">Советский район</text><text x="1022" y="414">Карачевский район</text><text x="992" y="482">Навля</text><text x="925" y="607">Суземка</text><text x="620" y="614">Климовский район</text><text x="620" y="506">Климовский район</text><text x="722" y="416">Жирятинский район</text><text x="717" y="370">Дубровка</text><text x="895" y="445">Почеп</text></g><g><use href="#c" x="1020.0" y="544.5"/><use href="#c" x="635.2" y="456.4"/><use href="#c" x="814.5" y="417.0"/><use href="#c" x="792.1" y="338.9"/><use href="#c" x="822.7" y="537.2"/><use href="#c" x="777.0" y="587.5"/><use href="#c" x="673.0" y="570.4"/><use href="#c" x="642.2" y="562.8"/><use href="#c" x="974.7" y="367.9"/><use href="#c" x="783.0" y="440.2"/><use href="#c" x="766.9" y="580.3"/><use href="#c" x="583.2" y="570.3"/><use href="#c" x="817.0" y="353.5"/><use href="#c" x="845.3" y="440.2"/><use href="#c" x="729.4" y="405.0"/><use href="#c" x="953.6" y="592.0"/><use href="#c" x="864.4" y="293.0"/><use href="#c" x="871.3" y="541.3"/><use href="#c" x="868.8" y="470.5"/><use href="#c" x="817.2" y="488.4"/><use href="#c" x="578.0" y="520.2"/><use href="#c" x="808.4" y="523.2"/><use href="#c" x="635.1" y="629.8"/><use href="#c" x="580.4" y="408.0"/><use href="#c" x="989.5" y="283.4"/><use href="#c" x="992.0" y="668.3"/><use href="#c" x="682.9" y="523.3"/><use href="#c" x="990.1" y="486.2"/><use href="#c" x="981.9" y="542.4"/><use href="#c" x="821.1" y="547.4"/><use href="#c" x="784.7" y="399.1"/><use href="#c" x="776.1" y="507.0"/><use href="#c" x="859.0" y="191.5"/><use href="#c" x="744.5" y="598.3"/><use href="#c" x="568.0" y="404.0"/><use href="#c" x="791.1" y="480.7"/><use href="#c" x="630.4" y="509.9"/><use href="#c" x="639.1" y="521.8"/><use href="#c" x="712.2" y="370.5"/><use href="#c" x="679.2" y="584.2"/><use href="#c" x="679.6" y="448.6"/><use href="#c" x="913.9" y="277.5"/><use href="#c" x="689.1" y="495.8"/><use href="#c" x="728.8" y="609.2"/><use href="#c" x="888.4" y="274.6"/><use href="#c" x="857.7" y="287.5"/><use href="#c" x="887.2" y="287.9"/><use href="#c" x="878.4" y="275.6"/><use href="#c" x="984.3" y="347.3"/><use href="#c" x="645.0" y="565.8"/><use href="#c" x="1012.4" y="460.2"/><use href="#c" x="704.3" y="511.6"/><use href="#c" x="987.7" y="322.5"/><use href="#c" x="883.2" y="232.4"/><use href="#c" x="832.3" y="405.1"/><use href="#c" x="1091.7" y="406.2"/><use href="#c" x="704.4" y="545.4"/><use href="#c" x="774.3" y="565.8"/><use href="#c" x="644.6" y="568.0"/><use href="#c" x="608.1" y="404.5"/><use href="#c" x="859.0" y="411.3"/><use href="#c" x="972.4" y="645.8"/><use href="#c" x="705.5" y="409.0"/><use href="#c" x="672.5" y="559.4"/><use href="#c" x="999.6" y="634.3"/><use href="#c" x="756.8" y="584.1"/><use href="#c" x="640.3" y="440.5"/><use href="#c" x="776.7" y="471.0"/><use href="#c" x="1046.5" y="379.8"/><use href="#c" x="839.9" y="533.5"/><use href="#c" x="847.2" y="251.0"/><use href="#c" x="943.2" y="443.5"/><use href="#c" x="1088.5" y="383.0"/><use href="#c" x="685.2" y="506.7"/><use href="#c" x="885.4" y="339.8"/><use href="#c" x="723.9" y="591.5"/><use href="#c" x="875.0" y="180.9"/><use href="#c" x="894.5" y="530.8"/><use href="#c" x="1032.0" y="407.7"/><use href="#c" x="1003.6" y="300.4"/><use href="#c" x="894.6" y="319.6"/><use href="#c" x="726.5" y="582.9"/><use href="#c" x="944.7" y="532.4"/><use href="#c" x="822.7" y="524.6"/><use href="#c" x="829.7" y="582.2"/><use href="#c" x="885.1" y="459.5"/><use href="#c" x="967.2" y="689.1"/><use href="#c" x="1042.5" y="404.8"/><use href="#c" x="1027.0" y="622.5"/><use href="#c" x="797.0" y="340.6"/><use href="#c" x="1109.3" y="395.3"/><use href="#c" x="933.0" y="415.7"/><use href="#c" x="901.8" y="336.3"/><use href="#c" x="881.5" y="388.4"/><use href="#c" x="975.3" y="631.1"/><use href="#c" x="994.3" y="631.5"/><use href="#c" x="855.7" y="526.7"/><use href="#c" x="931.3" y="373.1"/><use href="#c" x="1043.6" y="396.8"/><use href="#c" x="905.5" y="425.0"/><use href="#c" x="1005.0" y="390.9"/><use href="#c" x="753.1" y="518.5"/><use href="#c" x="726.6" y="510.1"/><use href="#c" x="569.9" y="422.5"/><use href="#c" x="905.2" y="319.5"/><use href="#c" x="753.2" y="368.0"/><use href="#c" x="1066.4" y="529.3"/><use href="#c" x="955.4" y="608.2"/><use href="#c" x="816.5" y="430.8"/><use href="#c" x="596.5" y="454.7"/><use href="#c" x="794.0" y="456.3"/><use href="#c" x="766.6" y="608.3"/><use href="#c" x="735.6" y="415.2"/><use href="#c" x="715.2" y="447.6"/><use href="#c" x="789.7" y="547.9"/><use href="#c" x="1052.0" y="400.3"/><use href="#c" x="667.6" y="563.9"/><use href="#c" x="1039.3" y="379.6"/><use href="#c" x="1054.2" y="583.3"/><use href="#c" x="700.9" y="579.8"/><use href="#c" x="655.4" y="488.6"/><use href="#c" x="641.5" y="544.5"/><use href="#c" x="781.9" y="519.3"/><use href="#c" x="778.7" y="552.9"/><use href="#c" x="736.7" y="420.1"/><use href="#c" x="1086.2" y="428.5"/><use href="#c" x="1007.9" y="540.3"/><use href="#c" x="1001.6" y="543.1"/><use href="#c" x="674.5" y="440.3"/><use href="#c" x="807.7" y="400.7"/><use href="#c" x="676.5" y="632.4"/><use href="#c" x="879.8" y="583.7"/><use href="#c" x="807.7" y="546.8"/><use href="#c" x="1097.6" y="405.6"/><use href="#c" x="875.7" y="548.0"/><use href="#c" x="1045.6" y="402.5"/><use href="#c" x="884.6" y="328.9"/><use href="#c" x="707.8" y="414.9"/><use href="#c" x="743.6" y="587.3"/><use href="#c" x="571.9" y="457.4"/><use href="#c" x="991.3" y="616.0"/><use href="#c" x="831.7" y="445.4"/><use href="#c" x="1049.7" y="436.7"/><use href="#c" x="763.5" y="378.6"/><use href="#c" x="685.3" y="476.4"/><use href="#c" x="911.1" y="562.4"/><use href="#c" x="975.8" y="650.1"/><use href="#c" x="848.3" y="561.5"/><use href="#c" x="892.1" y="527.7"/><use href="#c" x="586.8" y="471.8"/><use href="#c" x="648.5" y="597.3"/><use href="#c" x="583.1" y="511.2"/><use href="#c" x="865.2" y="583.3"/><use href="#c" x="892.7" y="208.7"/><use href="#c" x="667.5" y="624.3"/><use href="#c" x="747.4" y="470.0"/><use href="#c" x="718.5" y="530.2"/><use href="#c" x="875.9" y="381.7"/><use href="#c" x="706.6" y="429.8"/><use href="#c" x="703.4" y="432.7"/><use href="#c" x="877.2" y="324.8"/><use href="#c" x="820.6" y="409.7"/><use href="#c" x="622.1" y="559.7"/><use href="#c" x="597.4" y="600.8"/><use href="#c" x="699.3" y="444.0"/><use href="#c" x="864.2" y="589.9"/><use href="#c" x="888.6" y="273.7"/><use href="#c" x="724.5" y="373.3"/><use href="#c" x="848.8" y="503.0"/><use href="#c" x="749.5" y="609.9"/><use href="#c" x="871.4" y="215.8"/><use href="#c" x="1048.6" y="539.2"/><use href="#c" x="843.5" y="528.5"/><use href="#c" x="964.4" y="429.0"/><use href="#c" x="651.3" y="565.7"/><use href="#c" x="808.4" y="515.2"/><use href="#c" x="838.0" y="433.5"/><use href="#c" x="862.1" y="586.5"/><use href="#c" x="1062.7" y="583.4"/><use href="#c" x="683.0" y="526.4"/><use href="#c" x="757.7" y="435.0"/><use href="#c" x="825.1" y="564.7"/><use href="#c" x="723.6" y="592.0"/><use href="#c" x="594.3" y="609.1"/><use href="#c" x="778.8" y="470.6"/><use href="#c" x="604.3" y="641.5"/><use href="#c" x="569.5" y="422.4"/><use href="#c" x="787.8" y="390.0"/><use href="#c" x="979.5" y="652.7"/><use href="#c" x="1044.9" y="521.0"/><use href="#c" x="770.4" y="344.0"/><use href="#c" x="803.5" y="422.3"/><use href="#c" x="1097.8" y="402.7"/><use href="#c" x="886.3" y="205.6"/><use href="#c" x="996.2" y="456.6"/><use href="#c" x="748.7" y="582.8"/><use href="#c" x="739.2" y="542.7"/><use href="#c" x="683.1" y="461.4"/><use href="#c" x="890.4" y="400.3"/><use href="#c" x="708.7" y="592.9"/><use href="#c" x="619.7" y="638.1"/><use href="#c" x="721.0" y="497.5"/><use href="#c" x="745.7" y="513.7"/><use href="#c" x="816.4" y="556.0"/><use href="#c" x="913.6" y="307.4"/><use href="#c" x="784.8" y="518.6"/><use href="#c" x="632.8" y="508.8"/><use href="#c" x="825.8" y="546.7"/><use href="#c" x="761.6" y="379.4"/><use href="#c" x="694.6" y="403.2"/><use href="#c" x="603.4" y="548.7"/><use href="#c" x="898.2" y="531.3"/><use href="#c" x="891.1" y="194.5"/><use href="#c" x="1000.6" y="624.0"/><use href="#c" x="1046.9" y="389.2"/><use href="#c" x="889.7" y="507.0"/><use href="#c" x="742.5" y="429.2"/><use href="#c" x="775.6" y="544.9"/><use href="#c" x="690.9" y="557.7"/><use href="#c" x="672.4" y="599.0"/><use href="#c" x="774.6" y="502.9"/><use href="#c" x="1069.5" y="527.4"/><use href="#c" x="1044.7" y="435.5"/><use href="#c" x="821.1" y="590.0"/><use href="#c" x="845.1" y="467.3"/><use href="#c" x="907.4" y="343.8"/><use href="#c" x="793.3" y="563.9"/><use href="#c" x="651.4" y="524.2"/><use href="#c" x="862.8" y="422.2"/><use href="#c" x="665.6" y="621.0"/><use href="#c" x="687.1" y="443.6"/><use href="#c" x="1097.0" y="414.0"/><use href="#c" x="952.3" y="522.7"/><use href="#c" x="854.1" y="476.6"/><use href="#c" x="735.5" y="588.0"/><use href="#c" x="848.4" y="554.2"/><use href="#c" x="729.8" y="585.7"/><use href="#c" x="642.5" y="650.7"/><use href="#c" x="783.4" y="604.0"/><use href="#c" x="1002.3" y="665.2"/><use href="#c" x="853.7" y="480.1"/><use href="#c" x="779.0" y="403.5"/><use href="#c" x="877.6" y="482.1"/><use href="#c" x="734.6" y="407.0"/><use href="#c" x="820.2" y="495.9"/><use href="#c" x="585.3" y="491.4"/><use href="#c" x="752.7" y="523.8"/><use href="#c" x="905.1" y="212.4"/><use href="#c" x="748.6" y="377.6"/><use href="#c" x="976.7" y="362.0"/><use href="#c" x="761.1" y="476.9"/><use href="#c" x="704.5" y="461.4"/><use href="#c" x="807.0" y="560.3"/><use href="#c" x="1004.9" y="516.9"/><use href="#c" x="877.9" y="184.4"/><use href="#c" x="883.8" y="336.3"/><use href="#c" x="795.6" y="465.0"/><use href="#c" x="991.5" y="322.4"/><use href="#c" x="588.2" y="595.3"/><use href="#c" x="840.2" y="539.7"/><use href="#c" x="731.4" y="387.5"/><use href="#c" x="1032.0" y="342.8"/><use href="#c" x="1004.0" y="654.8"/><use href="#c" x="835.6" y="445.9"/><use href="#c" x="664.7" y="602.0"/><use href="#c" x="705.3" y="583.7"/><use href="#c" x="989.5" y="451.0"/><use href="#c" x="775.6" y="543.5"/><use href="#c" x="753.5" y="455.1"/><use href="#c" x="565.6" y="432.4"/><use href="#c" x="763.1" y="467.3"/><use href="#c" x="617.3" y="501.3"/><use href="#c" x="1065.1" y="397.8"/><use href="#c" x="633.2" y="625.3"/><use href="#c" x="1046.0" y="551.7"/><use href="#c" x="825.4" y="273.8"/><use href="#c" x="894.3" y="481.0"/><use href="#c" x="733.3" y="495.3"/><use href="#c" x="750.4" y="495.2"/><use href="#c" x="1061.7" y="395.5"/><use href="#c" x="764.0" y="512.0"/><use href="#c" x="966.7" y="502.3"/><use href="#c" x="707.2" y="558.3"/><use href="#c" x="771.0" y="467.4"/><use href="#c" x="688.0" y="406.4"/><use href="#c" x="781.1" y="477.0"/><use href="#c" x="850.2" y="468.8"/><use href="#c" x="912.3" y="429.2"/><use href="#c" x="897.4" y="278.1"/><use href="#c" x="891.2" y="272.7"/><use href="#c" x="1002.3" y="658.7"/><use href="#c" x="775.9" y="415.5"/><use href="#c" x="783.6" y="341.8"/><use href="#c" x="1012.1" y="658.0"/><use href="#c" x="892.0" y="322.6"/><use href="#c" x="733.4" y="521.8"/><use href="#c" x="999.1" y="647.0"/><use href="#c" x="854.2" y="537.4"/><use href="#c" x="707.6" y="557.9"/><use href="#c" x="756.5" y="388.8"/><use href="#c" x="598.5" y="405.5"/><use href="#c" x="991.4" y="626.0"/><use href="#c" x="884.6" y="298.9"/><use href="#c" x="905.0" y="339.7"/><use href="#c" x="602.3" y="449.3"/><use href="#c" x="1052.2" y="403.3"/><use href="#c" x="573.9" y="413.3"/><use href="#c" x="721.0" y="476.8"/><use href="#c" x="649.0" y="596.3"/><use href="#c" x="634.0" y="511.9"/><use href="#c" x="1040.9" y="411.2"/><use href="#c" x="667.3" y="539.8"/><use href="#c" x="592.5" y="581.7"/><use href="#c" x="888.7" y="273.1"/><use href="#c" x="931.7" y="458.7"/><use href="#c" x="864.2" y="400.3"/><use href="#c" x="769.8" y="395.9"/><use href="#c" x="1053.9" y="551.3"/><use href="#c" x="595.6" y="427.9"/><use href="#c" x="578.5" y="406.4"/><use href="#c" x="678.5" y="614.4"/><use href="#c" x="836.0" y="544.6"/><use href="#c" x="956.6" y="606.3"/><use href="#c" x="903.2" y="218.3"/><use href="#c" x="860.6" y="520.4"/><use href="#c" x="779.5" y="437.2"/><use href="#c" x="1060.6" y="595.7"/><use href="#c" x="618.2" y="636.3"/><use href="#c" x="899.9" y="441.1"/><use href="#c" x="807.5" y="585.6"/><use href="#c" x="1115.5" y="432.4"/><use href="#c" x="871.7" y="587.4"/><use href="#c" x="802.9" y="413.5"/><use href="#c" x="1059.3" y="594.8"/><use href="#c" x="919.7" y="301.8"/><use href="#c" x="852.7" y="528.2"/><use href="#c" x="841.6" y="577.4"/><use href="#c" x="1081.0" y="401.0"/><use href="#c" x="613.4" y="566.6"/><use href="#c" x="908.5" y="449.7"/><use href="#c" x="602.2" y="592.0"/><use href="#c" x="813.2" y="412.1"/><use href="#c" x="645.3" y="648.3"/><use href="#c" x="745.5" y="546.2"/><use href="#c" x="1020.7" y="594.9"/><use href="#c" x="786.6" y="540.4"/><use href="#c" x="888.9" y="548.3"/><use href="#c" x="827.1" y="411.5"/><use href="#c" x="689.2" y="444.8"/><use href="#c" x="671.8" y="577.6"/><use href="#c" x="864.1" y="352.0"/><use href="#c" x="862.4" y="565.8"/><use href="#c" x="763.0" y="567.5"/><use href="#c" x="737.9" y="604.8"/><use href="#c" x="643.2" y="634.2"/><use href="#c" x="687.9" y="483.3"/><use href="#c" x="1048.2" y="521.3"/><use href="#c" x="784.6" y="385.2"/><use href="#c" x="723.7" y="557.2"/><use href="#c" x="964.2" y="362.5"/><use href="#c" x="1070.7" y="445.0"/><use href="#c" x="844.7" y="525.0"/><use href="#c" x="772.4" y="577.9"/><use href="#c" x="907.7" y="595.1"/><use href="#c" x="652.8" y="416.1"/><use href="#c" x="727.4" y="391.5"/><use href="#c" x="881.6" y="511.1"/><use href="#c" x="1057.2" y="437.6"/><use href="#c" x="901.6" y="547.3"/><use href="#c" x="865.7" y="245.4"/><use href="#c" x="1063.2" y="383.6"/><use href="#c" x="590.8" y="586.2"/><use href="#c" x="721.5" y="585.9"/><use href="#c" x="725.1" y="519.2"/><use href="#c" x="1011.1" y="370.5"/><use href="#c" x="832.2" y="267.7"/><use href="#c" x="987.8" y="341.9"/><use href="#c" x="1009.5" y="340.5"/><use href="#c" x="709.9" y="512.2"/><use href="#c" x="685.4" y="464.2"/><use href="#c" x="936.7" y="421.7"/><use href="#c" x="603.0" y="582.5"/><use href="#c" x="557.2" y="414.8"/><use href="#c" x="861.2" y="514.1"/><use href="#c" x="815.3" y="499.2"/><use href="#c" x="1003.5" y="660.0"/><use href="#c" x="589.8" y="463.6"/><use href="#c" x="616.6" y="613.4"/><use href="#c" x="722.2" y="511.7"/><use href="#c" x="711.5" y="540.6"/><use href="#c" x="1002.5" y="637.5"/><use href="#c" x="553.8" y="426.8"/><use href="#c" x="651.4" y="650.7"/><use href="#c" x="812.8" y="445.7"/><use href="#c" x="910.2" y="335.8"/><use href="#c" x="622.5" y="654.1"/><use href="#c" x="813.4" y="450.7"/><use href="#c" x="833.5" y="425.6"/><use href="#c" x="782.4" y="517.3"/><use href="#c" x="591.4" y="393.2"/><use href="#c" x="1057.3" y="532.4"/><use href="#c" x="723.0" y="581.9"/><use href="#c" x="747.9" y="545.1"/><use href="#c" x="788.1" y="554.9"/><use href="#c" x="843.2" y="505.7"/><use href="#c" x="984.2" y="499.5"/><use href="#c" x="688.0" y="448.1"/><use href="#c" x="725.5" y="503.4"/><use href="#c" x="844.5" y="563.6"/><use href="#c" x="613.0" y="417.9"/><use href="#c" x="1064.8" y="411.4"/><use href="#c" x="872.8" y="347.9"/><use href="#c" x="708.0" y="551.1"/><use href="#c" x="887.4" y="301.2"/><use href="#c" x="614.3" y="538.9"/><use href="#c" x="769.9" y="396.3"/><use href="#c" x="969.9" y="380.8"/><use href="#c" x="834.1" y="432.8"/><use href="#c" x="884.4" y="342.9"/><use href="#c" x="654.6" y="418.9"/><use href="#c" x="603.0" y="540.1"/><use href="#c" x="797.5" y="564.8"/><use href="#c" x="779.7" y="577.8"/><use href="#c" x="880.2" y="207.7"/><use href="#c" x="767.7" y="445.7"/><use href="#c" x="883.2" y="332.6"/><use href="#c" x="645.9" y="492.0"/><use href="#c" x="712.7" y="380.6"/><use href="#c" x="641.5" y="540.5"/><use href="#c" x="588.7" y="397.6"/><use href="#c" x="875.5" y="208.9"/><use href="#c" x="834.3" y="414.0"/><use href="#c" x="843.1" y="492.9"/><use href="#c" x="619.8" y="638.2"/><use href="#c" x="820.3" y="440.9"/><use href="#c" x="763.2" y="587.9"/><use href="#c" x="720.7" y="424.0"/><use href="#c" x="574.0" y="434.3"/><use href="#c" x="749.2" y="526.5"/><use href="#c" x="1085.9" y="382.8"/><use href="#c" x="796.8" y="376.7"/><use href="#c" x="619.5" y="645.6"/><use href="#c" x="1116.1" y="404.1"/><use href="#c" x="1042.6" y="534.8"/><use href="#c" x="823.2" y="437.1"/><use href="#c" x="1021.9" y="363.1"/><use href="#c" x="797.4" y="470.6"/><use href="#c" x="782.6" y="478.8"/><use href="#c" x="691.0" y="449.8"/><use href="#c" x="861.8" y="530.7"/><use href="#c" x="814.7" y="536.8"/><use href="#c" x="701.4" y="432.0"/><use href="#c" x="878.6" y="317.8"/><use href="#c" x="883.6" y="308.5"/><use href="#c" x="860.0" y="346.9"/><use href="#c" x="883.7" y="588.0"/><use href="#c" x="584.8" y="560.3"/><use href="#c" x="1015.2" y="557.5"/><use href="#c" x="786.9" y="511.9"/><use href="#c" x="884.1" y="440.2"/><use href="#c" x="1085.2" y="421.8"/><use href="#c" x="1048.9" y="454.0"/><use href="#c" x="804.1" y="535.0"/><use href="#c" x="666.2" y="482.4"/><use href="#c" x="596.8" y="586.3"/><use href="#c" x="605.0" y="584.1"/><use href="#c" x="722.1" y="409.5"/><use href="#c" x="824.3" y="536.8"/><use href="#c" x="851.0" y="574.8"/><use href="#c" x="896.9" y="531.8"/><use href="#c" x="834.3" y="460.8"/><use href="#c" x="760.3" y="588.3"/><use href="#c" x="733.9" y="524.7"/><use href="#c" x="982.5" y="548.0"/><use href="#c" x="592.4" y="437.8"/><use href="#c" x="549.2" y="415.5"/><use href="#c" x="990.1" y="346.9"/><use href="#c" x="632.6" y="538.9"/><use href="#c" x="772.7" y="483.6"/><use href="#c" x="962.7" y="526.5"/><use href="#c" x="614.2" y="526.9"/><use href="#c" x="852.2" y="584.8"/><use href="#c" x="907.2" y="350.2"/><use href="#c" x="1023.4" y="453.6"/><use href="#c" x="742.4" y="551.6"/><use href="#c" x="752.8" y="527.2"/><use href="#c" x="952.1" y="675.0"/><use href="#c" x="638.5" y="477.1"/><use href="#c" x="953.1" y="607.6"/><use href="#c" x="860.6" y="589.0"/><use href="#c" x="616.9" y="432.6"/><use href="#c" x="1055.2" y="389.9"/><use href="#c" x="937.6" y="451.2"/><use href="#c" x="1081.6" y="375.5"/><use href="#c" x="644.6" y="644.6"/><use href="#c" x="818.4" y="421.0"/><use href="#c" x="703.1" y="384.1"/><use href="#c" x="915.3" y="595.0"/><use href="#c" x="996.1" y="322.3"/><use href="#c" x="939.8" y="313.8"/><use href="#c" x="742.1" y="449.5"/><use href="#c" x="577.9" y="416.7"/><use href="#c" x="792.4" y="333.1"/><use href="#c" x="898.2" y="290.7"/><use href="#c" x="885.7" y="198.8"/><use href="#c" x="854.5" y="584.6"/><use href="#c" x="1093.6" y="407.3"/><use href="#c" x="819.1" y="555.7"/><use href="#c" x="579.0" y="585.5"/><use href="#c" x="1003.0" y="651.6"/><use href="#c" x="611.7" y="625.8"/><use href="#c" x="803.6" y="571.7"/><use href="#c" x="762.5" y="562.4"/><use href="#c" x="934.1" y="429.2"/><use href="#c" x="983.2" y="517.1"/><use href="#c" x="1048.5" y="388.8"/><use href="#c" x="919.2" y="331.5"/><use href="#c" x="665.0" y="430.2"/><use href="#c" x="845.6" y="361.4"/><use href="#c" x="611.8" y="440.8"/><use href="#c" x="835.2" y="466.5"/><use href="#c" x="971.9" y="674.9"/><use href="#c" x="864.6" y="474.9"/><use href="#c" x="625.7" y="412.2"/><use href="#c" x="884.6" y="278.2"/><use href="#c" x="871.9" y="517.0"/><use href="#c" x="688.7" y="454.7"/><use href="#c" x="1032.2" y="419.4"/><use href="#c" x="574.8" y="388.6"/><use href="#c" x="935.5" y="453.9"/><use href="#c" x="822.7" y="586.7"/><use href="#c" x="849.6" y="582.4"/><use href="#c" x="977.2" y="605.4"/><use href="#c" x="823.6" y="456.4"/><use href="#c" x="761.6" y="456.4"/><use href="#c" x="895.1" y="269.5"/><use href="#c" x="1099.0" y="383.4"/><use href="#c" x="614.0" y="458.9"/><use href="#c" x="926.4" y="371.4"/><use href="#c" x="801.2" y="552.6"/><use href="#c" x="984.8" y="271.1"/><use href="#c" x="987.5" y="492.7"/><use href="#c" x="774.3" y="559.2"/><use href="#c" x="795.0" y="523.3"/><use href="#c" x="694.6" y="413.8"/><use href="#c" x="733.1" y="541.0"/><use href="#c" x="836.8" y="559.0"/><use href="#c" x="740.4" y="446.7"/><use href="#c" x="909.4" y="320.8"/><use href="#c" x="755.2" y="594.6"/><use href="#c" x="836.5" y="575.6"/><use href="#c" x="757.6" y="574.6"/><use href="#c" x="1103.3" y="403.9"/><use href="#c" x="872.0" y="590.5"/><use href="#c" x="881.0" y="524.4"/><use href="#c" x="709.3" y="512.6"/><use href="#c" x="917.8" y="594.2"/><use href="#c" x="692.7" y="449.8"/><use href="#c" x="749.4" y="566.3"/><use href="#c" x="738.9" y="583.2"/><use href="#c" x="746.8" y="510.1"/><use href="#c" x="868.2" y="544.5"/><use href="#c" x="843.8" y="404.5"/><use href="#c" x="896.8" y="287.7"/><use href="#c" x="813.6" y="418.7"/><use href="#c" x="850.0" y="207.4"/><use href="#c" x="1075.6" y="421.4"/><use href="#c" x="848.0" y="435.7"/><use href="#c" x="693.6" y="435.3"/><use href="#c" x="1118.9" y="424.3"/><use href="#c" x="1104.1" y="404.5"/><use href="#c" x="621.7" y="638.4"/><use href="#c" x="1112.8" y="422.6"/><use href="#c" x="710.3" y="579.7"/><use href="#c" x="683.1" y="466.6"/><use href="#c" x="672.1" y="619.1"/><use href="#c" x="968.2" y="426.4"/><use href="#c" x="994.7" y="359.1"/><use href="#c" x="671.8" y="641.5"/><use href="#c" x="845.9" y="557.2"/><use href="#c" x="779.8" y="448.4"/><use href="#c" x="1039.8" y="613.1"/><use href="#c" x="872.6" y="580.8"/><use href="#c" x="897.0" y="326.9"/><use href="#c" x="813.0" y="527.8"/><use href="#c" x="666.8" y="512.8"/><use href="#c" x="894.4" y="471.0"/><use href="#c" x="553.9" y="402.5"/><use href="#c" x="616.7" y="513.5"/><use href="#c" x="595.2" y="403.4"/><use href="#c" x="696.1" y="509.8"/><use href="#c" x="713.0" y="566.5"/><use href="#c" x="1117.9" y="405.3"/><use href="#c" x="980.7" y="528.9"/><use href="#c" x="955.3" y="526.1"/><use href="#c" x="850.0" y="577.8"/><use href="#c" x="624.3" y="613.4"/><use href="#c" x="1054.8" y="415.6"/><use href="#c" x="805.0" y="594.3"/><use href="#c" x="704.1" y="588.9"/><use href="#c" x="1011.0" y="391.3"/><use href="#c" x="721.4" y="365.5"/><use href="#c" x="834.6" y="547.3"/><use href="#c" x="1065.6" y="434.2"/><use href="#c" x="847.2" y="508.4"/><use href="#c" x="847.8" y="478.9"/><use href="#c" x="938.2" y="595.4"/><use href="#c" x="821.1" y="537.2"/><use href="#c" x="694.2" y="501.0"/><use href="#c" x="621.5" y="422.4"/><use href="#c" x="760.7" y="405.4"/><use href="#c" x="850.1" y="538.5"/><use href="#c" x="922.8" y="351.8"/><use href="#c" x="1055.1" y="559.9"/><use href="#c" x="914.3" y="594.2"/><use href="#c" x="675.8" y="554.6"/><use href="#c" x="685.9" y="551.3"/><use href="#c" x="621.5" y="430.2"/><use href="#c" x="644.0" y="642.4"/><use href="#c" x="911.1" y="276.8"/><use href="#c" x="887.6" y="377.6"/><use href="#c" x="1050.3" y="419.4"/><use href="#c" x="846.6" y="406.2"/><use href="#c" x="850.8" y="467.3"/><use href="#c" x="984.8" y="667.7"/><use href="#c" x="873.6" y="334.6"/><use href="#c" x="883.1" y="507.4"/><use href="#c" x="574.0" y="431.0"/><use href="#c" x="853.8" y="428.5"/><use href="#c" x="615.3" y="453.1"/><use href="#c" x="626.6" y="649.2"/><use href="#c" x="1034.7" y="393.7"/><use href="#c" x="701.8" y="560.6"/><use href="#c" x="841.9" y="504.2"/><use href="#c" x="1016.0" y="413.4"/><use href="#c" x="881.5" y="461.2"/><use href="#c" x="854.2" y="554.2"/><use href="#c" x="679.0" y="427.8"/><use href="#c" x="637.8" y="638.2"/><use href="#c" x="753.6" y="572.4"/><use href="#c" x="691.5" y="617.7"/><use href="#c" x="754.4" y="579.5"/><use href="#c" x="853.2" y="575.0"/><use href="#c" x="614.6" y="419.2"/><use href="#c" x="681.7" y="551.2"/><use href="#c" x="845.8" y="463.2"/><use href="#c" x="691.4" y="566.1"/><use href="#c" x="851.9" y="500.4"/><use href="#c" x="566.1" y="415.9"/><use href="#c" x="1024.1" y="396.7"/><use href="#c" x="658.3" y="550.6"/><use href="#c" x="756.0" y="511.4"/><use href="#c" x="680.7" y="572.5"/><use href="#c" x="1018.0" y="599.7"/><use href="#c" x="693.6" y="448.4"/><use href="#c" x="804.3" y="549.2"/><use href="#c" x="856.6" y="450.9"/><use href="#c" x="739.8" y="405.9"/><use href="#c" x="853.4" y="489.8"/><use href="#c" x="725.3" y="539.0"/><use href="#c" x="621.7" y="503.8"/><use href="#c" x="1029.8" y="382.9"/><use href="#c" x="720.6" y="529.0"/><use href="#c" x="1024.5" y="445.1"/><use href="#c" x="558.5" y="431.5"/><use href="#c" x="789.1" y="554.8"/><use href="#c" x="991.2" y="313.2"/><use href="#c" x="907.8" y="412.0"/><use href="#c" x="850.9" y="486.9"/><use href="#c" x="1047.2" y="482.6"/><use href="#c" x="785.2" y="507.4"/><use href="#c" x="865.5" y="206.6"/><use href="#c" x="799.8" y="464.7"/><use href="#c" x="809.5" y="407.0"/><use href="#c" x="890.8" y="329.2"/><use href="#c" x="664.5" y="613.1"/><use href="#c" x="900.9" y="251.6"/><use href="#c" x="829.7" y="507.4"/><use href="#c" x="730.5" y="543.5"/><use href="#c" x="1008.9" y="542.1"/><use href="#c" x="830.2" y="453.3"/><use href="#c" x="840.3" y="530.1"/><use href="#c" x="1078.8" y="427.6"/><use href="#c" x="1029.1" y="398.6"/><use href="#c" x="811.8" y="432.7"/><use href="#c" x="879.4" y="483.2"/><use href="#c" x="568.7" y="385.3"/><use href="#c" x="866.3" y="321.0"/><use href="#c" x="722.9" y="394.4"/><use href="#c" x="626.0" y="431.3"/><use href="#c" x="770.8" y="460.4"/><use href="#c" x="715.4" y="373.2"/><use href="#c" x="896.4" y="395.5"/><use href="#c" x="900.3" y="302.4"/><use href="#c" x="850.9" y="438.2"/><use href="#c" x="805.2" y="555.8"/><use href="#c" x="881.4" y="212.4"/><use href="#c" x="760.8" y="585.0"/><use href="#c" x="900.5" y="315.9"/><use href="#c" x="574.4" y="513.7"/><use href="#c" x="805.8" y="487.8"/><use href="#c" x="681.5" y="554.8"/><use href="#c" x="979.7" y="522.4"/><use href="#c" x="853.1" y="197.1"/><use href="#c" x="879.0" y="496.1"/><use href="#c" x="822.3" y="507.7"/><use href="#c" x="604.2" y="591.4"/><use href="#c" x="766.8" y="371.9"/><use href="#c" x="1074.9" y="384.1"/><use href="#c" x="686.3" y="535.6"/><use href="#c" x="988.7" y="656.6"/><use href="#c" x="562.5" y="384.8"/><use href="#c" x="1117.4" y="421.0"/><use href="#c" x="780.5" y="554.5"/><use href="#c" x="863.6" y="368.6"/><use href="#c" x="610.8" y="624.6"/><use href="#c" x="1041.2" y="449.6"/><use href="#c" x="875.7" y="388.2"/><use href="#c" x="989.8" y="264.4"/><use href="#c" x="889.2" y="288.9"/><use href="#c" x="1049.6" y="527.6"/><use href="#c" x="898.1" y="450.7"/><use href="#c" x="860.4" y="474.9"/><use href="#c" x="912.4" y="279.2"/><use href="#c" x="829.6" y="316.1"/><use href="#c" x="873.3" y="306.3"/><use href="#c" x="835.8" y="519.2"/><use href="#c" x="1033.7" y="553.4"/><use href="#c" x="822.6" y="492.6"/><use href="#c" x="851.9" y="200.1"/><use href="#c" x="835.3" y="403.5"/><use href="#c" x="875.8" y="194.3"/><use href="#c" x="679.4" y="646.3"/><use href="#c" x="643.3" y="583.6"/><use href="#c" x="731.6" y="432.0"/><use href="#c" x="1012.3" y="652.5"/><use href="#c" x="1004.8" y="607.7"/><use href="#c" x="815.3" y="476.7"/><use href="#c" x="1056.0" y="587.0"/><use href="#c" x="803.1" y="463.9"/><use href="#c" x="901.2" y="297.8"/><use href="#c" x="821.7" y="529.5"/><use href="#c" x="786.8" y="590.4"/><use href="#c" x="762.0" y="394.9"/><use href="#c" x="846.5" y="482.0"/><use href="#c" x="755.3" y="420.2"/><use href="#c" x="588.3" y="448.6"/><use href="#c" x="1064.9" y="444.8"/><use href="#c" x="680.7" y="541.9"/><use href="#c" x="789.8" y="527.6"/><use href="#c" x="955.4" y="650.6"/><use href="#c" x="728.2" y="542.7"/><use href="#c" x="874.5" y="495.4"/><use href="#c" x="803.7" y="524.1"/><use href="#c" x="1053.7" y="558.4"/><use href="#c" x="842.5" y="450.2"/><use href="#c" x="1035.3" y="561.0"/><use href="#c" x="720.8" y="502.7"/><use href="#c" x="694.7" y="445.2"/><use href="#c" x="758.1" y="495.9"/><use href="#c" x="769.8" y="467.5"/><use href="#c" x="726.0" y="427.1"/><use href="#c" x="894.9" y="318.4"/><use href="#c" x="987.9" y="362.2"/><use href="#c" x="606.6" y="511.3"/><use href="#c" x="660.1" y="531.0"/><use href="#c" x="807.0" y="478.1"/><use href="#c" x="853.4" y="480.3"/><use href="#c" x="728.1" y="593.1"/><use href="#c" x="879.9" y="539.2"/><use href="#c" x="805.2" y="486.4"/><use href="#c" x="741.3" y="603.3"/><use href="#c" x="844.5" y="503.0"/><use href="#c" x="872.5" y="467.3"/><use href="#c" x="896.3" y="546.7"/><use href="#c" x="846.3" y="583.2"/><use href="#c" x="977.3" y="535.9"/><use href="#c" x="784.0" y="406.6"/><use href="#c" x="796.8" y="577.8"/><use href="#c" x="1045.3" y="402.8"/><use href="#c" x="1043.5" y="414.3"/><use href="#c" x="1009.3" y="537.0"/><use href="#c" x="745.1" y="485.0"/><use href="#c" x="661.8" y="460.8"/><use href="#c" x="880.4" y="357.7"/><use href="#c" x="766.6" y="517.7"/><use href="#c" x="772.0" y="503.6"/><use href="#c" x="813.7" y="436.4"/><use href="#c" x="809.1" y="540.9"/><use href="#c" x="877.8" y="344.1"/><use href="#c" x="904.0" y="452.5"/><use href="#c" x="799.9" y="484.7"/><use href="#c" x="918.5" y="308.6"/><use href="#c" x="1077.6" y="444.4"/><use href="#c" x="776.2" y="544.4"/><use href="#c" x="917.6" y="592.4"/><use href="#c" x="714.3" y="367.4"/><use href="#c" x="582.3" y="521.7"/><use href="#c" x="1017.6" y="551.4"/><use href="#c" x="607.1" y="479.7"/><use href="#c" x="883.7" y="341.7"/><use href="#c" x="878.6" y="521.7"/><use href="#c" x="753.2" y="427.4"/><use href="#c" x="788.1" y="580.0"/><use href="#c" x="787.3" y="427.9"/><use href="#c" x="850.8" y="553.6"/><use href="#c" x="866.1" y="518.4"/><use href="#c" x="724.5" y="596.5"/><use href="#c" x="997.7" y="289.8"/><use href="#c" x="805.3" y="576.9"/><use href="#c" x="1026.5" y="447.0"/><use href="#c" x="612.4" y="458.7"/><use href="#c" x="1068.3" y="545.6"/><use href="#c" x="886.1" y="522.5"/><use href="#c" x="594.9" y="628.7"/><use href="#c" x="723.1" y="596.0"/><use href="#c" x="881.3" y="458.0"/><use href="#c" x="790.3" y="501.0"/><use href="#c" x="1022.5" y="444.3"/><use href="#c" x="1023.8" y="493.6"/><use href="#c" x="981.2" y="540.4"/><use href="#c" x="589.1" y="540.8"/><use href="#c" x="1030.2" y="450.5"/><use href="#c" x="706.7" y="574.2"/><use href="#c" x="716.4" y="409.3"/><use href="#c" x="874.7" y="180.9"/><use href="#c" x="853.6" y="250.4"/><use href="#c" x="839.0" y="409.9"/><use href="#c" x="897.3" y="287.9"/><use href="#c" x="752.3" y="476.2"/><use href="#c" x="843.4" y="433.9"/><use href="#c" x="726.9" y="512.3"/><use href="#c" x="734.9" y="410.8"/><use href="#c" x="903.3" y="547.6"/><use href="#c" x="573.0" y="415.8"/><use href="#c" x="860.9" y="578.8"/><use href="#c" x="605.3" y="601.5"/><use href="#c" x="1008.2" y="660.0"/><use href="#c" x="610.9" y="484.9"/><use href="#c" x="1056.7" y="552.6"/><use href="#c" x="835.7" y="564.3"/><use href="#c" x="942.0" y="622.6"/><use href="#c" x="771.3" y="444.5"/><use href="#c" x="567.2" y="418.6"/><use href="#c" x="1081.1" y="432.7"/><use href="#c" x="944.5" y="406.5"/><use href="#c" x="1063.7" y="612.1"/><use href="#c" x="1073.8" y="440.4"/><use href="#c" x="648.2" y="540.3"/><use href="#c" x="855.2" y="535.5"/><use href="#c" x="1021.0" y="419.8"/><use href="#c" x="1083.9" y="421.7"/><use href="#c" x="701.0" y="516.5"/><use href="#c" x="746.3" y="485.5"/><use href="#c" x="983.2" y="659.2"/><use href="#c" x="884.8" y="204.1"/><use href="#c" x="707.5" y="588.2"/><use href="#c" x="889.6" y="300.5"/><use href="#c" x="604.8" y="492.8"/><use href="#c" x="889.9" y="286.4"/><use href="#c" x="853.6" y="432.5"/><use href="#c" x="917.7" y="301.9"/><use href="#c" x="884.9" y="322.7"/><use href="#c" x="934.4" y="246.9"/><use href="#c" x="825.8" y="487.2"/><use href="#c" x="872.9" y="503.9"/><use href="#c" x="1050.6" y="486.3"/><use href="#c" x="806.1" y="567.4"/><use href="#c" x="864.2" y="524.1"/><use href="#c" x="748.6" y="587.5"/><use href="#c" x="873.8" y="320.6"/><use href="#c" x="658.0" y="430.4"/><use href="#c" x="930.2" y="444.7"/><use href="#c" x="794.0" y="356.4"/><use href="#c" x="622.8" y="517.1"/><use href="#c" x="744.8" y="386.7"/><use href="#c" x="755.8" y="521.3"/><use href="#c" x="712.9" y="515.1"/><use href="#c" x="995.9" y="296.0"/><use href="#c" x="754.5" y="523.3"/><use href="#c" x="731.2" y="362.4"/><use href="#c" x="779.1" y="601.6"/><use href="#c" x="800.8" y="513.9"/><use href="#c" x="648.2" y="568.5"/><use href="#c" x="848.2" y="475.2"/><use href="#c" x="1008.7" y="310.9"/><use href="#c" x="732.3" y="422.0"/><use href="#c" x="1042.1" y="400.3"/><use href="#c" x="737.4" y="556.4"/><use href="#c" x="822.2" y="482.9"/><use href="#c" x="992.4" y="509.1"/><use href="#c" x="955.2" y="543.3"/><use href="#c" x="872.7" y="413.7"/><use href="#c" x="665.4" y="595.5"/><use href="#c" x="1064.8" y="397.8"/><use href="#c" x="859.0" y="540.4"/><use href="#c" x="1010.7" y="502.5"/><use href="#c" x="868.5" y="529.1"/><use href="#c" x="587.3" y="421.9"/><use href="#c" x="890.9" y="323.7"/><use href="#c" x="840.8" y="567.5"/><use href="#c" x="1065.4" y="563.8"/><use href="#c" x="1055.5" y="566.2"/><use href="#c" x="786.6" y="425.8"/><use href="#c" x="712.5" y="398.1"/><use href="#c" x="1089.8" y="370.0"/><use href="#c" x="705.0" y="555.2"/><use href="#c" x="778.5" y="368.6"/><use href="#c" x="896.1" y="575.1"/><use href="#c" x="702.2" y="579.7"/><use href="#c" x="643.5" y="566.7"/><use href="#c" x="755.5" y="384.9"/><use href="#c" x="894.7" y="576.5"/><use href="#c" x="997.9" y="445.6"/><use href="#c" x="969.7" y="364.8"/><use href="#c" x="753.4" y="543.5"/><use href="#c" x="637.3" y="648.1"/><use href="#c" x="616.2" y="501.0"/><use href="#c" x="887.1" y="401.6"/><use href="#c" x="794.1" y="591.0"/><use href="#c" x="647.1" y="534.8"/><use href="#c" x="841.6" y="546.3"/><use href="#c" x="875.4" y="219.2"/><use href="#c" x="866.1" y="483.4"/><use href="#c" x="665.6" y="531.9"/><use href="#c" x="739.0" y="434.2"/><use href="#c" x="848.6" y="456.7"/><use href="#c" x="827.4" y="558.7"/><use href="#c" x="853.3" y="382.8"/><use href="#c" x="1011.8" y="544.3"/><use href="#c" x="879.5" y="212.7"/><use href="#c" x="710.2" y="490.8"/><use href="#c" x="759.4" y="541.5"/><use href="#c" x="691.5" y="601.3"/><use href="#c" x="1021.5" y="404.6"/><use href="#c" x="680.8" y="492.0"/><use href="#c" x="668.3" y="533.8"/><use href="#c" x="701.3" y="511.9"/><use href="#c" x="792.0" y="585.3"/><use href="#c" x="903.6" y="434.5"/><use href="#c" x="619.7" y="502.5"/><use href="#c" x="839.2" y="209.6"/><use href="#c" x="770.0" y="550.0"/><use href="#c" x="891.7" y="339.4"/><use href="#c" x="766.7" y="415.9"/><use href="#c" x="834.1" y="568.6"/><use href="#c" x="1046.7" y="522.7"/><use href="#c" x="1032.5" y="346.3"/><use href="#c" x="842.2" y="421.8"/><use href="#c" x="624.5" y="528.4"/><use href="#c" x="858.2" y="407.6"/><use href="#c" x="978.7" y="664.7"/><use href="#c" x="890.7" y="467.8"/><use href="#c" x="996.6" y="629.6"/><use href="#c" x="582.0" y="417.3"/><use href="#c" x="936.4" y="351.0"/><use href="#c" x="742.5" y="410.0"/><use href="#c" x="894.1" y="417.2"/><use href="#c" x="819.5" y="588.1"/><use href="#c" x="630.7" y="653.2"/><use href="#c" x="929.6" y="341.8"/><use href="#c" x="879.2" y="471.7"/><use href="#c" x="850.5" y="221.4"/><use href="#c" x="577.1" y="438.7"/><use href="#c" x="857.6" y="510.5"/><use href="#c" x="623.5" y="546.4"/><use href="#c" x="1095.3" y="445.0"/><use href="#c" x="577.0" y="429.4"/><use href="#c" x="554.6" y="438.5"/><use href="#c" x="975.3" y="515.5"/><use href="#c" x="668.7" y="544.4"/><use href="#c" x="804.6" y="579.0"/><use href="#c" x="1005.4" y="604.5"/><use href="#c" x="849.0" y="566.5"/><use href="#c" x="765.5" y="573.9"/><use href="#c" x="779.4" y="417.5"/><use href="#c" x="985.0" y="656.5"/><use href="#c" x="739.3" y="414.2"/><use href="#c" x="676.6" y="532.8"/><use href="#c" x="901.7" y="423.5"/><use href="#c" x="752.8" y="494.5"/><use href="#c" x="986.4" y="353.6"/><use href="#c" x="702.8" y="492.8"/><use href="#c" x="826.6" y="401.1"/><use href="#c" x="804.3" y="576.0"/><use href="#c" x="699.6" y="466.2"/><use href="#c" x="702.4" y="550.1"/><use href="#c" x="810.3" y="468.4"/><use href="#c" x="952.8" y="357.4"/><use href="#c" x="825.8" y="454.5"/><use href="#c" x="756.4" y="448.7"/><use href="#c" x="565.3" y="417.8"/><use href="#c" x="1060.4" y="389.9"/><use href="#c" x="738.0" y="596.9"/><use href="#c" x="1006.1" y="651.9"/><use href="#c" x="968.1" y="285.5"/><use href="#c" x="849.8" y="460.4"/><use href="#c" x="856.0" y="529.8"/><use href="#c" x="747.2" y="459.5"/><use href="#c" x="1030.6" y="558.5"/><use href="#c" x="906.9" y="301.4"/><use href="#c" x="737.1" y="478.4"/><use href="#c" x="965.0" y="635.2"/><use href="#c" x="1068.1" y="529.4"/><use href="#c" x="1011.9" y="508.4"/><use href="#c" x="873.9" y="593.2"/><use href="#c" x="885.2" y="201.8"/><use href="#c" x="794.3" y="503.2"/><use href="#c" x="590.3" y="424.8"/><use href="#c" x="673.2" y="513.4"/><use href="#c" x="649.3" y="539.9"/><use href="#c" x="785.3" y="490.8"/><use href="#c" x="823.9" y="498.4"/><use href="#c" x="799.7" y="505.1"/><use href="#c" x="1047.1" y="397.5"/><use href="#c" x="750.7" y="488.1"/><use href="#c" x="738.7" y="551.2"/><use href="#c" x="803.4" y="557.5"/><use href="#c" x="584.4" y="486.0"/><use href="#c" x="928.8" y="345.1"/><use href="#c" x="813.5" y="440.0"/><use href="#c" x="721.4" y="373.6"/><use href="#c" x="624.6" y="557.9"/><use href="#c" x="896.6" y="492.1"/><use href="#c" x="920.4" y="301.3"/><use href="#c" x="636.9" y="456.1"/><use href="#c" x="669.7" y="447.5"/><use href="#c" x="782.4" y="568.3"/><use href="#c" x="844.0" y="208.7"/><use href="#c" x="772.7" y="579.2"/><use href="#c" x="877.3" y="418.8"/><use href="#c" x="843.6" y="517.4"/><use href="#c" x="942.6" y="307.6"/><use href="#c" x="942.8" y="303.7"/><use href="#c" x="869.0" y="214.0"/><use href="#c" x="990.6" y="289.7"/><use href="#c" x="767.5" y="617.4"/><use href="#c" x="738.0" y="545.3"/><use href="#c" x="954.1" y="519.1"/><use href="#c" x="704.9" y="567.9"/><use href="#c" x="803.6" y="466.7"/><use href="#c" x="664.7" y="621.4"/><use href="#c" x="1037.1" y="559.0"/><use href="#c" x="865.6" y="509.4"/><use href="#c" x="869.0" y="527.3"/><use href="#c" x="1117.0" y="433.2"/><use href="#c" x="858.8" y="522.3"/><use href="#c" x="681.1" y="449.6"/><use href="#c" x="880.3" y="586.9"/><use href="#c" x="1094.4" y="431.9"/><use href="#c" x="872.4" y="492.4"/><use href="#c" x="707.5" y="541.5"/><use href="#c" x="1047.2" y="451.2"/><use href="#c" x="780.6" y="582.4"/><use href="#c" x="1049.9" y="616.3"/><use href="#c" x="883.1" y="332.4"/><use href="#c" x="977.7" y="660.4"/><use href="#c" x="820.3" y="573.3"/><use href="#c" x="915.4" y="439.9"/><use href="#c" x="1058.1" y="372.2"/><use href="#c" x="872.3" y="501.8"/><use href="#c" x="964.3" y="641.2"/><use href="#c" x="809.8" y="594.5"/><use href="#c" x="978.3" y="367.2"/><use href="#c" x="771.6" y="454.6"/><use href="#c" x="916.7" y="442.3"/><use href="#c" x="951.7" y="522.8"/><use href="#c" x="618.5" y="504.2"/><use href="#c" x="1035.5" y="612.1"/><use href="#c" x="701.1" y="510.6"/><use href="#c" x="664.3" y="593.3"/><use href="#c" x="958.8" y="494.2"/><use href="#c" x="1057.7" y="426.9"/><use href="#c" x="991.0" y="628.4"/><use href="#c" x="674.7" y="590.3"/><use href="#c" x="1035.6" y="541.8"/><use href="#c" x="816.0" y="428.1"/><use href="#c" x="923.4" y="343.5"/><use href="#c" x="656.8" y="488.1"/><use href="#c" x="747.5" y="383.8"/><use href="#c" x="999.6" y="268.0"/><use href="#c" x="1115.7" y="432.6"/><use href="#c" x="767.9" y="575.7"/><use href="#c" x="669.1" y="605.4"/><use href="#c" x="778.2" y="539.2"/><use href="#c" x="772.9" y="453.8"/><use href="#c" x="1084.3" y="367.2"/><use href="#c" x="728.8" y="521.7"/><use href="#c" x="685.4" y="479.9"/><use href="#c" x="907.9" y="420.6"/><use href="#c" x="688.1" y="546.8"/><use href="#c" x="811.3" y="416.5"/><use href="#c" x="700.0" y="508.2"/><use href="#c" x="755.3" y="541.6"/><use href="#c" x="1017.1" y="349.4"/><use href="#c" x="723.9" y="528.1"/><use href="#c" x="1007.4" y="358.0"/><use href="#c" x="815.3" y="429.7"/><use href="#c" x="850.3" y="572.2"/><use href="#c" x="828.8" y="472.0"/><use href="#c" x="808.8" y="555.5"/><use href="#c" x="900.8" y="328.9"/><use href="#c" x="827.3" y="506.7"/><use href="#c" x="965.5" y="471.3"/><use href="#c" x="774.8" y="345.7"/><use href="#c" x="819.5" y="580.3"/><use href="#c" x="728.0" y="423.1"/><use href="#c" x="832.8" y="399.4"/><use href="#c" x="889.0" y="445.2"/><use href="#c" x="746.0" y="476.9"/><use href="#c" x="703.4" y="533.3"/><use href="#c" x="784.8" y="575.8"/><use href="#c" x="825.2" y="496.4"/><use href="#c" x="994.5" y="504.0"/><use href="#c" x="773.5" y="481.4"/><use href="#c" x="760.8" y="491.0"/><use href="#c" x="711.4" y="401.5"/><use href="#c" x="984.9" y="527.6"/><use href="#c" x="932.6" y="239.3"/><use href="#c" x="1025.3" y="416.0"/><use href="#c" x="984.8" y="658.8"/><use href="#c" x="936.9" y="385.0"/><use href="#c" x="820.4" y="522.5"/><use href="#c" x="718.3" y="386.0"/><use href="#c" x="581.6" y="394.9"/><use href="#c" x="879.9" y="267.7"/><use href="#c" x="902.9" y="338.3"/><use href="#c" x="853.5" y="477.0"/><use href="#c" x="734.0" y="400.9"/><use href="#c" x="765.4" y="368.0"/><use href="#c" x="570.4" y="416.6"/><use href="#c" x="736.6" y="542.7"/><use href="#c" x="798.1" y="475.3"/><use href="#c" x="567.0" y="515.2"/><use href="#c" x="833.4" y="570.0"/><use href="#c" x="996.8" y="613.0"/><use href="#c" x="743.5" y="467.6"/><use href="#c" x="651.0" y="606.4"/><use href="#c" x="703.0" y="525.2"/><use href="#c" x="1000.8" y="284.6"/><use href="#c" x="716.5" y="596.1"/><use href="#c" x="1082.2" y="419.5"/><use href="#c" x="736.6" y="591.4"/><use href="#c" x="582.5" y="531.6"/><use href="#c" x="737.1" y="571.1"/><use href="#c" x="867.6" y="591.2"/><use href="#c" x="625.2" y="622.9"/><use href="#c" x="1043.1" y="439.4"/><use href="#c" x="1017.3" y="525.3"/><use href="#c" x="822.6" y="565.6"/><use href="#c" x="831.1" y="476.8"/><use href="#c" x="620.6" y="528.0"/><use href="#c" x="1065.0" y="563.7"/><use href="#c" x="853.6" y="459.5"/><use href="#c" x="870.5" y="553.5"/><use href="#c" x="1073.7" y="423.6"/><use href="#c" x="1111.5" y="418.6"/><use href="#c" x="765.0" y="379.7"/><use href="#c" x="791.1" y="354.3"/><use href="#c" x="776.5" y="588.4"/><use href="#c" x="642.6" y="666.3"/><use href="#c" x="875.3" y="566.1"/><use href="#c" x="957.6" y="291.8"/><use href="#c" x="961.8" y="550.3"/><use href="#c" x="692.9" y="508.3"/><use href="#c" x="740.6" y="463.6"/><use href="#c" x="852.1" y="529.4"/><use href="#c" x="722.0" y="414.6"/><use href="#c" x="779.6" y="508.4"/><use href="#c" x="866.1" y="196.6"/><use href="#c" x="1045.5" y="619.8"/><use href="#c" x="562.7" y="419.3"/><use href="#c" x="857.8" y="182.9"/><use href="#c" x="1000.0" y="658.2"/><use href="#c" x="728.6" y="510.4"/><use href="#c" x="776.3" y="550.0"/><use href="#c" x="852.2" y="529.7"/><use href="#c" x="763.3" y="387.5"/><use href="#c" x="1024.5" y="407.1"/><use href="#c" x="859.6" y="540.2"/><use href="#c" x="699.5" y="486.7"/><use href="#c" x="826.4" y="454.8"/><use href="#c" x="757.8" y="481.6"/><use href="#c" x="767.0" y="576.6"/><use href="#c" x="699.5" y="531.7"/><use href="#c" x="695.3" y="520.3"/><use href="#c" x="588.7" y="398.6"/><use href="#c" x="882.9" y="220.8"/><use href="#c" x="759.3" y="438.1"/><use href="#c" x="925.4" y="560.4"/><use href="#c" x="856.7" y="529.7"/><use href="#c" x="618.6" y="459.2"/><use href="#c" x="889.8" y="293.3"/><use href="#c" x="1013.0" y="563.6"/><use href="#c" x="804.3" y="492.7"/><use href="#c" x="992.1" y="650.2"/><use href="#c" x="676.0" y="495.5"/><use href="#c" x="908.3" y="278.6"/><use href="#c" x="624.1" y="446.2"/><use href="#c" x="1024.1" y="396.6"/><use href="#c" x="946.7" y="247.0"/><use href="#c" x="838.0" y="566.0"/><use href="#c" x="761.5" y="545.2"/><use href="#c" x="786.3" y="542.9"/><use href="#c" x="840.7" y="401.3"/><use href="#c" x="591.3" y="478.8"/><use href="#c" x="784.8" y="596.2"/><use href="#c" x="797.3" y="596.4"/><use href="#c" x="1051.5" y="588.1"/><use href="#c" x="902.1" y="304.2"/><use href="#c" x="889.6" y="589.7"/><use href="#c" x="605.4" y="618.1"/><use href="#c" x="821.1" y="551.7"/><use href="#c" x="871.8" y="306.4"/><use href="#c" x="721.0" y="538.2"/><use href="#c" x="978.6" y="369.7"/><use href="#c" x="638.6" y="437.2"/><use href="#c" x="715.3" y="575.5"/><use href="#c" x="866.2" y="336.9"/><use href="#c" x="665.3" y="432.3"/><use href="#c" x="568.7" y="465.0"/><use href="#c" x="579.4" y="584.8"/><use href="#c" x="1117.5" y="431.2"/><use href="#c" x="693.6" y="406.6"/><use href="#c" x="658.9" y="441.1"/><use href="#c" x="728.0" y="544.4"/><use href="#c" x="638.1" y="451.5"/><use href="#c" x="738.4" y="610.7"/><use href="#c" x="928.4" y="370.5"/><use href="#c" x="1054.5" y="402.4"/><use href="#c" x="616.0" y="543.5"/><use href="#c" x="1039.7" y="433.4"/><use href="#c" x="870.7" y="460.4"/><use href="#c" x="990.0" y="495.6"/><use href="#c" x="1017.2" y="571.9"/><use href="#c" x="673.5" y="511.2"/><use href="#c" x="845.3" y="397.5"/><use href="#c" x="790.5" y="444.6"/><use href="#c" x="1081.7" y="400.5"/><use href="#c" x="936.2" y="465.4"/><use href="#c" x="980.8" y="533.8"/><use href="#c" x="777.7" y="541.6"/><use href="#c" x="970.3" y="537.5"/><use href="#c" x="1124.6" y="413.1"/><use href="#c" x="905.3" y="270.8"/><use href="#c" x="985.3" y="269.8"/><use href="#c" x="902.5" y="313.2"/><use href="#c" x="755.1" y="464.2"/><use href="#c" x="595.3" y="397.4"/><use href="#c" x="1074.7" y="437.1"/><use href="#c" x="824.6" y="529.1"/><use href="#c" x="929.7" y="351.0"/><use href="#c" x="849.6" y="234.5"/><use href="#c" x="576.3" y="465.0"/><use href="#c" x="811.1" y="524.9"/><use href="#c" x="720.3" y="583.2"/><use href="#c" x="882.8" y="254.1"/><use href="#c" x="694.8" y="410.0"/><use href="#c" x="1088.5" y="401.0"/><use href="#c" x="787.1" y="514.5"/><use href="#c" x="1043.4" y="619.8"/><use href="#c" x="723.3" y="561.3"/><use href="#c" x="611.4" y="408.3"/><use href="#c" x="1046.3" y="389.5"/><use href="#c" x="858.9" y="205.3"/><use href="#c" x="994.3" y="294.9"/><use href="#c" x="866.4" y="594.4"/><use href="#c" x="786.3" y="599.9"/><use href="#c" x="687.7" y="406.5"/><use href="#c" x="839.9" y="505.9"/><use href="#c" x="697.7" y="577.3"/><use href="#c" x="931.5" y="527.1"/><use href="#c" x="696.1" y="459.7"/><use href="#c" x="631.8" y="453.0"/><use href="#c" x="694.6" y="412.0"/><use href="#c" x="1056.0" y="599.1"/><use href="#c" x="666.9" y="619.9"/><use href="#c" x="1057.7" y="422.7"/><use href="#c" x="890.2" y="326.7"/><use href="#c" x="595.4" y="579.7"/><use href="#c" x="768.1" y="404.1"/><use href="#c" x="605.0" y="515.0"/><use href="#c" x="671.9" y="550.7"/><use href="#c" x="626.8" y="450.4"/><use href="#c" x="991.3" y="289.0"/><use href="#c" x="840.7" y="531.3"/><use href="#c" x="808.6" y="585.1"/><use href="#c" x="663.2" y="487.0"/><use href="#c" x="1083.2" y="426.1"/><use href="#c" x="844.4" y="567.7"/><use href="#c" x="851.6" y="188.3"/><use href="#c" x="880.4" y="468.5"/><use href="#c" x="679.5" y="411.2"/><use href="#c" x="544.4" y="424.8"/><use href="#c" x="552.6" y="421.3"/><use href="#c" x="1034.9" y="419.0"/><use href="#c" x="995.7" y="294.5"/><use href="#c" x="568.5" y="417.2"/><use href="#c" x="952.9" y="435.6"/><use href="#c" x="867.8" y="459.2"/><use href="#c" x="608.1" y="402.9"/><use href="#c" x="664.4" y="524.5"/><use href="#c" x="765.2" y="511.0"/><use href="#c" x="888.4" y="533.8"/><use href="#c" x="907.9" y="452.0"/><use href="#c" x="939.0" y="224.0"/><use href="#c" x="838.5" y="535.4"/><use href="#c" x="670.7" y="422.8"/><use href="#c" x="572.8" y="465.4"/><use href="#c" x="1033.3" y="529.0"/><use href="#c" x="1053.3" y="360.3"/><use href="#c" x="866.7" y="249.3"/><use href="#c" x="953.7" y="384.6"/><use href="#c" x="876.2" y="324.4"/><use href="#c" x="680.9" y="575.8"/><use href="#c" x="831.3" y="401.3"/><use href="#c" x="743.0" y="402.3"/><use href="#c" x="569.5" y="413.7"/><use href="#c" x="1056.3" y="433.1"/><use href="#c" x="1117.8" y="431.8"/><use href="#c" x="833.8" y="435.1"/><use href="#c" x="827.3" y="571.4"/><use href="#c" x="859.1" y="594.9"/><use href="#c" x="855.8" y="471.5"/><use href="#c" x="860.7" y="388.0"/><use href="#c" x="681.2" y="532.5"/><use href="#c" x="1022.4" y="336.2"/><use href="#c" x="716.7" y="364.7"/><use href="#c" x="1116.2" y="406.5"/><use href="#c" x="569.7" y="447.0"/><use href="#c" x="1077.4" y="541.2"/><use href="#c" x="1045.6" y="428.2"/><use href="#c" x="885.3" y="503.5"/><use href="#c" x="1028.4" y="416.7"/><use href="#c" x="613.6" y="631.9"/><use href="#c" x="1032.8" y="387.8"/><use href="#c" x="854.8" y="493.4"/><use href="#c" x="813.2" y="592.7"/><use href="#c" x="665.5" y="544.6"/><use href="#c" x="641.9" y="621.4"/><use href="#c" x="966.0" y="515.0"/><use href="#c" x="889.8" y="534.4"/><use href="#c" x="619.5" y="515.0"/><use href="#c" x="768.9" y="449.2"/><use href="#c" x="737.9" y="597.0"/><use href="#c" x="922.4" y="551.7"/><use href="#c" x="740.3" y="540.9"/><use href="#c" x="870.3" y="495.2"/><use href="#c" x="805.9" y="553.4"/><use href="#c" x="751.2" y="613.1"/><use href="#c" x="750.7" y="451.4"/><use href="#c" x="869.4" y="498.8"/><use href="#c" x="872.1" y="581.9"/><use href="#c" x="660.2" y="512.2"/><use href="#c" x="733.0" y="363.5"/><use href="#c" x="786.6" y="479.1"/><use href="#c" x="878.4" y="430.6"/><use href="#c" x="718.8" y="423.0"/><use href="#c" x="786.4" y="415.1"/><use href="#c" x="1075.7" y="410.0"/><use href="#c" x="880.6" y="456.8"/><use href="#c" x="1095.0" y="441.4"/><use href="#c" x="743.9" y="491.6"/><use href="#c" x="871.7" y="578.7"/><use href="#c" x="671.8" y="654.1"/><use href="#c" x="1001.0" y="503.0"/><use href="#c" x="903.5" y="247.6"/><use href="#c" x="550.7" y="421.4"/><use href="#c" x="829.6" y="586.1"/><use href="#c" x="1038.1" y="414.9"/><use href="#c" x="861.7" y="427.1"/><use href="#c" x="871.8" y="277.5"/><use href="#c" x="617.3" y="564.7"/><use href="#c" x="707.0" y="394.8"/><use href="#c" x="964.4" y="605.1"/><use href="#c" x="1028.3" y="614.2"/><use href="#c" x="879.1" y="254.1"/><use href="#c" x="934.8" y="452.2"/><use href="#c" x="675.1" y="622.7"/><use href="#c" x="689.0" y="584.9"/><use href="#c" x="870.0" y="531.4"/><use href="#c" x="900.4" y="276.5"/><use href="#c" x="905.6" y="554.5"/><use href="#c" x="1062.7" y="595.4"/><use href="#c" x="892.4" y="384.5"/><use href="#c" x="916.2" y="312.3"/><use href="#c" x="891.2" y="491.8"/><use href="#c" x="742.4" y="391.0"/><use href="#c" x="864.7" y="206.2"/><use href="#c" x="856.4" y="532.8"/><use href="#c" x="879.9" y="565.4"/><use href="#c" x="813.0" y="482.4"/><use href="#c" x="831.2" y="401.5"/><use href="#c" x="1034.7" y="576.7"/><use href="#c" x="739.9" y="543.6"/><use href="#c" x="782.1" y="477.3"/><use href="#c" x="789.3" y="565.8"/><use href="#c" x="599.5" y="503.2"/><use href="#c" x="881.0" y="326.2"/><use href="#c" x="891.4" y="579.5"/><use href="#c" x="714.2" y="590.4"/><use href="#c" x="979.1" y="522.1"/><use href="#c" x="749.9" y="360.2"/><use href="#c" x="888.2" y="529.6"/><use href="#c" x="877.8" y="570.3"/><use href="#c" x="864.5" y="427.7"/><use href="#c" x="727.4" y="436.5"/><use href="#c" x="842.3" y="483.0"/><use href="#c" x="755.5" y="470.0"/><use href="#c" x="854.7" y="447.8"/><use href="#c" x="873.7" y="560.3"/><use href="#c" x="869.0" y="594.9"/><use href="#c" x="1021.8" y="563.7"/><use href="#c" x="845.2" y="413.5"/><use href="#c" x="847.6" y="510.0"/><use href="#c" x="740.3" y="477.7"/><use href="#c" x="652.8" y="422.3"/><use href="#c" x="809.7" y="501.5"/><use href="#c" x="898.3" y="300.2"/><use href="#c" x="817.6" y="549.3"/><use href="#c" x="706.1" y="491.3"/><use href="#c" x="1025.5" y="408.5"/><use href="#c" x="816.8" y="433.9"/><use href="#c" x="850.5" y="413.6"/><use href="#c" x="774.0" y="375.9"/><use href="#c" x="858.8" y="189.0"/><use href="#c" x="867.3" y="517.6"/><use href="#c" x="802.0" y="551.4"/><use href="#c" x="801.9" y="577.1"/><use href="#c" x="821.4" y="425.7"/><use href="#c" x="904.3" y="538.4"/><use href="#c" x="777.3" y="591.9"/><use href="#c" x="997.6" y="628.9"/><use href="#c" x="580.1" y="412.6"/><use href="#c" x="750.9" y="513.7"/><use href="#c" x="689.6" y="538.5"/><use href="#c" x="583.6" y="421.0"/><use href="#c" x="1080.8" y="533.8"/><use href="#c" x="819.9" y="468.4"/><use href="#c" x="950.2" y="283.2"/><use href="#c" x="622.2" y="639.2"/><use href="#c" x="1082.1" y="417.4"/><use href="#c" x="869.5" y="525.9"/><use href="#c" x="591.4" y="481.4"/><use href="#c" x="970.6" y="661.9"/><use href="#c" x="697.4" y="462.9"/><use href="#c" x="1039.1" y="414.4"/><use href="#c" x="590.3" y="403.0"/><use href="#c" x="1035.3" y="424.1"/><use href="#c" x="838.2" y="441.5"/><use href="#c" x="876.6" y="411.9"/><use href="#c" x="881.3" y="309.4"/><use href="#c" x="753.2" y="544.0"/><use href="#c" x="997.9" y="434.2"/><use href="#c" x="706.7" y="399.8"/><use href="#c" x="929.6" y="530.5"/><use href="#c" x="951.9" y="650.0"/><use href="#c" x="658.0" y="500.6"/><use href="#c" x="669.2" y="572.8"/><use href="#c" x="860.4" y="549.2"/><use href="#c" x="630.5" y="480.5"/><use href="#c" x="813.0" y="413.5"/><use href="#c" x="811.9" y="525.6"/><use href="#c" x="1030.1" y="393.6"/><use href="#c" x="981.2" y="421.4"/><use href="#c" x="557.5" y="415.6"/><use href="#c" x="940.6" y="530.6"/><use href="#c" x="885.9" y="284.6"/><use href="#c" x="857.7" y="449.5"/><use href="#c" x="727.7" y="414.8"/><use href="#c" x="734.9" y="378.4"/><use href="#c" x="876.5" y="345.1"/><use href="#c" x="676.3" y="644.3"/><use href="#c" x="637.7" y="462.7"/><use href="#c" x="851.7" y="548.2"/><use href="#c" x="571.5" y="506.9"/><use href="#c" x="936.9" y="470.1"/><use href="#c" x="773.9" y="600.7"/><use href="#c" x="813.5" y="424.8"/><use href="#c" x="881.2" y="202.9"/><use href="#c" x="1100.5" y="398.8"/><use href="#c" x="824.1" y="404.1"/><use href="#c" x="855.6" y="464.4"/><use href="#c" x="979.3" y="537.0"/><use href="#c" x="886.1" y="190.4"/><use href="#c" x="877.4" y="404.0"/><use href="#c" x="745.4" y="471.9"/><use href="#c" x="779.0" y="552.9"/><use href="#c" x="841.2" y="412.6"/><use href="#c" x="740.0" y="561.4"/><use href="#c" x="844.8" y="227.7"/><use href="#c" x="934.7" y="530.8"/><use href="#c" x="572.7" y="513.0"/><use href="#c" x="751.5" y="560.4"/><use href="#c" x="812.5" y="560.6"/><use href="#c" x="794.9" y="429.4"/><use href="#c" x="726.0" y="359.6"/><use href="#c" x="766.8" y="597.8"/><use href="#c" x="764.0" y="478.2"/><use href="#c" x="1018.2" y="397.2"/><use href="#c" x="1051.2" y="543.9"/><use href="#c" x="848.4" y="463.9"/><use href="#c" x="808.7" y="572.6"/><use href="#c" x="619.6" y="491.9"/><use href="#c" x="1019.5" y="626.3"/><use href="#c" x="708.3" y="431.5"/><use href="#c" x="903.2" y="268.5"/><use href="#c" x="660.7" y="482.6"/><use href="#c" x="879.5" y="194.7"/><use href="#c" x="851.0" y="581.7"/><use href="#c" x="1030.1" y="393.0"/><use href="#c" x="783.1" y="446.4"/><use href="#c" x="771.1" y="442.6"/><use href="#c" x="794.2" y="461.8"/><use href="#c" x="891.0" y="404.5"/><use href="#c" x="838.4" y="433.7"/><use href="#c" x="915.6" y="553.4"/><use href="#c" x="883.7" y="194.1"/><use href="#c" x="758.3" y="444.6"/><use href="#c" x="996.1" y="288.1"/><use href="#c" x="797.2" y="574.4"/><use href="#c" x="778.1" y="575.2"/><use href="#c" x="806.4" y="413.0"/><use href="#c" x="735.3" y="409.0"/><use href="#c" x="1041.2" y="518.1"/><use href="#c" x="594.4" y="565.4"/><use href="#c" x="1032.7" y="405.6"/><use href="#c" x="1020.3" y="559.7"/><use href="#c" x="760.2" y="374.7"/><use href="#c" x="841.6" y="387.9"/><use href="#c" x="901.1" y="308.4"/><use href="#c" x="879.3" y="469.1"/><use href="#c" x="865.5" y="494.0"/><use href="#c" x="911.2" y="531.9"/><use href="#c" x="605.2" y="452.1"/><use href="#c" x="729.7" y="499.5"/><use href="#c" x="883.7" y="201.0"/><use href="#c" x="628.8" y="599.2"/><use href="#c" x="784.8" y="402.7"/><use href="#c" x="846.0" y="559.4"/><use href="#c" x="799.1" y="462.0"/><use href="#c" x="616.3" y="413.7"/><use href="#c" x="883.3" y="300.9"/><use href="#c" x="718.6" y="435.3"/><use href="#c" x="731.1" y="405.3"/><use href="#c" x="976.8" y="278.8"/><use href="#c" x="746.9" y="524.2"/><use href="#c" x="870.4" y="364.1"/><use href="#c" x="997.7" y="658.1"/><use href="#c" x="738.0" y="484.4"/><use href="#c" x="615.6" y="638.7"/><use href="#c" x="698.5" y="429.6"/><use href="#c" x="892.4" y="198.0"/><use href="#c" x="914.1" y="421.4"/><use href="#c" x="825.3" y="499.5"/><use href="#c" x="573.0" y="512.8"/><use href="#c" x="880.6" y="520.1"/><use href="#c" x="880.7" y="537.7"/><use href="#c" x="631.1" y="592.9"/><use href="#c" x="1014.7" y="365.1"/><use href="#c" x="873.8" y="403.1"/><use href="#c" x="894.6" y="390.4"/><use href="#c" x="882.0" y="468.5"/><use href="#c" x="741.6" y="591.2"/><use href="#c" x="758.3" y="480.2"/><use href="#c" x="680.0" y="481.4"/><use href="#c" x="889.3" y="314.2"/><use href="#c" x="777.7" y="442.2"/><use href="#c" x="562.4" y="414.9"/><use href="#c" x="567.7" y="522.6"/><use href="#c" x="815.7" y="581.0"/><use href="#c" x="849.7" y="550.0"/><use href="#c" x="1021.6" y="429.0"/><use href="#c" x="1082.8" y="403.5"/><use href="#c" x="877.7" y="421.6"/><use href="#c" x="1037.9" y="386.9"/><use href="#c" x="863.8" y="523.8"/><use href="#c" x="985.0" y="537.9"/><use href="#c" x="888.6" y="316.9"/><use href="#c" x="641.9" y="533.9"/><use href="#c" x="614.2" y="536.6"/><use href="#c" x="650.9" y="462.7"/><use href="#c" x="743.5" y="447.5"/><use href="#c" x="914.2" y="539.0"/><use href="#c" x="584.3" y="423.1"/><use href="#c" x="630.0" y="520.4"/><use href="#c" x="691.7" y="568.2"/><use href="#c" x="704.8" y="432.5"/><use href="#c" x="845.2" y="410.2"/><use href="#c" x="639.0" y="439.5"/><use href="#c" x="817.2" y="408.2"/><use href="#c" x="827.7" y="499.5"/><use href="#c" x="978.1" y="312.5"/><use href="#c" x="808.0" y="422.8"/><use href="#c" x="624.5" y="444.8"/><use href="#c" x="714.8" y="508.6"/><use href="#c" x="891.7" y="205.8"/><use href="#c" x="703.5" y="484.3"/><use href="#c" x="882.3" y="279.8"/><use href="#c" x="1011.9" y="516.7"/><use href="#c" x="1090.7" y="389.7"/><use href="#c" x="890.8" y="566.1"/><use href="#c" x="935.3" y="376.1"/><use href="#c" x="741.7" y="542.3"/><use href="#c" x="684.4" y="562.9"/><use href="#c" x="884.6" y="429.8"/><use href="#c" x="841.2" y="514.8"/><use href="#c" x="888.3" y="297.6"/><use href="#c" x="652.5" y="507.6"/><use href="#c" x="712.6" y="424.2"/><use href="#c" x="851.7" y="449.8"/><use href="#c" x="885.2" y="487.2"/><use href="#c" x="754.4" y="577.5"/><use href="#c" x="899.4" y="438.9"/><use href="#c" x="754.2" y="580.3"/><use href="#c" x="855.3" y="496.1"/><use href="#c" x="629.4" y="456.7"/><use href="#c" x="877.3" y="523.8"/><use href="#c" x="880.6" y="272.0"/><use href="#c" x="825.3" y="266.7"/><use href="#c" x="883.6" y="249.5"/><use href="#c" x="702.9" y="589.6"/><use href="#c" x="728.2" y="601.8"/><use href="#c" x="868.9" y="194.7"/><use href="#c" x="836.2" y="450.1"/><use href="#c" x="793.5" y="403.7"/><use href="#c" x="895.9" y="566.2"/><use href="#c" x="1008.2" y="625.0"/><use href="#c" x="560.8" y="436.6"/><use href="#c" x="965.0" y="276.7"/><use href="#c" x="1047.3" y="545.6"/><use href="#c" x="753.5" y="417.9"/><use href="#c" x="670.6" y="443.4"/><use href="#c" x="800.3" y="464.2"/><use href="#c" x="984.5" y="555.3"/><use href="#c" x="893.9" y="320.3"/><use href="#c" x="806.4" y="472.8"/><use href="#c" x="745.8" y="378.6"/><use href="#c" x="1001.4" y="292.6"/><use href="#c" x="925.0" y="428.1"/><use href="#c" x="703.5" y="572.4"/><use href="#c" x="1074.1" y="356.9"/><use href="#c" x="980.1" y="660.1"/><use href="#c" x="895.3" y="445.1"/><use href="#c" x="987.5" y="354.7"/><use href="#c" x="728.6" y="436.0"/><use href="#c" x="1042.9" y="404.8"/><use href="#c" x="983.0" y="307.7"/><use href="#c" x="663.8" y="586.3"/><use href="#c" x="1091.2" y="435.1"/><use href="#c" x="1056.0" y="413.0"/><use href="#c" x="577.8" y="503.4"/><use href="#c" x="890.9" y="573.2"/><use href="#c" x="723.8" y="501.2"/><use href="#c" x="913.3" y="535.7"/><use href="#c" x="1062.4" y="443.5"/><use href="#c" x="892.2" y="512.4"/><use href="#c" x="682.1" y="560.2"/><use href="#c" x="868.2" y="436.4"/><use href="#c" x="847.9" y="479.4"/><use href="#c" x="865.7" y="591.3"/><use href="#c" x="1041.3" y="540.4"/><use href="#c" x="912.8" y="313.7"/><use href="#c" x="745.2" y="557.9"/><use href="#c" x="593.7" y="587.9"/><use href="#c" x="1055.1" y="357.4"/><use href="#c" x="690.8" y="439.9"/><use href="#c" x="897.1" y="271.3"/><use href="#c" x="986.0" y="352.8"/><use href="#c" x="1027.0" y="396.5"/><use href="#c" x="843.7" y="582.7"/><use href="#c" x="709.3" y="558.9"/><use href="#c" x="879.9" y="510.8"/><use href="#c" x="841.6" y="541.5"/><use href="#c" x="590.8" y="477.1"/><use href="#c" x="883.6" y="498.0"/><use href="#c" x="1055.5" y="399.5"/><use href="#c" x="867.6" y="411.7"/><use href="#c" x="820.0" y="435.2"/><use href="#c" x="821.0" y="434.6"/><use href="#c" x="849.6" y="513.6"/><use href="#c" x="671.0" y="431.1"/><use href="#c" x="858.1" y="546.6"/><use href="#c" x="781.9" y="486.4"/><use href="#c" x="615.8" y="616.0"/><use href="#c" x="711.8" y="368.0"/><use href="#c" x="598.1" y="465.2"/><use href="#c" x="875.8" y="444.0"/><use href="#c" x="871.3" y="551.8"/><use href="#c" x="1045.7" y="370.8"/><use href="#c" x="812.3" y="575.8"/><use href="#c" x="887.3" y="523.9"/><use href="#c" x="792.1" y="599.4"/><use href="#c" x="1046.8" y="397.0"/><use href="#c" x="774.6" y="441.5"/><use href="#c" x="587.8" y="416.2"/><use href="#c" x="606.0" y="630.5"/><use href="#c" x="778.2" y="400.2"/><use href="#c" x="878.6" y="584.5"/><use href="#c" x="764.4" y="615.5"/><use href="#c" x="966.0" y="488.9"/><use href="#c" x="739.2" y="380.6"/><use href="#c" x="1117.0" y="431.7"/><use href="#c" x="1027.3" y="351.3"/><use href="#c" x="1032.2" y="503.7"/><use href="#c" x="1052.5" y="348.9"/><use href="#c" x="615.8" y="635.6"/><use href="#c" x="579.2" y="429.9"/><use href="#c" x="824.9" y="346.2"/><use href="#c" x="1099.1" y="444.3"/><use href="#c" x="1013.9" y="657.9"/><use href="#c" x="1027.6" y="575.7"/><use href="#c" x="701.0" y="598.8"/><use href="#c" x="591.8" y="418.5"/><use href="#c" x="833.3" y="442.1"/><use href="#c" x="766.5" y="472.0"/><use href="#c" x="803.7" y="558.3"/><use href="#c" x="794.5" y="542.5"/><use href="#c" x="836.4" y="557.2"/><use href="#c" x="907.1" y="309.4"/><use href="#c" x="1067.4" y="382.3"/><use href="#c" x="634.0" y="660.7"/><use href="#c" x="1048.8" y="411.4"/><use href="#c" x="1068.6" y="446.0"/><use href="#c" x="635.9" y="495.1"/><use href="#c" x="724.0" y="582.3"/><use href="#c" x="758.4" y="506.2"/><use href="#c" x="1020.0" y="597.2"/><use href="#c" x="895.9" y="539.2"/><use href="#c" x="865.4" y="513.2"/><use href="#c" x="840.2" y="402.4"/><use href="#c" x="820.6" y="447.6"/><use href="#c" x="836.5" y="538.1"/><use href="#c" x="802.2" y="545.9"/><use href="#c" x="760.9" y="424.4"/><use href="#c" x="1016.7" y="361.7"/><use href="#c" x="682.9" y="460.0"/><use href="#c" x="865.1" y="401.4"/><use href="#c" x="1029.5" y="409.9"/><use href="#c" x="708.1" y="573.6"/><use href="#c" x="1038.6" y="386.7"/><use href="#c" x="747.2" y="516.7"/><use href="#c" x="738.4" y="459.8"/><use href="#c" x="613.3" y="631.8"/><use href="#c" x="699.2" y="596.5"/><use href="#c" x="977.7" y="538.8"/><use href="#c" x="780.1" y="476.7"/><use href="#c" x="689.7" y="591.8"/><use href="#c" x="814.8" y="437.2"/><use href="#c" x="764.5" y="468.0"/><use href="#c" x="763.6" y="522.0"/><use href="#c" x="696.7" y="538.5"/><use href="#c" x="752.4" y="527.8"/><use href="#c" x="907.4" y="314.2"/><use href="#c" x="850.1" y="408.0"/><use href="#c" x="634.4" y="556.4"/><use href="#c" x="630.4" y="552.7"/><use href="#c" x="825.7" y="437.2"/><use href="#c" x="987.2" y="648.9"/><use href="#c" x="991.3" y="384.8"/><use href="#c" x="609.1" y="625.4"/><use href="#c" x="598.4" y="423.2"/><use href="#c" x="720.2" y="604.8"/><use href="#c" x="843.6" y="493.2"/><use href="#c" x="931.2" y="375.0"/><use href="#c" x="810.6" y="472.1"/><use href="#c" x="882.9" y="405.8"/><use href="#c" x="577.0" y="435.2"/><use href="#c" x="933.4" y="451.6"/><use href="#c" x="737.3" y="615.0"/><use href="#c" x="798.8" y="594.4"/><use href="#c" x="883.1" y="310.3"/><use href="#c" x="737.3" y="580.6"/><use href="#c" x="721.6" y="526.6"/><use href="#c" x="742.6" y="517.1"/><use href="#c" x="720.8" y="367.8"/><use href="#c" x="867.3" y="435.8"/><use href="#c" x="1067.7" y="443.1"/><use href="#c" x="840.4" y="462.8"/><use href="#c" x="1067.8" y="443.6"/><use href="#c" x="685.6" y="492.6"/><use href="#c" x="876.1" y="526.8"/><use href="#c" x="1077.4" y="409.4"/><use href="#c" x="1052.9" y="437.3"/><use href="#c" x="624.5" y="456.1"/><use href="#c" x="885.8" y="429.6"/><use href="#c" x="1074.3" y="540.7"/><use href="#c" x="848.3" y="497.7"/><use href="#c" x="712.5" y="576.4"/><use href="#c" x="875.5" y="333.4"/><use href="#c" x="872.2" y="557.0"/><use href="#c" x="930.9" y="449.2"/><use href="#c" x="901.8" y="542.8"/><use href="#c" x="763.7" y="518.0"/><use href="#c" x="1032.7" y="550.4"/><use href="#c" x="972.4" y="487.5"/><use href="#c" x="657.5" y="510.2"/><use href="#c" x="834.5" y="403.3"/><use href="#c" x="845.9" y="402.5"/><use href="#c" x="854.4" y="530.8"/><use href="#c" x="774.5" y="474.9"/><use href="#c" x="980.1" y="507.4"/><use href="#c" x="790.5" y="592.5"/><use href="#c" x="620.9" y="521.8"/><use href="#c" x="708.1" y="571.7"/><use href="#c" x="1030.5" y="537.3"/><use href="#c" x="782.8" y="432.1"/><use href="#c" x="891.9" y="203.3"/><use href="#c" x="842.9" y="470.0"/><use href="#c" x="810.5" y="593.2"/><use href="#c" x="1094.8" y="407.6"/><use href="#c" x="620.7" y="435.7"/><use href="#c" x="627.4" y="546.5"/><use href="#c" x="1068.0" y="350.3"/><use href="#c" x="1026.6" y="450.3"/><use href="#c" x="641.9" y="530.8"/><use href="#c" x="896.7" y="546.9"/><use href="#c" x="837.0" y="469.3"/><use href="#c" x="870.3" y="584.2"/><use href="#c" x="823.0" y="415.0"/><use href="#c" x="1003.7" y="642.7"/><use href="#c" x="722.2" y="586.5"/><use href="#c" x="675.0" y="566.7"/><use href="#c" x="777.3" y="408.8"/><use href="#c" x="737.2" y="611.3"/><use href="#c" x="1001.8" y="501.3"/><use href="#c" x="602.8" y="399.1"/><use href="#c" x="902.6" y="457.7"/><use href="#c" x="893.2" y="329.3"/><use href="#c" x="831.4" y="489.3"/><use href="#c" x="695.1" y="455.0"/><use href="#c" x="873.2" y="238.7"/><use href="#c" x="724.8" y="366.4"/><use href="#c" x="946.2" y="394.9"/><use href="#c" x="865.9" y="491.9"/><use href="#c" x="957.0" y="549.6"/><use href="#c" x="970.1" y="530.7"/><use href="#c" x="998.6" y="268.7"/><use href="#c" x="694.6" y="545.9"/><use href="#c" x="565.6" y="461.3"/><use href="#c" x="713.9" y="418.6"/><use href="#c" x="865.7" y="530.0"/><use href="#c" x="837.7" y="463.9"/><use href="#c" x="878.4" y="287.6"/><use href="#c" x="609.4" y="576.1"/><use href="#c" x="590.2" y="622.4"/><use href="#c" x="866.2" y="363.6"/><use href="#c" x="916.4" y="595.0"/><use href="#c" x="880.4" y="275.2"/><use href="#c" x="733.6" y="386.6"/><use href="#c" x="605.1" y="407.8"/><use href="#c" x="568.0" y="454.0"/><use href="#c" x="795.8" y="491.8"/><use href="#c" x="816.4" y="545.6"/><use href="#c" x="789.3" y="551.8"/><use href="#c" x="703.8" y="580.5"/><use href="#c" x="860.1" y="258.7"/><use href="#c" x="1031.5" y="551.3"/><use href="#c" x="816.6" y="435.4"/><use href="#c" x="894.1" y="336.0"/><use href="#c" x="720.9" y="374.4"/><use href="#c" x="915.2" y="530.0"/><use href="#c" x="764.4" y="470.9"/><use href="#c" x="724.0" y="368.3"/><use href="#c" x="746.6" y="435.7"/><use href="#c" x="847.9" y="566.0"/><use href="#c" x="712.1" y="404.7"/><use href="#c" x="865.5" y="586.4"/><use href="#c" x="997.5" y="276.1"/><use href="#c" x="674.8" y="567.1"/><use href="#c" x="683.3" y="504.2"/><use href="#c" x="809.7" y="379.3"/><use href="#c" x="795.7" y="375.3"/><use href="#c" x="876.8" y="458.2"/><use href="#c" x="902.2" y="342.2"/><use href="#c" x="1028.6" y="439.1"/><use href="#c" x="964.9" y="381.8"/><use href="#c" x="689.7" y="505.4"/><use href="#c" x="858.6" y="195.2"/><use href="#c" x="789.1" y="600.5"/><use href="#c" x="770.4" y="477.8"/><use href="#c" x="996.8" y="495.4"/><use href="#c" x="694.0" y="516.9"/><use href="#c" x="1112.6" y="434.5"/><use href="#c" x="936.9" y="304.4"/><use href="#c" x="680.7" y="622.6"/><use href="#c" x="749.6" y="385.6"/><use href="#c" x="831.9" y="584.9"/><use href="#c" x="759.5" y="463.8"/><use href="#c" x="792.2" y="594.6"/><use href="#c" x="849.3" y="191.2"/><use href="#c" x="659.5" y="628.7"/><use href="#c" x="895.1" y="354.9"/><use href="#c" x="943.5" y="620.2"/><use href="#c" x="665.0" y="425.8"/><use href="#c" x="913.9" y="318.2"/><use href="#c" x="848.3" y="410.2"/><use href="#c" x="863.9" y="597.3"/><use href="#c" x="867.2" y="282.7"/><use href="#c" x="870.2" y="316.2"/><use href="#c" x="743.1" y="403.8"/><use href="#c" x="804.4" y="414.1"/><use href="#c" x="853.6" y="457.4"/><use href="#c" x="978.1" y="653.7"/><use href="#c" x="783.1" y="428.3"/><use href="#c" x="798.2" y="565.6"/><use href="#c" x="935.8" y="581.5"/><use href="#c" x="799.6" y="512.1"/><use href="#c" x="699.6" y="494.3"/><use href="#c" x="935.4" y="621.4"/><use href="#c" x="653.8" y="559.5"/><use href="#c" x="720.5" y="412.3"/><use href="#c" x="1029.5" y="532.7"/><use href="#c" x="638.5" y="551.7"/><use href="#c" x="1056.8" y="431.3"/><use href="#c" x="825.4" y="561.7"/><use href="#c" x="1080.7" y="388.2"/><use href="#c" x="583.6" y="451.6"/><use href="#c" x="587.3" y="600.6"/><use href="#c" x="851.8" y="559.3"/><use href="#c" x="972.9" y="611.0"/><use href="#c" x="727.9" y="372.3"/><use href="#c" x="1059.2" y="603.1"/><use href="#c" x="828.1" y="443.2"/><use href="#c" x="1029.1" y="417.6"/><use href="#c" x="1081.8" y="380.8"/><use href="#c" x="1045.2" y="544.9"/><use href="#c" x="666.9" y="445.5"/><use href="#c" x="737.6" y="585.4"/><use href="#c" x="987.2" y="324.9"/><use href="#c" x="712.1" y="360.6"/><use href="#c" x="988.8" y="431.2"/><use href="#c" x="869.9" y="213.7"/><use href="#c" x="720.4" y="501.2"/><use href="#c" x="670.8" y="584.6"/><use href="#c" x="981.0" y="503.3"/><use href="#c" x="800.3" y="534.3"/><use href="#c" x="1079.1" y="429.2"/><use href="#c" x="1037.3" y="546.2"/><use href="#c" x="866.1" y="352.7"/><use href="#c" x="1047.9" y="429.0"/><use href="#c" x="732.1" y="437.0"/><use href="#c" x="707.5" y="517.9"/><use href="#c" x="899.3" y="437.0"/><use href="#c" x="867.4" y="595.7"/><use href="#c" x="616.5" y="639.8"/><use href="#c" x="1059.4" y="439.5"/><use href="#c" x="766.4" y="491.0"/><use href="#c" x="902.6" y="395.3"/><use href="#c" x="727.6" y="381.6"/><use href="#c" x="870.2" y="408.3"/><use href="#c" x="823.1" y="452.7"/><use href="#c" x="863.9" y="558.8"/><use href="#c" x="788.0" y="546.3"/><use href="#c" x="1000.0" y="659.4"/><use href="#c" x="820.4" y="442.9"/><use href="#c" x="879.3" y="338.6"/><use href="#c" x="858.5" y="527.5"/><use href="#c" x="788.0" y="550.5"/><use href="#c" x="1004.4" y="449.6"/><use href="#c" x="988.7" y="635.4"/><use href="#c" x="768.5" y="466.5"/><use href="#c" x="654.0" y="575.2"/><use href="#c" x="614.2" y="503.5"/><use href="#c" x="825.2" y="589.3"/><use href="#c" x="758.1" y="600.9"/><use href="#c" x="738.0" y="565.2"/><use href="#c" x="599.2" y="590.7"/><use href="#c" x="726.8" y="478.0"/><use href="#c" x="739.4" y="577.9"/><use href="#c" x="760.6" y="417.9"/><use href="#c" x="1032.1" y="550.9"/><use href="#c" x="672.0" y="547.6"/><use href="#c" x="776.3" y="374.1"/><use href="#c" x="786.5" y="516.1"/><use href="#c" x="773.5" y="511.8"/><use href="#c" x="839.2" y="233.0"/><use href="#c" x="823.6" y="577.0"/><use href="#c" x="779.3" y="477.2"/><use href="#c" x="697.7" y="436.3"/><use href="#c" x="1051.8" y="393.9"/><use href="#c" x="770.3" y="609.2"/><use href="#c" x="998.6" y="663.0"/><use href="#c" x="583.5" y="584.3"/><use href="#c" x="1052.8" y="504.3"/><use href="#c" x="678.2" y="456.8"/><use href="#c" x="786.2" y="484.6"/><use href="#c" x="614.1" y="471.7"/><use href="#c" x="1009.9" y="387.0"/><use href="#c" x="787.9" y="539.6"/><use href="#c" x="660.0" y="620.1"/><use href="#c" x="859.7" y="489.3"/><use href="#c" x="672.0" y="482.7"/><use href="#c" x="886.2" y="512.3"/><use href="#c" x="771.5" y="439.8"/><use href="#c" x="645.4" y="525.2"/><use href="#c" x="837.7" y="542.5"/><use href="#c" x="605.0" y="459.7"/><use href="#c" x="878.1" y="571.9"/><use href="#c" x="975.0" y="367.3"/><use href="#c" x="1077.5" y="414.4"/><use href="#c" x="571.3" y="430.2"/><use href="#c" x="1067.9" y="432.1"/><use href="#c" x="697.0" y="476.2"/><use href="#c" x="771.5" y="576.6"/><use href="#c" x="861.1" y="592.4"/><use href="#c" x="779.0" y="571.4"/><use href="#c" x="616.6" y="410.7"/><use href="#c" x="637.6" y="657.9"/><use href="#c" x="783.7" y="355.7"/><use href="#c" x="1012.5" y="511.9"/><use href="#c" x="711.0" y="544.2"/><use href="#c" x="872.5" y="367.0"/><use href="#c" x="721.6" y="395.1"/><use href="#c" x="656.5" y="591.3"/><use href="#c" x="657.5" y="520.0"/><use href="#c" x="638.9" y="667.1"/><use href="#c" x="1088.1" y="447.2"/><use href="#c" x="600.3" y="626.2"/><use href="#c" x="1039.2" y="381.6"/><use href="#c" x="775.4" y="483.2"/><use href="#c" x="916.3" y="339.5"/><use href="#c" x="991.5" y="354.6"/><use href="#c" x="814.4" y="574.3"/><use href="#c" x="593.2" y="571.5"/><use href="#c" x="818.6" y="587.8"/><use href="#c" x="849.0" y="417.6"/><use href="#c" x="880.5" y="408.7"/><use href="#c" x="876.8" y="392.8"/><use href="#c" x="847.8" y="491.6"/><use href="#c" x="1032.7" y="388.9"/><use href="#c" x="851.3" y="525.7"/><use href="#c" x="861.1" y="571.5"/><use href="#c" x="664.6" y="570.0"/><use href="#c" x="980.4" y="334.9"/><use href="#c" x="700.0" y="512.4"/><use href="#c" x="816.6" y="579.6"/><use href="#c" x="640.2" y="665.6"/><use href="#c" x="683.3" y="623.4"/><use href="#c" x="1047.4" y="425.4"/><use href="#c" x="678.8" y="585.8"/><use href="#c" x="844.4" y="529.3"/><use href="#c" x="740.5" y="576.5"/><use href="#c" x="640.6" y="468.3"/><use href="#c" x="947.9" y="273.6"/><use href="#c" x="619.4" y="640.6"/><use href="#c" x="613.8" y="414.5"/><use href="#c" x="605.1" y="451.1"/><use href="#c" x="1083.8" y="439.6"/><use href="#c" x="853.8" y="432.4"/><use href="#c" x="860.5" y="193.9"/><use href="#c" x="731.4" y="592.7"/><use href="#c" x="841.9" y="419.7"/><use href="#c" x="999.3" y="630.4"/><use href="#c" x="708.6" y="549.9"/><use href="#c" x="629.2" y="661.9"/><use href="#c" x="862.2" y="482.1"/><use href="#c" x="702.8" y="402.6"/><use href="#c" x="748.6" y="487.9"/><use href="#c" x="759.6" y="485.8"/><use href="#c" x="763.4" y="617.8"/><use href="#c" x="1014.8" y="455.2"/><use href="#c" x="816.5" y="551.6"/><use href="#c" x="1076.6" y="406.0"/><use href="#c" x="856.1" y="559.0"/><use href="#c" x="943.9" y="546.6"/><use href="#c" x="966.8" y="500.2"/><use href="#c" x="817.5" y="404.7"/><use href="#c" x="884.0" y="520.8"/><use href="#c" x="845.0" y="431.4"/><use href="#c" x="857.2" y="480.5"/><use href="#c" x="976.7" y="495.7"/><use href="#c" x="850.3" y="437.9"/><use href="#c" x="917.1" y="539.7"/><use href="#c" x="747.5" y="383.2"/><use href="#c" x="804.4" y="472.8"/><use href="#c" x="680.4" y="557.8"/><use href="#c" x="754.2" y="526.0"/><use href="#c" x="746.4" y="582.2"/><use href="#c" x="658.2" y="479.2"/><use href="#c" x="554.5" y="388.5"/><use href="#c" x="1072.0" y="531.3"/><use href="#c" x="696.1" y="458.3"/><use href="#c" x="915.1" y="354.7"/><use href="#c" x="879.0" y="265.2"/><use href="#c" x="898.8" y="519.9"/><use href="#c" x="975.5" y="485.4"/><use href="#c" x="560.9" y="387.0"/><use href="#c" x="798.8" y="512.1"/><use href="#c" x="1003.5" y="660.0"/><use href="#c" x="1032.8" y="393.2"/><use href="#c" x="1042.3" y="403.4"/><use href="#c" x="746.9" y="530.5"/><use href="#c" x="788.4" y="445.1"/><use href="#c" x="796.2" y="464.2"/><use href="#c" x="824.8" y="341.2"/><use href="#c" x="794.7" y="473.5"/><use href="#c" x="644.9" y="607.1"/><use href="#c" x="663.1" y="570.4"/><use href="#c" x="792.5" y="596.5"/><use href="#c" x="859.7" y="553.8"/><use href="#c" x="806.4" y="564.6"/><use href="#c" x="768.8" y="464.1"/><use href="#c" x="648.6" y="565.4"/><use href="#c" x="832.7" y="536.7"/><use href="#c" x="561.7" y="412.2"/><use href="#c" x="842.9" y="484.2"/><use href="#c" x="1060.8" y="528.4"/><use href="#c" x="1116.4" y="419.8"/><use href="#c" x="1049.9" y="373.2"/><use href="#c" x="706.2" y="465.5"/><use href="#c" x="584.5" y="423.5"/><use href="#c" x="869.9" y="425.4"/><use href="#c" x="878.0" y="575.3"/><use href="#c" x="884.2" y="589.8"/><use href="#c" x="619.0" y="420.2"/><use href="#c" x="999.5" y="631.7"/><use href="#c" x="845.9" y="505.1"/><use href="#c" x="596.8" y="616.1"/><use href="#c" x="920.9" y="352.7"/><use href="#c" x="784.8" y="489.7"/><use href="#c" x="819.5" y="426.6"/><use href="#c" x="807.0" y="531.3"/><use href="#c" x="831.2" y="545.3"/><use href="#c" x="710.0" y="478.9"/><use href="#c" x="757.0" y="592.8"/><use href="#c" x="786.6" y="554.5"/><use href="#c" x="819.5" y="579.9"/><use href="#c" x="713.8" y="494.3"/><use href="#c" x="859.9" y="195.9"/><use href="#c" x="766.8" y="475.3"/><use href="#c" x="1008.4" y="669.2"/><use href="#c" x="1116.2" y="411.5"/><use href="#c" x="1070.0" y="441.0"/><use href="#c" x="782.0" y="470.6"/><use href="#c" x="1074.2" y="392.9"/><use href="#c" x="907.5" y="306.6"/><use href="#c" x="907.0" y="428.6"/><use href="#c" x="677.9" y="442.5"/><use href="#c" x="760.4" y="378.0"/><use href="#c" x="906.7" y="218.1"/><use href="#c" x="731.0" y="435.8"/><use href="#c" x="1091.8" y="421.5"/><use href="#c" x="581.5" y="386.3"/><use href="#c" x="1068.5" y="398.2"/><use href="#c" x="868.5" y="209.8"/><use href="#c" x="881.7" y="197.9"/><use href="#c" x="755.9" y="448.2"/><use href="#c" x="774.2" y="526.8"/><use href="#c" x="899.9" y="361.5"/><use href="#c" x="598.4" y="394.4"/><use href="#c" x="581.4" y="401.9"/><use href="#c" x="721.9" y="566.1"/><use href="#c" x="739.7" y="511.6"/><use href="#c" x="748.0" y="557.1"/><use href="#c" x="735.5" y="585.5"/><use href="#c" x="1011.9" y="404.1"/><use href="#c" x="627.9" y="563.6"/><use href="#c" x="797.8" y="520.1"/><use href="#c" x="1067.8" y="380.2"/><use href="#c" x="636.0" y="539.3"/><use href="#c" x="719.3" y="557.6"/><use href="#c" x="570.9" y="409.4"/><use href="#c" x="886.5" y="380.5"/><use href="#c" x="778.0" y="414.7"/><use href="#c" x="637.9" y="649.9"/><use href="#c" x="939.6" y="299.2"/><use href="#c" x="888.2" y="504.4"/><use href="#c" x="877.3" y="590.2"/><use href="#c" x="1044.5" y="522.1"/><use href="#c" x="840.5" y="563.0"/><use href="#c" x="637.7" y="632.9"/><use href="#c" x="843.8" y="577.3"/><use href="#c" x="1019.1" y="598.0"/><use href="#c" x="900.5" y="411.7"/><use href="#c" x="972.9" y="626.6"/><use href="#c" x="578.6" y="454.0"/><use href="#c" x="1072.6" y="369.2"/><use href="#c" x="950.1" y="542.1"/><use href="#c" x="1111.9" y="416.6"/><use href="#c" x="1046.9" y="514.9"/><use href="#c" x="826.0" y="569.7"/><use href="#c" x="768.0" y="571.1"/><use href="#c" x="804.3" y="487.9"/><use href="#c" x="699.5" y="574.2"/><use href="#c" x="586.4" y="443.1"/><use href="#c" x="927.2" y="454.6"/><use href="#c" x="1026.8" y="446.6"/><use href="#c" x="784.8" y="460.7"/><use href="#c" x="997.4" y="323.0"/><use href="#c" x="759.2" y="462.4"/><use href="#c" x="695.7" y="524.8"/><use href="#c" x="1005.5" y="660.7"/><use href="#c" x="1068.2" y="450.9"/><use href="#c" x="694.6" y="590.9"/><use href="#c" x="1091.6" y="421.1"/><use href="#c" x="797.0" y="579.0"/><use href="#c" x="873.0" y="578.1"/><use href="#c" x="716.3" y="571.0"/><use href="#c" x="584.0" y="394.5"/><use href="#c" x="779.0" y="573.7"/><use href="#c" x="1082.1" y="393.8"/><use href="#c" x="741.9" y="570.8"/><use href="#c" x="620.5" y="439.6"/><use href="#c" x="565.1" y="437.9"/><use href="#c" x="815.8" y="501.3"/><use href="#c" x="766.6" y="541.5"/><use href="#c" x="545.2" y="409.6"/><use href="#c" x="575.7" y="388.1"/><use href="#c" x="600.6" y="611.4"/><use href="#c" x="952.8" y="651.7"/><use href="#c" x="731.9" y="473.5"/><use href="#c" x="677.6" y="443.7"/><use href="#c" x="795.1" y="534.3"/><use href="#c" x="586.6" y="584.4"/><use href="#c" x="588.9" y="423.5"/><use href="#c" x="796.7" y="540.5"/><use href="#c" x="875.1" y="533.5"/><use href="#c" x="630.6" y="508.2"/><use href="#c" x="1058.9" y="576.1"/><use href="#c" x="704.6" y="487.1"/><use href="#c" x="863.9" y="413.9"/><use href="#c" x="750.9" y="412.6"/><use href="#c" x="670.8" y="432.0"/><use href="#c" x="852.7" y="536.7"/><use href="#c" x="1008.0" y="452.4"/><use href="#c" x="811.2" y="586.9"/><use href="#c" x="742.0" y="468.6"/><use href="#c" x="680.3" y="616.8"/><use href="#c" x="825.6" y="478.4"/><use href="#c" x="720.3" y="581.5"/><use href="#c" x="603.3" y="446.7"/><use href="#c" x="1059.1" y="528.7"/><use href="#c" x="869.4" y="527.2"/><use href="#c" x="895.3" y="399.1"/><use href="#c" x="1104.1" y="398.7"/><use href="#c" x="1063.1" y="624.6"/><use href="#c" x="783.9" y="491.1"/><use href="#c" x="795.9" y="406.3"/><use href="#c" x="842.3" y="408.3"/><use href="#c" x="577.7" y="526.1"/><use href="#c" x="745.9" y="493.1"/><use href="#c" x="744.8" y="376.6"/><use href="#c" x="847.9" y="468.9"/><use href="#c" x="997.1" y="278.4"/><use href="#c" x="748.2" y="603.6"/><use href="#c" x="662.0" y="615.3"/><use href="#c" x="1080.5" y="365.6"/><use href="#c" x="817.8" y="562.8"/><use href="#c" x="806.5" y="487.2"/><use href="#c" x="629.1" y="460.9"/><use href="#c" x="589.3" y="392.5"/><use href="#c" x="747.8" y="545.2"/><use href="#c" x="1045.6" y="452.8"/><use href="#c" x="898.1" y="283.1"/><use href="#c" x="751.1" y="517.2"/><use href="#c" x="703.7" y="429.6"/><use href="#c" x="738.5" y="520.7"/><use href="#c" x="861.5" y="594.9"/><use href="#c" x="767.9" y="408.9"/><use href="#c" x="828.2" y="409.3"/><use href="#c" x="831.3" y="537.4"/><use href="#c" x="880.8" y="585.9"/><use href="#c" x="763.1" y="553.0"/><use href="#c" x="878.2" y="426.2"/><use href="#c" x="839.2" y="505.6"/><use href="#c" x="821.8" y="585.8"/><use href="#c" x="870.3" y="183.7"/><use href="#c" x="624.2" y="516.2"/><use href="#c" x="591.8" y="449.9"/><use href="#c" x="663.6" y="544.1"/><use href="#c" x="935.0" y="438.8"/><use href="#c" x="774.1" y="374.0"/><use href="#c" x="1061.4" y="538.5"/><use href="#c" x="1073.6" y="380.4"/><use href="#c" x="666.5" y="621.5"/><use href="#c" x="728.7" y="595.4"/><use href="#c" x="986.6" y="691.5"/><use href="#c" x="867.5" y="475.0"/><use href="#c" x="773.2" y="478.3"/><use href="#c" x="875.3" y="496.7"/><use href="#c" x="757.3" y="546.9"/><use href="#c" x="864.1" y="583.4"/><use href="#c" x="874.4" y="220.8"/><use href="#c" x="620.4" y="478.9"/><use href="#c" x="759.3" y="526.0"/><use href="#c" x="1032.6" y="607.9"/><use href="#c" x="682.5" y="564.6"/><use href="#c" x="705.1" y="535.2"/><use href="#c" x="1019.4" y="568.8"/><use href="#c" x="780.5" y="470.4"/><use href="#c" x="953.1" y="541.4"/><use href="#c" x="699.2" y="391.8"/><use href="#c" x="568.7" y="406.6"/><use href="#c" x="690.3" y="401.9"/><use href="#c" x="702.9" y="550.9"/><use href="#c" x="683.5" y="607.3"/><use href="#c" x="785.1" y="557.8"/><use href="#c" x="909.9" y="405.5"/><use href="#c" x="1050.4" y="378.7"/><use href="#c" x="987.2" y="358.9"/><use href="#c" x="903.9" y="332.6"/><use href="#c" x="929.9" y="351.4"/><use href="#c" x="1055.9" y="523.1"/><use href="#c" x="679.7" y="545.3"/><use href="#c" x="765.0" y="540.6"/><use href="#c" x="880.9" y="497.9"/><use href="#c" x="721.3" y="551.9"/><use href="#c" x="710.0" y="537.9"/><use href="#c" x="965.2" y="624.5"/><use href="#c" x="696.2" y="415.3"/><use href="#c" x="873.7" y="424.3"/><use href="#c" x="1018.7" y="388.5"/><use href="#c" x="869.8" y="198.0"/><use href="#c" x="687.7" y="407.5"/><use href="#c" x="768.0" y="580.5"/><use href="#c" x="735.9" y="604.1"/><use href="#c" x="873.6" y="552.2"/><use href="#c" x="778.1" y="392.2"/><use href="#c" x="877.4" y="575.8"/><use href="#c" x="990.2" y="553.0"/><use href="#c" x="867.1" y="477.8"/><use href="#c" x="868.4" y="187.5"/><use href="#c" x="657.0" y="657.7"/><use href="#c" x="572.8" y="521.5"/><use href="#c" x="753.2" y="584.8"/><use href="#c" x="870.3" y="487.9"/><use href="#c" x="692.8" y="400.1"/><use href="#c" x="672.8" y="509.5"/><use href="#c" x="664.2" y="434.4"/><use href="#c" x="823.3" y="461.7"/><use href="#c" x="870.4" y="482.2"/><use href="#c" x="689.7" y="471.3"/><use href="#c" x="683.8" y="448.3"/><use href="#c" x="648.1" y="562.4"/><use href="#c" x="872.3" y="461.0"/><use href="#c" x="677.1" y="630.4"/><use href="#c" x="1038.0" y="531.2"/><use href="#c" x="792.8" y="551.1"/><use href="#c" x="862.9" y="473.9"/><use href="#c" x="587.4" y="483.9"/><use href="#c" x="762.9" y="465.8"/><use href="#c" x="597.9" y="398.7"/><use href="#c" x="968.8" y="521.1"/><use href="#c" x="728.4" y="434.6"/><use href="#c" x="867.7" y="596.2"/><use href="#c" x="919.5" y="349.9"/><use href="#c" x="966.4" y="678.9"/><use href="#c" x="757.9" y="564.4"/><use href="#c" x="617.9" y="646.7"/><use href="#c" x="838.7" y="394.1"/><use href="#c" x="860.2" y="546.3"/><use href="#c" x="761.2" y="559.7"/><use href="#c" x="861.5" y="283.6"/><use href="#c" x="790.7" y="523.5"/><use href="#c" x="657.2" y="635.9"/><use href="#c" x="679.6" y="581.4"/><use href="#c" x="1064.0" y="582.8"/><use href="#c" x="634.7" y="632.2"/><use href="#c" x="823.1" y="495.2"/><use href="#c" x="767.8" y="416.3"/><use href="#c" x="855.6" y="577.0"/><use href="#c" x="1061.6" y="384.7"/><use href="#c" x="1087.7" y="425.3"/><use href="#c" x="899.3" y="197.2"/><use href="#c" x="929.3" y="603.2"/><use href="#c" x="1053.6" y="592.7"/><use href="#c" x="729.7" y="362.7"/><use href="#c" x="644.5" y="459.0"/><use href="#c" x="838.0" y="466.3"/><use href="#c" x="843.5" y="542.8"/><use href="#c" x="775.5" y="596.2"/><use href="#c" x="729.1" y="363.9"/><use href="#c" x="1054.4" y="388.1"/><use href="#c" x="748.0" y="475.0"/><use href="#c" x="835.7" y="442.3"/><use href="#c" x="691.1" y="491.3"/><use href="#c" x="671.7" y="624.8"/><use href="#c" x="1062.6" y="556.3"/><use href="#c" x="837.0" y="399.5"/><use href="#c" x="751.0" y="507.8"/><use href="#c" x="879.8" y="565.4"/><use href="#c" x="802.7" y="559.1"/><use href="#c" x="867.8" y="392.0"/><use href="#c" x="731.3" y="482.2"/><use href="#c" x="930.0" y="410.9"/><use href="#c" x="879.4" y="201.5"/><use href="#c" x="846.5" y="530.7"/><use href="#c" x="797.6" y="575.3"/><use href="#c" x="852.6" y="451.7"/><use href="#c" x="603.5" y="595.4"/><use href="#c" x="991.6" y="307.0"/><use href="#c" x="809.4" y="451.5"/><use href="#c" x="707.9" y="585.0"/><use href="#c" x="768.1" y="470.4"/><use href="#c" x="702.2" y="508.9"/><use href="#c" x="959.2" y="548.6"/><use href="#c" x="615.4" y="651.3"/><use href="#c" x="1073.5" y="407.3"/><use href="#c" x="574.3" y="433.6"/><use href="#c" x="675.7" y="599.5"/><use href="#c" x="896.8" y="453.6"/><use href="#c" x="896.0" y="484.7"/><use href="#c" x="849.2" y="536.9"/><use href="#c" x="810.1" y="404.9"/><use href="#c" x="1049.5" y="576.8"/><use href="#c" x="639.2" y="654.5"/><use href="#c" x="625.6" y="512.9"/><use href="#c" x="919.0" y="301.2"/><use href="#c" x="1072.3" y="413.8"/><use href="#c" x="837.4" y="499.5"/><use href="#c" x="885.1" y="419.9"/><use href="#c" x="972.5" y="361.6"/><use href="#c" x="906.4" y="305.7"/><use href="#c" x="828.1" y="525.6"/><use href="#c" x="792.5" y="540.4"/><use href="#c" x="677.6" y="632.6"/><use href="#c" x="733.4" y="428.3"/><use href="#c" x="791.6" y="600.3"/><use href="#c" x="866.5" y="526.2"/><use href="#c" x="786.4" y="422.0"/><use href="#c" x="823.7" y="575.0"/><use href="#c" x="1047.2" y="438.7"/><use href="#c" x="726.2" y="584.3"/><use href="#c" x="889.0" y="308.0"/><use href="#c" x="864.8" y="199.0"/><use href="#c" x="865.6" y="354.4"/><use href="#c" x="545.4" y="444.5"/><use href="#c" x="781.7" y="418.1"/><use href="#c" x="573.4" y="396.4"/><use href="#c" x="1049.6" y="519.4"/><use href="#c" x="572.9" y="531.1"/><use href="#c" x="814.9" y="569.0"/><use href="#c" x="1092.8" y="440.5"/><use href="#c" x="615.7" y="565.2"/><use href="#c" x="828.8" y="514.9"/><use href="#c" x="880.4" y="197.7"/><use href="#c" x="986.9" y="539.8"/><use href="#c" x="691.6" y="423.9"/><use href="#c" x="881.2" y="527.1"/><use href="#c" x="855.1" y="235.1"/><use href="#c" x="693.6" y="562.5"/><use href="#c" x="701.7" y="588.7"/><use href="#c" x="807.1" y="409.1"/><use href="#c" x="691.4" y="429.9"/><use href="#c" x="765.5" y="565.7"/><use href="#c" x="1058.2" y="525.7"/><use href="#c" x="780.1" y="448.7"/><use href="#c" x="752.8" y="448.7"/><use href="#c" x="833.7" y="563.2"/><use href="#c" x="747.1" y="538.1"/><use href="#c" x="1046.8" y="608.5"/><use href="#c" x="768.5" y="596.0"/><use href="#c" x="969.1" y="658.9"/><use href="#c" x="713.3" y="367.1"/><use href="#c" x="645.6" y="467.1"/><use href="#c" x="626.1" y="650.8"/><use href="#c" x="818.3" y="442.6"/><use href="#c" x="1023.4" y="515.0"/><use href="#c" x="681.6" y="521.7"/><use href="#c" x="1003.3" y="497.1"/><use href="#c" x="902.1" y="435.9"/><use href="#c" x="790.2" y="545.3"/><use href="#c" x="704.1" y="567.5"/><use href="#c" x="861.6" y="422.2"/><use href="#c" x="907.6" y="260.9"/><use href="#c" x="1023.6" y="438.9"/><use href="#c" x="1060.3" y="426.2"/><use href="#c" x="1026.8" y="387.1"/><use href="#c" x="719.5" y="367.7"/><use href="#c" x="691.5" y="491.4"/><use href="#c" x="851.5" y="432.3"/><use href="#c" x="807.0" y="554.6"/><use href="#c" x="625.9" y="514.1"/><use href="#c" x="803.5" y="427.7"/><use href="#c" x="922.1" y="454.1"/><use href="#c" x="563.6" y="390.8"/><use href="#c" x="998.5" y="657.8"/><use href="#c" x="715.9" y="360.5"/><use href="#c" x="722.3" y="363.4"/><use href="#c" x="742.3" y="524.0"/><use href="#c" x="747.7" y="595.3"/><use href="#c" x="1004.3" y="625.1"/><use href="#c" x="688.6" y="597.9"/><use href="#c" x="774.5" y="466.1"/><use href="#c" x="804.3" y="583.9"/><use href="#c" x="824.4" y="471.6"/><use href="#c" x="819.5" y="546.7"/><use href="#c" x="758.8" y="557.1"/><use href="#c" x="668.7" y="629.3"/><use href="#c" x="1012.9" y="595.5"/><use href="#c" x="712.7" y="560.7"/><use href="#c" x="649.7" y="424.2"/><use href="#c" x="591.2" y="385.2"/><use href="#c" x="1035.1" y="406.8"/><use href="#c" x="862.9" y="458.1"/><use href="#c" x="743.7" y="537.5"/><use href="#c" x="757.9" y="559.3"/><use href="#c" x="812.6" y="417.2"/><use href="#c" x="733.4" y="401.8"/><use href="#c" x="823.3" y="484.0"/><use href="#c" x="757.6" y="579.0"/><use href="#c" x="779.6" y="574.5"/><use href="#c" x="993.0" y="287.3"/><use href="#c" x="932.5" y="222.1"/><use href="#c" x="1047.0" y="399.2"/><use href="#c" x="844.4" y="412.8"/><use href="#c" x="756.5" y="362.8"/><use href="#c" x="812.4" y="434.5"/><use href="#c" x="954.6" y="534.6"/><use href="#c" x="823.4" y="400.2"/><use href="#c" x="620.9" y="518.6"/><use href="#c" x="712.3" y="491.6"/><use href="#c" x="696.2" y="439.0"/><use href="#c" x="674.9" y="636.7"/><use href="#c" x="611.7" y="561.6"/><use href="#c" x="1030.0" y="380.0"/><use href="#c" x="755.8" y="410.1"/><use href="#c" x="902.8" y="218.0"/><use href="#c" x="771.5" y="413.7"/><use href="#c" x="870.3" y="594.0"/><use href="#c" x="874.3" y="281.5"/><use href="#c" x="905.2" y="540.7"/><use href="#c" x="1060.9" y="350.6"/><use href="#c" x="668.8" y="573.8"/><use href="#c" x="1038.4" y="388.8"/><use href="#c" x="635.3" y="449.0"/><use href="#c" x="997.3" y="276.2"/><use href="#c" x="882.9" y="579.2"/><use href="#c" x="726.0" y="391.5"/><use href="#c" x="1082.3" y="410.7"/><use href="#c" x="656.0" y="520.8"/><use href="#c" x="613.1" y="630.9"/><use href="#c" x="849.4" y="531.2"/><use href="#c" x="686.6" y="555.0"/><use href="#c" x="983.8" y="476.2"/><use href="#c" x="1001.0" y="633.7"/><use href="#c" x="620.8" y="519.4"/><use href="#c" x="920.8" y="385.3"/><use href="#c" x="552.6" y="425.9"/><use href="#c" x="800.2" y="493.1"/><use href="#c" x="787.7" y="415.8"/><use href="#c" x="884.1" y="315.5"/><use href="#c" x="1054.9" y="380.0"/><use href="#c" x="735.7" y="553.9"/><use href="#c" x="910.5" y="277.6"/><use href="#c" x="885.9" y="312.1"/><use href="#c" x="653.0" y="492.6"/><use href="#c" x="1072.8" y="382.3"/><use href="#c" x="809.9" y="550.1"/><use href="#c" x="1009.8" y="634.3"/><use href="#c" x="633.3" y="667.5"/><use href="#c" x="858.5" y="559.9"/><use href="#c" x="683.0" y="471.7"/><use href="#c" x="793.2" y="468.1"/><use href="#c" x="587.2" y="567.1"/><use href="#c" x="722.3" y="600.6"/><use href="#c" x="583.8" y="425.4"/><use href="#c" x="576.0" y="471.1"/><use href="#c" x="814.8" y="429.8"/><use href="#c" x="913.1" y="313.7"/><use href="#c" x="874.1" y="568.6"/><use href="#c" x="667.2" y="555.6"/><use href="#c" x="690.9" y="459.3"/><use href="#c" x="609.5" y="477.7"/><use href="#c" x="637.7" y="669.6"/><use href="#c" x="727.6" y="593.4"/><use href="#c" x="707.3" y="396.9"/><use href="#c" x="1000.2" y="664.4"/><use href="#c" x="966.9" y="369.8"/><use href="#c" x="866.7" y="475.1"/><use href="#c" x="793.6" y="443.4"/><use href="#c" x="649.0" y="537.6"/><use href="#c" x="615.7" y="552.7"/><use href="#c" x="934.9" y="382.1"/><use href="#c" x="615.8" y="641.4"/><use href="#c" x="871.1" y="194.8"/><use href="#c" x="697.2" y="433.4"/><use href="#c" x="628.3" y="653.5"/><use href="#c" x="680.5" y="584.9"/><use href="#c" x="645.1" y="433.9"/><use href="#c" x="752.7" y="533.3"/><use href="#c" x="1070.6" y="409.7"/><use href="#c" x="889.0" y="309.6"/><use href="#c" x="1072.4" y="378.9"/><use href="#c" x="883.8" y="498.0"/><use href="#c" x="638.9" y="552.3"/><use href="#c" x="624.4" y="546.5"/><use href="#c" x="728.9" y="589.4"/><use href="#c" x="668.9" y="529.1"/><use href="#c" x="773.4" y="593.8"/><use href="#c" x="811.7" y="441.0"/><use href="#c" x="851.3" y="224.7"/><use href="#c" x="734.1" y="597.4"/><use href="#c" x="600.7" y="594.3"/><use href="#c" x="799.5" y="487.8"/><use href="#c" x="826.1" y="451.8"/><use href="#c" x="900.3" y="319.6"/><use href="#c" x="1055.8" y="392.9"/><use href="#c" x="589.9" y="410.8"/><use href="#c" x="930.7" y="388.7"/><use href="#c" x="762.5" y="376.9"/><use href="#c" x="762.8" y="364.2"/><use href="#c" x="580.3" y="475.6"/><use href="#c" x="939.6" y="573.9"/><use href="#c" x="731.2" y="452.9"/><use href="#c" x="786.8" y="512.5"/><use href="#c" x="820.4" y="542.0"/><use href="#c" x="1022.9" y="594.8"/><use href="#c" x="994.6" y="270.0"/><use href="#c" x="713.6" y="585.1"/><use href="#c" x="578.6" y="601.9"/><use href="#c" x="970.1" y="374.3"/><use href="#c" x="1031.7" y="390.6"/><use href="#c" x="857.2" y="528.3"/><use href="#c" x="867.6" y="194.6"/><use href="#c" x="725.6" y="472.2"/><use href="#c" x="783.6" y="499.8"/><use href="#c" x="771.2" y="492.2"/><use href="#c" x="899.9" y="226.7"/><use href="#c" x="807.1" y="380.5"/><use href="#c" x="822.7" y="495.0"/><use href="#c" x="873.2" y="314.4"/><use href="#c" x="941.2" y="377.9"/><use href="#c" x="764.0" y="618.6"/><use href="#c" x="700.9" y="557.3"/><use href="#c" x="1026.9" y="585.9"/><use href="#c" x="764.3" y="391.3"/><use href="#c" x="1013.5" y="341.4"/><use href="#c" x="851.8" y="592.9"/><use href="#c" x="952.6" y="651.1"/><use href="#c" x="912.8" y="278.4"/><use href="#c" x="846.0" y="531.3"/><use href="#c" x="757.9" y="368.2"/><use href="#c" x="785.9" y="546.4"/><use href="#c" x="945.8" y="512.4"/><use href="#c" x="1062.5" y="368.8"/><use href="#c" x="996.4" y="291.6"/><use href="#c" x="596.1" y="404.5"/><use href="#c" x="967.3" y="515.7"/><use href="#c" x="1063.2" y="422.0"/><use href="#c" x="822.8" y="506.5"/><use href="#c" x="628.3" y="648.2"/><use href="#c" x="665.8" y="649.4"/><use href="#c" x="568.8" y="475.3"/><use href="#c" x="761.9" y="581.2"/><use href="#c" x="665.5" y="650.7"/><use href="#c" x="855.2" y="472.7"/><use href="#c" x="868.3" y="210.9"/><use href="#c" x="871.5" y="289.5"/><use href="#c" x="990.1" y="519.1"/><use href="#c" x="867.9" y="532.3"/><use href="#c" x="723.1" y="533.8"/><use href="#c" x="879.5" y="353.1"/><use href="#c" x="902.9" y="468.8"/><use href="#c" x="961.4" y="363.8"/><use href="#c" x="923.8" y="437.1"/><use href="#c" x="588.7" y="613.2"/><use href="#c" x="817.3" y="582.0"/><use href="#c" x="829.7" y="511.5"/><use href="#c" x="826.4" y="412.7"/><use href="#c" x="1055.6" y="560.2"/><use href="#c" x="741.2" y="442.1"/><use href="#c" x="713.8" y="489.7"/><use href="#c" x="785.6" y="600.1"/><use href="#c" x="997.7" y="292.2"/><use href="#c" x="644.0" y="548.2"/><use href="#c" x="843.8" y="552.8"/><use href="#c" x="852.4" y="509.5"/><use href="#c" x="795.7" y="457.8"/><use href="#c" x="1086.2" y="409.6"/><use href="#c" x="634.1" y="427.4"/><use href="#c" x="594.6" y="397.6"/><use href="#c" x="711.7" y="585.6"/><use href="#c" x="812.6" y="411.8"/><use href="#c" x="837.4" y="463.0"/><use href="#c" x="810.9" y="406.0"/><use href="#c" x="1087.0" y="422.9"/><use href="#c" x="959.1" y="230.9"/><use href="#c" x="813.1" y="567.8"/><use href="#c" x="666.3" y="565.2"/><use href="#c" x="735.3" y="496.2"/><use href="#c" x="611.5" y="626.3"/><use href="#c" x="619.4" y="636.0"/><use href="#c" x="868.2" y="529.3"/><use href="#c" x="805.3" y="487.6"/><use href="#c" x="997.2" y="636.2"/><use href="#c" x="659.5" y="618.1"/><use href="#c" x="744.4" y="472.1"/><use href="#c" x="798.8" y="416.9"/><use href="#c" x="1118.2" y="423.2"/><use href="#c" x="981.0" y="372.0"/><use href="#c" x="1030.7" y="545.6"/><use href="#c" x="864.0" y="465.8"/><use href="#c" x="1103.7" y="401.2"/><use href="#c" x="715.9" y="593.7"/><use href="#c" x="625.1" y="430.5"/><use href="#c" x="790.9" y="543.6"/><use href="#c" x="804.7" y="462.5"/><use href="#c" x="642.8" y="648.0"/><use href="#c" x="1123.4" y="427.3"/><use href="#c" x="884.6" y="202.6"/><use href="#c" x="810.2" y="469.9"/><use href="#c" x="739.8" y="380.7"/><use href="#c" x="1038.9" y="543.6"/><use href="#c" x="685.3" y="600.0"/><use href="#c" x="839.1" y="464.3"/><use href="#c" x="638.8" y="541.9"/><use href="#c" x="900.7" y="455.9"/><use href="#c" x="1040.9" y="518.3"/><use href="#c" x="866.0" y="182.8"/><use href="#c" x="1036.5" y="445.9"/><use href="#c" x="957.3" y="612.2"/><use href="#c" x="762.0" y="371.7"/><use href="#c" x="822.4" y="450.9"/><use href="#c" x="743.5" y="509.7"/><use href="#c" x="860.9" y="422.2"/><use href="#c" x="888.0" y="322.4"/><use href="#c" x="713.6" y="506.9"/><use href="#c" x="803.7" y="592.6"/><use href="#c" x="978.7" y="458.4"/><use href="#c" x="1117.6" y="431.8"/><use href="#c" x="722.1" y="530.4"/><use href="#c" x="1022.2" y="620.7"/><use href="#c" x="739.3" y="428.3"/><use href="#c" x="885.6" y="252.6"/><use href="#c" x="1067.2" y="538.7"/><use href="#c" x="629.6" y="458.1"/><use href="#c" x="799.6" y="545.1"/><use href="#c" x="681.7" y="566.6"/><use href="#c" x="792.6" y="504.9"/><use href="#c" x="680.1" y="546.8"/><use href="#c" x="744.7" y="407.2"/><use href="#c" x="685.8" y="636.2"/><use href="#c" x="914.5" y="597.9"/><use href="#c" x="862.9" y="489.8"/><use href="#c" x="853.9" y="495.4"/><use href="#c" x="822.5" y="424.1"/><use href="#c" x="564.4" y="427.4"/><use href="#c" x="803.6" y="596.1"/><use href="#c" x="839.5" y="428.0"/><use href="#c" x="848.3" y="220.9"/><use href="#c" x="1023.3" y="573.2"/><use href="#c" x="797.6" y="599.2"/><use href="#c" x="745.5" y="357.3"/><use href="#c" x="728.0" y="544.8"/><use href="#c" x="675.8" y="561.0"/><use href="#c" x="856.6" y="256.9"/><use href="#c" x="607.2" y="528.8"/><use href="#c" x="751.2" y="457.0"/><use href="#c" x="1043.0" y="541.5"/><use href="#c" x="759.2" y="453.7"/><use href="#c" x="985.7" y="649.4"/><use href="#c" x="574.3" y="517.6"/><use href="#c" x="1045.4" y="531.5"/><use href="#c" x="599.3" y="555.5"/><use href="#c" x="571.4" y="545.9"/><use href="#c" x="842.7" y="433.6"/><use href="#c" x="786.5" y="582.4"/><use href="#c" x="875.0" y="285.3"/><use href="#c" x="560.4" y="427.9"/><use href="#c" x="661.0" y="484.3"/><use href="#c" x="720.0" y="593.5"/><use href="#c" x="697.6" y="437.6"/><use href="#c" x="660.2" y="450.8"/><use href="#c" x="558.3" y="423.4"/><use href="#c" x="1027.5" y="373.5"/><use href="#c" x="633.9" y="607.5"/><use href="#c" x="575.2" y="510.6"/><use href="#c" x="636.3" y="658.0"/><use href="#c" x="566.8" y="441.7"/><use href="#c" x="713.4" y="406.1"/><use href="#c" x="1041.8" y="515.2"/><use href="#c" x="900.9" y="447.2"/><use href="#c" x="1060.9" y="450.8"/><use href="#c" x="886.7" y="491.1"/><use href="#c" x="1036.1" y="392.8"/><use href="#c" x="684.2" y="430.9"/><use href="#c" x="681.7" y="564.0"/><use href="#c" x="862.1" y="533.0"/><use href="#c" x="756.4" y="606.9"/><use href="#c" x="1026.8" y="339.3"/><use href="#c" x="838.6" y="409.1"/><use href="#c" x="867.6" y="596.9"/><use href="#c" x="882.8" y="474.8"/></g></svg><span class="abs" style="left:5px;top:707px;font:11px Liberation Sans,sans-serif;letter-spacing:0.092px;line-height:14px;">Переключить текущий слой в режим редакти</span><span class="abs" style="left:242px;top:707px;font:11px Liberation Sans,sans-serif;letter-spacing:-0.043px;line-height:14px;text-decoration:underline;color:#0000ee;">Доступна новая версия модуля</span><div class="abs" style="left:410px;top:702px;width:21px;height:22px;background:#e4e4e4;border:1px solid #8f8f8f;border-radius:3px"></div><svg class="abs" style="left:412px;top:704px" width="18" height="18" viewBox="0 0 18 18"><circle cx="8" cy="8" r="5.500" fill="none" stroke="#222" stroke-width="1.400"/><path d="M4 5l9 8M6 12l6-8M12 12l3 3" stroke="#222" stroke-width="1.300"/><circle cx="8" cy="8" r="2" fill="#222"/></svg><span class="abs" style="left:439px;top:707px;font:11px Liberation Sans,sans-serif;letter-spacing:0.271px;line-height:14px;">Координаты:</span><div class="abs" style="left:517px;top:703px;width:270px;height:22px;background:#fff;border:1px solid #b4b4b4;border-radius:2px"></div><span class="abs" style="left:609px;top:707px;font:11px Liberation Sans,sans-serif;letter-spacing:-0.047px;line-height:14px;">3610183,6977424</span><span class="abs" style="left:796px;top:707px;font:11px Liberation Sans,sans-serif;letter-spacing:-0.295px;line-height:14px;">Масштаб</span><div class="abs" style="left:853px;top:703px;width:87px;height:22px;background:#fff;border:1px solid #a8a8a8;border-radius:2px"></div><div class="abs" style="left:924px;top:704px;width:15px;height:20px;background:#e8e8e8;border-left:1px solid #b4b4b4"></div><svg class="abs" style="left:927.500px;top:711.500px" width="9" height="5" viewBox="0 0 9 5"><path d="M0 0h9l-4.500 5z" fill="#000"/></svg><span class="abs" style="left:859px;top:707px;font:11px Liberation Sans,sans-serif;letter-spacing:-0.101px;line-height:14px;">1:2 851 240</span><span class="abs" style="left:949px;top:707px;font:11px Liberation Sans,sans-serif;letter-spacing:-0.112px;line-height:14px;">Вращение:</span><div class="abs" style="left:1014px;top:703px;width:98px;height:22px;background:#fff;border:1px solid #a8a8a8;border-radius:2px"></div><span class="abs" style="left:1019px;top:707px;font:11px Liberation Sans,sans-serif;letter-spacing:0.569px;line-height:14px;">0,0</span><div class="abs" style="left:1096px;top:704px;width:15px;height:20px;background:#f0f0f0;border-left:1px solid #c8c8c8"></div><svg class="abs" style="left:1099.500px;top:706px" width="8" height="16" viewBox="0 0 8 16"><path d="M0 4.500h8l-4-4.500z M0 11.500h8l-4 4.500z" fill="#000"/></svg><div class="cb on" style="left:1118px;top:707px;border-color:#8a8a8a"></div><span class="abs" style="left:1136px;top:707px;font:11px Liberation Sans,sans-serif;letter-spacing:-0.068px;line-height:14px;">Отрисовка</span><svg class="abs" style="left:1208px;top:705px" width="16" height="16" viewBox="0 0 16 16"><circle cx="8" cy="8" r="6.500" fill="#f4f4f4" stroke="#222" stroke-width="1.300"/><ellipse cx="8" cy="8" rx="3" ry="6.500" fill="none" stroke="#222" stroke-width="1"/><path d="M1.500 8h13M8 1.500v13M2.500 4.500h11M2.500 11.500h11" stroke="#222" stroke-width="1"/><path d="M0 0h4v1.500h-2.500v2.500h-1.500zM16 0h-4v1.500h2.500v2.500h1.500zM0 16h4v-1.500h-2.500v-2.500h-1.500zM16 16h-4v-1.500h2.500v-2.500h1.500z" fill="#333"/></svg><span class="abs" style="left:1228px;top:707px;font:11px Liberation Sans,sans-serif;letter-spacing:-0.431px;line-height:14px;">EPSG:3857 (OTF)</span><svg class="abs" style="left:1334px;top:705px" width="18" height="17" viewBox="0 0 18 17"><path d="M9 .5c4.500 0 8 2.800 8 6.300 0 2.500-1.700 4.600-4.200 5.600l3 3.600-5.300-2.700c-.5.100-1 .1-1.500.1-4.500 0-8-2.800-8-6.300S4.500.5 9 .5z" fill="#6a6a6a"/></svg></body></html>
